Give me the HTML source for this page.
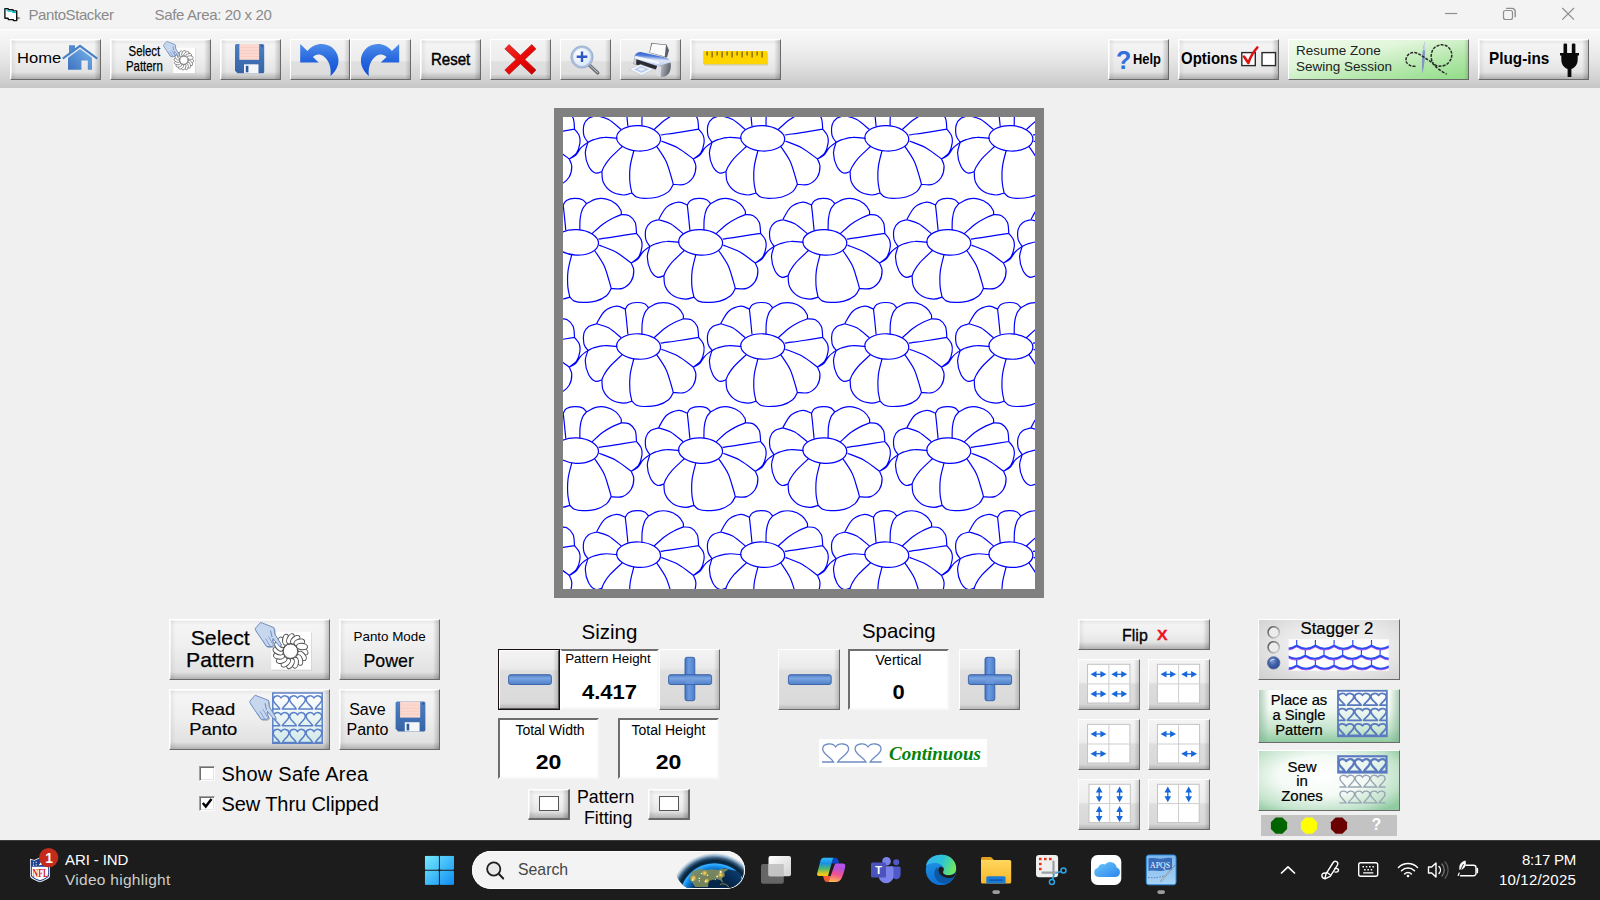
<!DOCTYPE html>
<html lang="en">
<head>
<meta charset="utf-8">
<title>PantoStacker</title>
<style>
html,body{margin:0;padding:0;}
body{width:1600px;height:900px;overflow:hidden;background:#f0f0f0;position:relative;font-family:"Liberation Sans",sans-serif;color:#000;}
.abs{position:absolute;}
svg{position:absolute;overflow:visible;}
/* title bar */
#title{left:0;top:0;width:1600px;height:29px;background:#f3f3f3;}
#title .t{position:absolute;top:6px;font-size:15px;color:#8a8a8a;white-space:nowrap;}
/* toolbar */
#toolbar{left:0;top:29px;width:1600px;height:59px;background:linear-gradient(#fdfdfd 0,#fdfdfd 1px,#f7f7f7 2px,#f3f3f3 20%,#e7e7e7 50%,#d2d2d2 85%,#c6c6c6 100%);}
.btn{position:absolute;box-sizing:border-box;border:1px solid;border-color:#fff #6a6a6a #6a6a6a #fff;background:linear-gradient(to right,rgba(0,0,0,0) calc(100% - 6px),rgba(0,0,0,0.2) 100%),linear-gradient(to bottom,rgba(0,0,0,0) calc(100% - 7px),rgba(0,0,0,0.2) 100%),linear-gradient(to right,rgba(255,255,255,0.9) 0,rgba(0,0,0,0.05) 1.5px,rgba(0,0,0,0) 6px),linear-gradient(to bottom,rgba(255,255,255,0.9) 0,rgba(0,0,0,0.05) 1.5px,rgba(0,0,0,0) 5px),linear-gradient(#f6f6f6,#efefef 45%,#dedede 100%);}
.btn .lab{position:absolute;white-space:nowrap;}
.tb{top:39px;height:41px;}
.glass{background:linear-gradient(to right,rgba(0,0,0,0) calc(100% - 5px),rgba(0,0,0,0.16) 100%),linear-gradient(to bottom,rgba(0,0,0,0) calc(100% - 5px),rgba(0,0,0,0.16) 100%),linear-gradient(#f3f3f3 0%,#ededed 52%,#e0e0e0 56%,#dbdbdb 100%);}
.glass2{background:linear-gradient(to right,rgba(0,0,0,0) calc(100% - 5px),rgba(0,0,0,0.16) 100%),linear-gradient(to bottom,rgba(0,0,0,0) calc(100% - 5px),rgba(0,0,0,0.16) 100%),linear-gradient(#f4f4f4 0%,#ebebeb 30%,#dfdfdf 36%,#d9d9d9 100%);}
.fb{width:62px;height:51px;background:linear-gradient(to right,rgba(0,0,0,0) calc(100% - 5px),rgba(0,0,0,0.16) 100%),linear-gradient(to bottom,rgba(0,0,0,0) calc(100% - 5px),rgba(0,0,0,0.18) 100%),linear-gradient(#f4f4f4 0%,#ededed 45%,#dddddd 50%,#d7d7d7 100%);}
.green{background:linear-gradient(to right,rgba(0,0,0,0) calc(100% - 4px),rgba(0,0,0,0.12) 100%),linear-gradient(168deg,#f0fbec 0%,#e2f6dc 35%,#b4e8ab 68%,#90dc88 100%);}
/* canvas */
#canvas{left:554px;top:108px;width:472px;height:472px;border:9px solid #808080;background:#fff;overflow:hidden;}
/* fields */
.field{position:absolute;box-sizing:border-box;background:#fff;border:2px solid;border-color:#6e6e6e #f8f8f8 #f8f8f8 #6e6e6e;}
.field .cap{position:absolute;left:0;right:0;text-align:center;font-size:14px;top:1px;white-space:nowrap;}
.field .val{position:absolute;left:0;right:0;text-align:center;font-weight:bold;font-size:21px;white-space:nowrap;}
.h{position:absolute;font-size:20px;white-space:nowrap;}
.chk{position:absolute;box-sizing:border-box;width:16px;height:15px;background:#fff;border:1px solid;border-color:#a0a0a0 #fdfdfd #fdfdfd #a0a0a0;box-shadow:inset 1px 1px 0 #6e6e6e,inset -1px -1px 0 #e3e3e3;}
/* taskbar */
#taskbar{left:0;top:840px;width:1600px;height:60px;background:#1c1c1c;}
</style>
</head>
<body>
<div id="title" class="abs">
<svg style="left:0;top:0" width="30" height="30" viewBox="0 0 30 30">
<path d="M17.200 16.500l3.500 1.600-3.500 2z" fill="#8a8a8a"/>
<path d="M4.900 8.600h3.300l.4 1.200h4.400l.4 1.100h3.300v9.700h-3.300v-1h-5l-.3-1.300h-3.200z" fill="#fff" stroke="#111" stroke-width="1.400" stroke-linejoin="round"/>
<path d="M5.600 9.300h2.200l.4 1.200h4.400l.4 1.100h3v1.300h-3.600l-.4-1.100h-4.400l-.4-1.200h-1.600z" fill="#00c4cc"/>
</svg>
<span class="t" id="t1" style="left:28.500px;letter-spacing:-0.42px">PantoStacker</span>
<span class="t" id="t2" style="left:154.500px;letter-spacing:-0.36px">Safe Area: 20 x 20</span>
<svg style="left:1430px;top:0" width="170" height="30" viewBox="1430 0 170 30" fill="none" stroke="#8e8e8e" stroke-width="1.200">
<path d="M1445 13.500h12.200"/>
<rect x="1503.500" y="10.500" width="9" height="9" rx="2"/>
<path d="M1506 8.400h6a3.200 3.200 0 0 1 3.200 3.200v5.600" stroke-width="1.400"/>
<path d="M1562.300 8l11.700 11.700M1574 8l-11.700 11.700"/>
</svg>

</div>
<div id="toolbar" class="abs"></div>
<div class="btn tb" style="left:10px;width:91px"><span class="lab" id="l_home" style="left:5.500px;top:10.500px;font-size:13.800px;transform-origin:0 50%;transform:scaleX(1.2)">Home</span></div>
<div class="btn tb" style="left:110px;width:101px"><span class="lab" id="l_sel" style="left:15px;top:3px;font-size:15px;line-height:15px;text-align:center;transform-origin:0 0;transform:scaleX(0.76);-webkit-text-stroke:0.25px #000">Select<br>Pattern</span></div>
<div class="btn tb" style="left:220px;width:61px"></div>
<div class="btn tb glass" style="left:290px;width:60px"></div>
<div class="btn tb glass" style="left:350px;width:61px"></div>
<div class="btn tb" style="left:420px;width:61px"><span class="lab" id="l_reset" style="left:10px;top:11px;font-size:16px;-webkit-text-stroke:0.45px #000;transform-origin:0 50%;transform:scaleX(0.94)">Reset</span></div>
<div class="btn tb glass" style="left:490px;width:61px"></div>
<div class="btn tb glass" style="left:560px;width:51px"></div>
<div class="btn tb glass" style="left:620px;width:61px"></div>
<div class="btn tb" style="left:690px;width:91px"></div>
<div class="btn tb" style="left:1108px;width:61px"><span class="lab" id="l_q" style="left:7px;top:6px;font-size:25px;font-weight:bold;color:#2f6fde">?</span><span class="lab" id="l_help" style="left:24px;top:10px;font-size:15px;font-weight:bold;transform-origin:0 50%;transform:scaleX(0.86)">Help</span></div>
<div class="btn tb" style="left:1178px;width:101px"><span class="lab" id="l_opt" style="left:2px;top:9px;font-size:17px;font-weight:bold;transform-origin:0 50%;transform:scaleX(0.88)">Options</span></div>
<div class="btn tb green" style="left:1288px;width:181px"><span class="lab" id="l_res" style="left:7px;top:3px;font-size:13.500px;line-height:16px;color:#222">Resume Zone<br>Sewing Session</span></div>
<div class="btn tb" style="left:1478px;width:111px"><span class="lab" id="l_plug" style="left:10px;top:9px;font-size:17px;font-weight:bold;transform-origin:0 50%;transform:scaleX(0.9)">Plug-ins</span></div>
<svg style="left:0;top:30px" width="1600" height="60" viewBox="0 30 1600 60">
<defs>
<linearGradient id="gHouse" x1="1" y1="0" x2="0" y2="1"><stop offset="0" stop-color="#74b4ee"/><stop offset="1" stop-color="#3f72bd"/></linearGradient>
<linearGradient id="gArrow" x1="0" y1="0" x2="0" y2="1"><stop offset="0" stop-color="#4d8cea"/><stop offset="0.5" stop-color="#2566de"/><stop offset="1" stop-color="#1450d2"/></linearGradient>
<linearGradient id="gRed" x1="0" y1="0" x2="1" y2="1"><stop offset="0" stop-color="#f03030"/><stop offset="0.5" stop-color="#e80808"/><stop offset="1" stop-color="#c80000"/></linearGradient>
<radialGradient id="gLens" cx="0.4" cy="0.35" r="0.7"><stop offset="0" stop-color="#ffffff"/><stop offset="1" stop-color="#d6e6f7"/></radialGradient>
<linearGradient id="gPrnTop" x1="0.6" y1="0" x2="0.4" y2="1"><stop offset="0" stop-color="#2f5cc4"/><stop offset="0.3" stop-color="#4f7cd8"/><stop offset="0.55" stop-color="#dfe8f8"/><stop offset="1" stop-color="#b4c9ee"/></linearGradient>
<linearGradient id="gPrnBody" x1="0" y1="0" x2="1" y2="0.2"><stop offset="0" stop-color="#dfe2e7"/><stop offset="0.35" stop-color="#b4b9c1"/><stop offset="1" stop-color="#5e636b"/></linearGradient>
<linearGradient id="gFloppy" x1="0" y1="0" x2="0" y2="1"><stop offset="0" stop-color="#4d7fc2"/><stop offset="1" stop-color="#3563a6"/></linearGradient>
</defs>
<!-- house -->
<g>
<path d="M69 45.300h6v5l-6 4.500z" fill="#4f8bd2"/>
<path d="M68 69.700v-13.500l12-9 12 9v13.500h-4.200v-9.300h-6.400v9.300z" fill="url(#gHouse)"/>
<path d="M62.800 58.600l17.200-12.700 17.200 12.700" fill="none" stroke="#4a7fc0" stroke-width="2.200" stroke-linejoin="round"/>
<path d="M65 59.300l15-11 15 11" fill="none" stroke="#e9eef5" stroke-width="1.100"/>
</g>
<!-- select pattern icon -->
<g>
<rect x="174" y="48.400" width="21.700" height="25.500" fill="#999" opacity="0.300"/>
<rect x="173.400" y="47.800" width="21.700" height="25.500" fill="#fff"/>
<g fill="#fff" stroke="#585858" stroke-width="0.6"><ellipse cx="190.8" cy="60.3" rx="3.1" ry="1.8" transform="rotate(28 190.8 60.3)"/><ellipse cx="190.2" cy="63.0" rx="3.1" ry="1.8" transform="rotate(50 190.2 63.0)"/><ellipse cx="188.7" cy="65.2" rx="3.1" ry="1.8" transform="rotate(73 188.7 65.2)"/><ellipse cx="186.5" cy="66.7" rx="3.1" ry="1.8" transform="rotate(96 186.5 66.7)"/><ellipse cx="183.8" cy="67.2" rx="3.1" ry="1.8" transform="rotate(118 183.8 67.2)"/><ellipse cx="181.1" cy="66.7" rx="3.1" ry="1.8" transform="rotate(140 181.1 66.7)"/><ellipse cx="178.9" cy="65.2" rx="3.1" ry="1.8" transform="rotate(163 178.9 65.2)"/><ellipse cx="177.4" cy="63.0" rx="3.1" ry="1.8" transform="rotate(186 177.4 63.0)"/><ellipse cx="176.9" cy="60.3" rx="3.1" ry="1.8" transform="rotate(208 176.9 60.3)"/><ellipse cx="177.4" cy="57.6" rx="3.1" ry="1.8" transform="rotate(230 177.4 57.6)"/><ellipse cx="178.9" cy="55.4" rx="3.1" ry="1.8" transform="rotate(253 178.9 55.4)"/><ellipse cx="181.1" cy="53.9" rx="3.1" ry="1.8" transform="rotate(276 181.1 53.9)"/><ellipse cx="183.8" cy="53.3" rx="3.1" ry="1.8" transform="rotate(298 183.8 53.3)"/><ellipse cx="186.5" cy="53.9" rx="3.1" ry="1.8" transform="rotate(320 186.5 53.9)"/><ellipse cx="188.7" cy="55.4" rx="3.1" ry="1.8" transform="rotate(343 188.7 55.4)"/><ellipse cx="190.2" cy="57.6" rx="3.1" ry="1.8" transform="rotate(366 190.2 57.6)"/><circle cx="183.8" cy="60.3" r="4.0"/></g>
<g transform="translate(163.5 41.4) scale(0.62) translate(-255.2 -622.4)"><path d="M255.2 628.500L260.600 622.400L274 627.600L274.800 634L281.500 645L279.500 646.500L273 638.500L272.500 641L274.500 644.500L272 646.500L266.500 646.500L256 631Z" fill="#5a6a80" opacity="0.450" transform="translate(1.200 1.400)"/><path d="M255.2 628.500L260.600 622.400L274 627.600L274.800 634L281.500 645L279.500 646.500L273 638.500L272.500 641L274.500 644.500L272 646.500L266.500 646.500L256 631Z" fill="#c7d7ee" stroke="#6f8fc2" stroke-width="1.27" stroke-linejoin="round"/><path d="M268.500 636.500l4.500 8M265.500 638.500l4.500 7.500M262.500 640l4 6" stroke="#7d9bc9" stroke-width="1.14" fill="none"/><path d="M270.500 630.500l1.500 6.500" stroke="#6583b5" stroke-width="1.14" fill="none"/></g>
</g>
<!-- floppy -->
<g>
<path d="M235 45.500a1.500 1.500 0 0 1 1.500-1.500h26.200a1.500 1.500 0 0 1 1.500 1.500v26.300a1.500 1.500 0 0 1-1.500 1.500h-25.200l-2.500-2.500z" fill="url(#gFloppy)"/>
<rect x="239.400" y="44" width="19.700" height="15.800" fill="#fbd9d0"/>
<path d="M239.400 47.500h19.700M239.400 50.500h19.700M239.400 53.500h19.700M239.400 56.500h19.700" stroke="#f8c4b8" stroke-width="0.600"/>
<rect x="244" y="64.300" width="14.500" height="9" fill="#f4f6fa"/>
<rect x="245.800" y="65.800" width="2.600" height="6.500" fill="#2f5a9c"/>
<rect x="261.300" y="45.300" width="1.700" height="1.700" fill="#2c558f"/>
</g>
<!-- undo / redo -->
<path id="undoArrow" d="M300.200 44.100v18.500h18.500l-5.800-5.700c2.500-2.800 7-3.500 11-.5 4.500 3.400 7.800 10.500 6.600 19.700 4.600-4 8-9.500 8-15.600 0-8-6.500-16.400-16.800-16.400-5.500 0-10.500 2.500-14.200 6.800z" fill="url(#gArrow)"/>
<path d="M399.200 44.100v18.500h-18.500l5.800-5.700c-2.500-2.800-7-3.500-11-.5-4.500 3.400-7.800 10.500-6.600 19.700-4.600-4-8-9.500-8-15.600 0-8 6.500-16.400 16.800-16.400 5.500 0 10.500 2.500 14.200 6.800z" fill="url(#gArrow)"/>
<!-- red X -->
<path d="M509 44.500l11.400 10.700 11.400-10.700 4.200 4.400-11.200 10.500 11.200 10.500-4.200 4.500-11.400-10.700-11.400 10.700-4.200-4.500 11.200-10.500-11.200-10.500z" fill="url(#gRed)" stroke="#b00000" stroke-width="0.500"/>
<!-- zoom -->
<g>
<path d="M589.500 65.200l8.300 7.700" stroke="#6a6f78" stroke-width="3.400" stroke-linecap="round"/>
<path d="M590 65.500l7.500 7" stroke="#c9ced6" stroke-width="1" stroke-linecap="round"/>
<circle cx="582" cy="57" r="10" fill="url(#gLens)" stroke="#a9c0de" stroke-width="2.200"/>
<circle cx="582" cy="57" r="11.200" fill="none" stroke="#8a9bb5" stroke-width="0.600"/>
<path d="M582 51.500v10.500M576.700 56.700h10.600" stroke="#2c58c8" stroke-width="2.400"/>
</g>
<!-- printer -->
<g>
<path d="M651.300 42.900l15.200 1.500 2.500 5.800-2 7.300-17.700-4.800z" fill="#5a5e66"/>
<path d="M652 43.700l14 1.400-1.200 11.300-15-3.800z" fill="#fbfbfb"/>
<path d="M633.800 58.500c.3-2.500 1.600-5 3.500-5.800 1.500-.7 3-.8 4.500-.5l23.700 5.400c2.500.7 4.500 2.500 5 4.800l-13.300 3.500-23.400-6.500z" fill="url(#gPrnTop)"/>
<path d="M636 57.200l22 5.600" stroke="#fff" stroke-width="2.600" opacity="0.750" stroke-linecap="round"/>
<path d="M634.200 58.500l23 7.400-1 3.600-22.600-5.500z" fill="#2a2c31"/>
<path d="M633.800 58.500c-.6 1.800-.6 4 .3 5.700l2 .6.300-5.500z" fill="#c9ccd2"/>
<path d="M657.200 65.900l13.300-3.500c.8 3.500.3 7.500-1.600 10.800-1.500 2.300-4 3.700-7.300 3.900l-5.400-1.900z" fill="url(#gPrnBody)"/>
<path d="M656.200 69.500l1-3.600 4 1.200-.5 10-4.500-1.900z" fill="#e2e5ea" opacity="0.800"/>
<path d="M640.500 64.400l13.200 4.900-12.200 5.900-12-5.900z" fill="#f6f8fc" stroke="#b4bac6" stroke-width="0.500"/>
<path d="M640.800 66l8.600 3.300-7.800 3.800-7.800-3.700z" fill="#b9cdee"/>
<path d="M641 67.500l4.500 1.800-3.800 1.800-4-1.800z" fill="#e8eef8"/>
</g>
<!-- ruler -->
<g>
<rect x="703.500" y="51.600" width="64" height="13" fill="#bfa000" opacity="0.350" transform="translate(0.600 0.900)"/>
<rect x="703.200" y="51" width="64" height="13" fill="#ffd500"/>
<path d="M707.100 51.600v3.800M717.100 51.600v3.800M727.100 51.600v3.800M737.100 51.600v3.800M747.100 51.600v3.800M757.100 51.600v3.800M712.100 51.600v6M722.100 51.600v6M732.100 51.600v6M742.100 51.600v6M752.100 51.600v6M762.100 51.600v6" stroke="#6b5600" stroke-width="1.200"/>
</g>
<!-- options checkboxes -->
<g>
<rect x="1241.800" y="52.600" width="13.500" height="13" fill="#fff" stroke="#2a2a2a" stroke-width="1.400"/>
<rect x="1262" y="52.600" width="13.500" height="13" fill="#fff" stroke="#2a2a2a" stroke-width="1.400"/>
<path d="M1244 56.500l4.300 6.500c2-6 5-11 9-15.500" fill="none" stroke="#e01010" stroke-width="2.600" stroke-linejoin="round" stroke-linecap="round"/>
</g>
<!-- needle & thread -->
<g fill="none">
<path d="M1424.800 41.500c.8 10 .2 22-2.300 32-1.200-10-.8-22 2.300-32z" fill="#8497c6"/><path d="M1424.800 41.500c.4 3 .4 6 .2 9l-2-.2c.4-3 1-6 1.800-8.800z" fill="#c9d3e8"/>
<path d="M1415.5 66.4C1414.8 66.3 1412.5 66.5 1411.0 65.9C1409.5 65.2 1407.5 63.9 1406.7 62.7C1405.9 61.4 1405.8 59.8 1406.2 58.4C1406.6 57.0 1407.6 55.1 1408.9 54.1C1410.1 53.2 1412.0 52.5 1413.7 52.5C1415.4 52.5 1417.1 53.2 1419.0 54.1C1420.9 55.0 1422.8 56.5 1424.9 57.9C1426.9 59.2 1429.5 60.7 1431.3 62.1C1433.0 63.6 1433.9 65.0 1435.5 66.4C1437.1 67.8 1439.0 69.4 1440.9 70.7C1442.7 72.0 1445.8 73.6 1446.7 74.1M1431.8 61.1C1431.7 60.0 1430.9 56.8 1431.3 54.7C1431.6 52.5 1432.3 49.9 1433.9 48.3C1435.5 46.6 1438.6 45.1 1440.9 44.8C1443.2 44.5 1446.0 45.4 1447.8 46.7C1449.6 48.0 1451.0 50.5 1451.5 52.5C1452.1 54.6 1451.8 57.0 1451.0 58.9C1450.2 60.9 1448.4 63.1 1446.7 64.3C1445.0 65.5 1442.7 66.0 1440.9 66.1C1439.0 66.3 1437.0 65.7 1435.5 65.1C1434.1 64.4 1432.9 62.6 1432.3 62.1" stroke="#2a2a2a" stroke-width="1.500" stroke-dasharray="3 1.200" fill="none"/>
</g>
<!-- plug -->
<g fill="#0a0a0a">
<rect x="1563.500" y="43.600" width="3.600" height="10" rx="1.200"/>
<rect x="1571.800" y="43.600" width="3.600" height="10" rx="1.200"/>
<path d="M1560 53h19v2.500h-1.300v4c0 5-3 8.500-6.300 9.500v8h-3.800v-8c-3.300-1-6.300-4.500-6.300-9.500v-4h-1.300z"/>
</g>

</svg>

<div id="canvas" class="abs">
<svg width="472" height="472" viewBox="0 0 472 472" style="left:0;top:0" fill="none" stroke="#0000ff" stroke-width="1.200">
<g transform="translate(-110.6 -82.8)"><ellipse rx="22" ry="12.7" transform="rotate(3)"/><path d="M-10.7 -12.0C-10.9 -14.2 -11.6 -21.1 -12.0 -25.3C-12.4 -29.6 -13.1 -35.3 -13.3 -37.3M3.3 -12.3C3.4 -14.1 3.2 -19.8 3.6 -23.3C4.0 -26.8 4.9 -30.8 6.0 -33.3C7.1 -35.9 9.3 -37.8 10.0 -38.7M15.3 -8.7C17.1 -10.2 22.7 -15.5 26.0 -18.0C29.3 -20.5 32.2 -22.1 35.3 -23.7C38.4 -25.4 43.1 -27.1 44.7 -27.7M22.0 -3.3C25.1 -3.8 34.3 -5.0 40.7 -6.0C47.0 -7.0 56.8 -8.6 60.0 -9.1M22.7 2.7C25.4 3.8 34.0 6.6 39.3 9.6C44.7 12.6 52.1 18.8 54.7 20.7M17.7 7.6C19.3 10.1 24.8 17.5 27.3 22.7C29.8 27.8 31.4 34.8 32.7 38.7C33.9 42.6 34.3 44.8 34.7 46.0M-4.7 12.0C-5.3 14.7 -7.7 22.7 -8.4 28.0C-9.1 33.3 -9.0 39.6 -8.7 44.0C-8.4 48.4 -7.0 52.9 -6.7 54.7M-16.1 7.9C-18.2 9.9 -25.6 16.6 -28.7 20.0C-31.7 23.4 -33.1 25.8 -34.4 28.0C-35.7 30.2 -36.3 32.4 -36.7 33.3M-21.3 0.0C-23.4 -0.2 -30.1 -1.2 -34.0 -0.9C-37.9 -0.7 -41.9 0.5 -44.7 1.3C-47.4 2.2 -49.7 3.6 -50.7 4.0M-42.0 -22.7C-40.0 -22.0 -34.1 -21.0 -30.0 -18.7C-25.9 -16.3 -19.4 -10.3 -17.3 -8.7M-13.3 -37.3C-14.8 -37.8 -18.6 -40.6 -22.0 -40.3C-25.4 -39.9 -30.7 -38.2 -34.0 -35.3C-37.3 -32.4 -40.7 -25.0 -42.0 -22.9M-13.3 -37.3C-12.8 -38.1 -11.9 -40.9 -10.0 -42.0C-8.1 -43.1 -4.7 -43.9 -2.0 -44.0C0.7 -44.1 4.0 -43.6 6.0 -42.7C8.0 -41.8 9.3 -39.3 10.0 -38.7M10.0 -38.7C11.6 -39.4 16.0 -42.6 19.3 -43.3C22.7 -44.1 26.7 -44.1 30.0 -43.3C33.3 -42.6 36.9 -40.6 39.3 -38.7C41.7 -36.8 43.5 -33.8 44.4 -32.0C45.3 -30.2 44.6 -28.4 44.7 -27.7M44.7 -27.7C46.0 -27.6 50.3 -28.0 52.7 -26.7C55.0 -25.4 57.4 -22.9 58.7 -20.0C59.9 -17.1 59.8 -10.9 60.0 -9.1M60.0 -9.1C60.8 -8.0 63.8 -5.1 64.7 -2.7C65.6 -0.3 65.8 2.4 65.3 5.3C64.9 8.2 63.8 12.1 62.0 14.7C60.2 17.2 55.9 19.7 54.7 20.7M54.7 20.7C55.1 21.9 57.3 25.0 57.3 28.0C57.3 31.0 56.6 35.7 54.7 38.7C52.8 41.7 49.3 44.8 46.0 46.0C42.7 47.2 36.6 46.0 34.7 46.0M34.7 46.0C33.9 47.2 32.6 51.2 30.0 53.3C27.4 55.4 23.3 57.6 19.3 58.7C15.3 59.8 9.6 60.0 6.0 60.0C2.4 60.0 0.1 59.6 -2.0 58.7C-4.1 57.8 -5.9 55.3 -6.7 54.7M-6.7 54.7C-8.1 55.0 -11.9 56.9 -15.3 56.7C-18.8 56.4 -24.0 55.4 -27.3 53.3C-30.7 51.2 -33.8 47.3 -35.3 44.0C-36.9 40.7 -36.4 35.1 -36.7 33.3M-36.7 33.3C-37.8 33.6 -41.1 35.6 -43.3 34.7C-45.6 33.8 -48.3 31.3 -50.0 28.0C-51.7 24.7 -53.2 18.7 -53.3 14.7C-53.4 10.7 -51.1 5.8 -50.7 4.0M-50.7 4.0C-51.3 2.9 -54.0 0.2 -54.7 -2.7C-55.3 -5.6 -55.4 -10.4 -54.7 -13.3C-53.9 -16.2 -52.1 -18.4 -50.0 -20.0C-47.9 -21.6 -43.3 -22.2 -42.0 -22.7M54.7 20.7C55.8 20.0 59.4 18.5 61.3 16.7C63.3 14.8 64.6 11.4 66.3 9.6C67.9 7.8 69.9 6.5 71.1 5.6C72.3 4.7 73.1 4.3 73.5 4.0"/></g>
<g transform="translate(13.5 -82.8)"><ellipse rx="22" ry="12.7" transform="rotate(3)"/><path d="M-10.7 -12.0C-10.9 -14.2 -11.6 -21.1 -12.0 -25.3C-12.4 -29.6 -13.1 -35.3 -13.3 -37.3M3.3 -12.3C3.4 -14.1 3.2 -19.8 3.6 -23.3C4.0 -26.8 4.9 -30.8 6.0 -33.3C7.1 -35.9 9.3 -37.8 10.0 -38.7M15.3 -8.7C17.1 -10.2 22.7 -15.5 26.0 -18.0C29.3 -20.5 32.2 -22.1 35.3 -23.7C38.4 -25.4 43.1 -27.1 44.7 -27.7M22.0 -3.3C25.1 -3.8 34.3 -5.0 40.7 -6.0C47.0 -7.0 56.8 -8.6 60.0 -9.1M22.7 2.7C25.4 3.8 34.0 6.6 39.3 9.6C44.7 12.6 52.1 18.8 54.7 20.7M17.7 7.6C19.3 10.1 24.8 17.5 27.3 22.7C29.8 27.8 31.4 34.8 32.7 38.7C33.9 42.6 34.3 44.8 34.7 46.0M-4.7 12.0C-5.3 14.7 -7.7 22.7 -8.4 28.0C-9.1 33.3 -9.0 39.6 -8.7 44.0C-8.4 48.4 -7.0 52.9 -6.7 54.7M-16.1 7.9C-18.2 9.9 -25.6 16.6 -28.7 20.0C-31.7 23.4 -33.1 25.8 -34.4 28.0C-35.7 30.2 -36.3 32.4 -36.7 33.3M-21.3 0.0C-23.4 -0.2 -30.1 -1.2 -34.0 -0.9C-37.9 -0.7 -41.9 0.5 -44.7 1.3C-47.4 2.2 -49.7 3.6 -50.7 4.0M-42.0 -22.7C-40.0 -22.0 -34.1 -21.0 -30.0 -18.7C-25.9 -16.3 -19.4 -10.3 -17.3 -8.7M-13.3 -37.3C-14.8 -37.8 -18.6 -40.6 -22.0 -40.3C-25.4 -39.9 -30.7 -38.2 -34.0 -35.3C-37.3 -32.4 -40.7 -25.0 -42.0 -22.9M-13.3 -37.3C-12.8 -38.1 -11.9 -40.9 -10.0 -42.0C-8.1 -43.1 -4.7 -43.9 -2.0 -44.0C0.7 -44.1 4.0 -43.6 6.0 -42.7C8.0 -41.8 9.3 -39.3 10.0 -38.7M10.0 -38.7C11.6 -39.4 16.0 -42.6 19.3 -43.3C22.7 -44.1 26.7 -44.1 30.0 -43.3C33.3 -42.6 36.9 -40.6 39.3 -38.7C41.7 -36.8 43.5 -33.8 44.4 -32.0C45.3 -30.2 44.6 -28.4 44.7 -27.7M44.7 -27.7C46.0 -27.6 50.3 -28.0 52.7 -26.7C55.0 -25.4 57.4 -22.9 58.7 -20.0C59.9 -17.1 59.8 -10.9 60.0 -9.1M60.0 -9.1C60.8 -8.0 63.8 -5.1 64.7 -2.7C65.6 -0.3 65.8 2.4 65.3 5.3C64.9 8.2 63.8 12.1 62.0 14.7C60.2 17.2 55.9 19.7 54.7 20.7M54.7 20.7C55.1 21.9 57.3 25.0 57.3 28.0C57.3 31.0 56.6 35.7 54.7 38.7C52.8 41.7 49.3 44.8 46.0 46.0C42.7 47.2 36.6 46.0 34.7 46.0M34.7 46.0C33.9 47.2 32.6 51.2 30.0 53.3C27.4 55.4 23.3 57.6 19.3 58.7C15.3 59.8 9.6 60.0 6.0 60.0C2.4 60.0 0.1 59.6 -2.0 58.7C-4.1 57.8 -5.9 55.3 -6.7 54.7M-6.7 54.7C-8.1 55.0 -11.9 56.9 -15.3 56.7C-18.8 56.4 -24.0 55.4 -27.3 53.3C-30.7 51.2 -33.8 47.3 -35.3 44.0C-36.9 40.7 -36.4 35.1 -36.7 33.3M-36.7 33.3C-37.8 33.6 -41.1 35.6 -43.3 34.7C-45.6 33.8 -48.3 31.3 -50.0 28.0C-51.7 24.7 -53.2 18.7 -53.3 14.7C-53.4 10.7 -51.1 5.8 -50.7 4.0M-50.7 4.0C-51.3 2.9 -54.0 0.2 -54.7 -2.7C-55.3 -5.6 -55.4 -10.4 -54.7 -13.3C-53.9 -16.2 -52.1 -18.4 -50.0 -20.0C-47.9 -21.6 -43.3 -22.2 -42.0 -22.7M54.7 20.7C55.8 20.0 59.4 18.5 61.3 16.7C63.3 14.8 64.6 11.4 66.3 9.6C67.9 7.8 69.9 6.5 71.1 5.6C72.3 4.7 73.1 4.3 73.5 4.0"/></g>
<g transform="translate(137.6 -82.8)"><ellipse rx="22" ry="12.7" transform="rotate(3)"/><path d="M-10.7 -12.0C-10.9 -14.2 -11.6 -21.1 -12.0 -25.3C-12.4 -29.6 -13.1 -35.3 -13.3 -37.3M3.3 -12.3C3.4 -14.1 3.2 -19.8 3.6 -23.3C4.0 -26.8 4.9 -30.8 6.0 -33.3C7.1 -35.9 9.3 -37.8 10.0 -38.7M15.3 -8.7C17.1 -10.2 22.7 -15.5 26.0 -18.0C29.3 -20.5 32.2 -22.1 35.3 -23.7C38.4 -25.4 43.1 -27.1 44.7 -27.7M22.0 -3.3C25.1 -3.8 34.3 -5.0 40.7 -6.0C47.0 -7.0 56.8 -8.6 60.0 -9.1M22.7 2.7C25.4 3.8 34.0 6.6 39.3 9.6C44.7 12.6 52.1 18.8 54.7 20.7M17.7 7.6C19.3 10.1 24.8 17.5 27.3 22.7C29.8 27.8 31.4 34.8 32.7 38.7C33.9 42.6 34.3 44.8 34.7 46.0M-4.7 12.0C-5.3 14.7 -7.7 22.7 -8.4 28.0C-9.1 33.3 -9.0 39.6 -8.7 44.0C-8.4 48.4 -7.0 52.9 -6.7 54.7M-16.1 7.9C-18.2 9.9 -25.6 16.6 -28.7 20.0C-31.7 23.4 -33.1 25.8 -34.4 28.0C-35.7 30.2 -36.3 32.4 -36.7 33.3M-21.3 0.0C-23.4 -0.2 -30.1 -1.2 -34.0 -0.9C-37.9 -0.7 -41.9 0.5 -44.7 1.3C-47.4 2.2 -49.7 3.6 -50.7 4.0M-42.0 -22.7C-40.0 -22.0 -34.1 -21.0 -30.0 -18.7C-25.9 -16.3 -19.4 -10.3 -17.3 -8.7M-13.3 -37.3C-14.8 -37.8 -18.6 -40.6 -22.0 -40.3C-25.4 -39.9 -30.7 -38.2 -34.0 -35.3C-37.3 -32.4 -40.7 -25.0 -42.0 -22.9M-13.3 -37.3C-12.8 -38.1 -11.9 -40.9 -10.0 -42.0C-8.1 -43.1 -4.7 -43.9 -2.0 -44.0C0.7 -44.1 4.0 -43.6 6.0 -42.7C8.0 -41.8 9.3 -39.3 10.0 -38.7M10.0 -38.7C11.6 -39.4 16.0 -42.6 19.3 -43.3C22.7 -44.1 26.7 -44.1 30.0 -43.3C33.3 -42.6 36.9 -40.6 39.3 -38.7C41.7 -36.8 43.5 -33.8 44.4 -32.0C45.3 -30.2 44.6 -28.4 44.7 -27.7M44.7 -27.7C46.0 -27.6 50.3 -28.0 52.7 -26.7C55.0 -25.4 57.4 -22.9 58.7 -20.0C59.9 -17.1 59.8 -10.9 60.0 -9.1M60.0 -9.1C60.8 -8.0 63.8 -5.1 64.7 -2.7C65.6 -0.3 65.8 2.4 65.3 5.3C64.9 8.2 63.8 12.1 62.0 14.7C60.2 17.2 55.9 19.7 54.7 20.7M54.7 20.7C55.1 21.9 57.3 25.0 57.3 28.0C57.3 31.0 56.6 35.7 54.7 38.7C52.8 41.7 49.3 44.8 46.0 46.0C42.7 47.2 36.6 46.0 34.7 46.0M34.7 46.0C33.9 47.2 32.6 51.2 30.0 53.3C27.4 55.4 23.3 57.6 19.3 58.7C15.3 59.8 9.6 60.0 6.0 60.0C2.4 60.0 0.1 59.6 -2.0 58.7C-4.1 57.8 -5.9 55.3 -6.7 54.7M-6.7 54.7C-8.1 55.0 -11.9 56.9 -15.3 56.7C-18.8 56.4 -24.0 55.4 -27.3 53.3C-30.7 51.2 -33.8 47.3 -35.3 44.0C-36.9 40.7 -36.4 35.1 -36.7 33.3M-36.7 33.3C-37.8 33.6 -41.1 35.6 -43.3 34.7C-45.6 33.8 -48.3 31.3 -50.0 28.0C-51.7 24.7 -53.2 18.7 -53.3 14.7C-53.4 10.7 -51.1 5.8 -50.7 4.0M-50.7 4.0C-51.3 2.9 -54.0 0.2 -54.7 -2.7C-55.3 -5.6 -55.4 -10.4 -54.7 -13.3C-53.9 -16.2 -52.1 -18.4 -50.0 -20.0C-47.9 -21.6 -43.3 -22.2 -42.0 -22.7M54.7 20.7C55.8 20.0 59.4 18.5 61.3 16.7C63.3 14.8 64.6 11.4 66.3 9.6C67.9 7.8 69.9 6.5 71.1 5.6C72.3 4.7 73.1 4.3 73.5 4.0"/></g>
<g transform="translate(261.8 -82.8)"><ellipse rx="22" ry="12.7" transform="rotate(3)"/><path d="M-10.7 -12.0C-10.9 -14.2 -11.6 -21.1 -12.0 -25.3C-12.4 -29.6 -13.1 -35.3 -13.3 -37.3M3.3 -12.3C3.4 -14.1 3.2 -19.8 3.6 -23.3C4.0 -26.8 4.9 -30.8 6.0 -33.3C7.1 -35.9 9.3 -37.8 10.0 -38.7M15.3 -8.7C17.1 -10.2 22.7 -15.5 26.0 -18.0C29.3 -20.5 32.2 -22.1 35.3 -23.7C38.4 -25.4 43.1 -27.1 44.7 -27.7M22.0 -3.3C25.1 -3.8 34.3 -5.0 40.7 -6.0C47.0 -7.0 56.8 -8.6 60.0 -9.1M22.7 2.7C25.4 3.8 34.0 6.6 39.3 9.6C44.7 12.6 52.1 18.8 54.7 20.7M17.7 7.6C19.3 10.1 24.8 17.5 27.3 22.7C29.8 27.8 31.4 34.8 32.7 38.7C33.9 42.6 34.3 44.8 34.7 46.0M-4.7 12.0C-5.3 14.7 -7.7 22.7 -8.4 28.0C-9.1 33.3 -9.0 39.6 -8.7 44.0C-8.4 48.4 -7.0 52.9 -6.7 54.7M-16.1 7.9C-18.2 9.9 -25.6 16.6 -28.7 20.0C-31.7 23.4 -33.1 25.8 -34.4 28.0C-35.7 30.2 -36.3 32.4 -36.7 33.3M-21.3 0.0C-23.4 -0.2 -30.1 -1.2 -34.0 -0.9C-37.9 -0.7 -41.9 0.5 -44.7 1.3C-47.4 2.2 -49.7 3.6 -50.7 4.0M-42.0 -22.7C-40.0 -22.0 -34.1 -21.0 -30.0 -18.7C-25.9 -16.3 -19.4 -10.3 -17.3 -8.7M-13.3 -37.3C-14.8 -37.8 -18.6 -40.6 -22.0 -40.3C-25.4 -39.9 -30.7 -38.2 -34.0 -35.3C-37.3 -32.4 -40.7 -25.0 -42.0 -22.9M-13.3 -37.3C-12.8 -38.1 -11.9 -40.9 -10.0 -42.0C-8.1 -43.1 -4.7 -43.9 -2.0 -44.0C0.7 -44.1 4.0 -43.6 6.0 -42.7C8.0 -41.8 9.3 -39.3 10.0 -38.7M10.0 -38.7C11.6 -39.4 16.0 -42.6 19.3 -43.3C22.7 -44.1 26.7 -44.1 30.0 -43.3C33.3 -42.6 36.9 -40.6 39.3 -38.7C41.7 -36.8 43.5 -33.8 44.4 -32.0C45.3 -30.2 44.6 -28.4 44.7 -27.7M44.7 -27.7C46.0 -27.6 50.3 -28.0 52.7 -26.7C55.0 -25.4 57.4 -22.9 58.7 -20.0C59.9 -17.1 59.8 -10.9 60.0 -9.1M60.0 -9.1C60.8 -8.0 63.8 -5.1 64.7 -2.7C65.6 -0.3 65.8 2.4 65.3 5.3C64.9 8.2 63.8 12.1 62.0 14.7C60.2 17.2 55.9 19.7 54.7 20.7M54.7 20.7C55.1 21.9 57.3 25.0 57.3 28.0C57.3 31.0 56.6 35.7 54.7 38.7C52.8 41.7 49.3 44.8 46.0 46.0C42.7 47.2 36.6 46.0 34.7 46.0M34.7 46.0C33.9 47.2 32.6 51.2 30.0 53.3C27.4 55.4 23.3 57.6 19.3 58.7C15.3 59.8 9.6 60.0 6.0 60.0C2.4 60.0 0.1 59.6 -2.0 58.7C-4.1 57.8 -5.9 55.3 -6.7 54.7M-6.7 54.7C-8.1 55.0 -11.9 56.9 -15.3 56.7C-18.8 56.4 -24.0 55.4 -27.3 53.3C-30.7 51.2 -33.8 47.3 -35.3 44.0C-36.9 40.7 -36.4 35.1 -36.7 33.3M-36.7 33.3C-37.8 33.6 -41.1 35.6 -43.3 34.7C-45.6 33.8 -48.3 31.3 -50.0 28.0C-51.7 24.7 -53.2 18.7 -53.3 14.7C-53.4 10.7 -51.1 5.8 -50.7 4.0M-50.7 4.0C-51.3 2.9 -54.0 0.2 -54.7 -2.7C-55.3 -5.6 -55.4 -10.4 -54.7 -13.3C-53.9 -16.2 -52.1 -18.4 -50.0 -20.0C-47.9 -21.6 -43.3 -22.2 -42.0 -22.7M54.7 20.7C55.8 20.0 59.4 18.5 61.3 16.7C63.3 14.8 64.6 11.4 66.3 9.6C67.9 7.8 69.9 6.5 71.1 5.6C72.3 4.7 73.1 4.3 73.5 4.0"/></g>
<g transform="translate(385.8 -82.8)"><ellipse rx="22" ry="12.7" transform="rotate(3)"/><path d="M-10.7 -12.0C-10.9 -14.2 -11.6 -21.1 -12.0 -25.3C-12.4 -29.6 -13.1 -35.3 -13.3 -37.3M3.3 -12.3C3.4 -14.1 3.2 -19.8 3.6 -23.3C4.0 -26.8 4.9 -30.8 6.0 -33.3C7.1 -35.9 9.3 -37.8 10.0 -38.7M15.3 -8.7C17.1 -10.2 22.7 -15.5 26.0 -18.0C29.3 -20.5 32.2 -22.1 35.3 -23.7C38.4 -25.4 43.1 -27.1 44.7 -27.7M22.0 -3.3C25.1 -3.8 34.3 -5.0 40.7 -6.0C47.0 -7.0 56.8 -8.6 60.0 -9.1M22.7 2.7C25.4 3.8 34.0 6.6 39.3 9.6C44.7 12.6 52.1 18.8 54.7 20.7M17.7 7.6C19.3 10.1 24.8 17.5 27.3 22.7C29.8 27.8 31.4 34.8 32.7 38.7C33.9 42.6 34.3 44.8 34.7 46.0M-4.7 12.0C-5.3 14.7 -7.7 22.7 -8.4 28.0C-9.1 33.3 -9.0 39.6 -8.7 44.0C-8.4 48.4 -7.0 52.9 -6.7 54.7M-16.1 7.9C-18.2 9.9 -25.6 16.6 -28.7 20.0C-31.7 23.4 -33.1 25.8 -34.4 28.0C-35.7 30.2 -36.3 32.4 -36.7 33.3M-21.3 0.0C-23.4 -0.2 -30.1 -1.2 -34.0 -0.9C-37.9 -0.7 -41.9 0.5 -44.7 1.3C-47.4 2.2 -49.7 3.6 -50.7 4.0M-42.0 -22.7C-40.0 -22.0 -34.1 -21.0 -30.0 -18.7C-25.9 -16.3 -19.4 -10.3 -17.3 -8.7M-13.3 -37.3C-14.8 -37.8 -18.6 -40.6 -22.0 -40.3C-25.4 -39.9 -30.7 -38.2 -34.0 -35.3C-37.3 -32.4 -40.7 -25.0 -42.0 -22.9M-13.3 -37.3C-12.8 -38.1 -11.9 -40.9 -10.0 -42.0C-8.1 -43.1 -4.7 -43.9 -2.0 -44.0C0.7 -44.1 4.0 -43.6 6.0 -42.7C8.0 -41.8 9.3 -39.3 10.0 -38.7M10.0 -38.7C11.6 -39.4 16.0 -42.6 19.3 -43.3C22.7 -44.1 26.7 -44.1 30.0 -43.3C33.3 -42.6 36.9 -40.6 39.3 -38.7C41.7 -36.8 43.5 -33.8 44.4 -32.0C45.3 -30.2 44.6 -28.4 44.7 -27.7M44.7 -27.7C46.0 -27.6 50.3 -28.0 52.7 -26.7C55.0 -25.4 57.4 -22.9 58.7 -20.0C59.9 -17.1 59.8 -10.9 60.0 -9.1M60.0 -9.1C60.8 -8.0 63.8 -5.1 64.7 -2.7C65.6 -0.3 65.8 2.4 65.3 5.3C64.9 8.2 63.8 12.1 62.0 14.7C60.2 17.2 55.9 19.7 54.7 20.7M54.7 20.7C55.1 21.9 57.3 25.0 57.3 28.0C57.3 31.0 56.6 35.7 54.7 38.7C52.8 41.7 49.3 44.8 46.0 46.0C42.7 47.2 36.6 46.0 34.7 46.0M34.7 46.0C33.9 47.2 32.6 51.2 30.0 53.3C27.4 55.4 23.3 57.6 19.3 58.7C15.3 59.8 9.6 60.0 6.0 60.0C2.4 60.0 0.1 59.6 -2.0 58.7C-4.1 57.8 -5.9 55.3 -6.7 54.7M-6.7 54.7C-8.1 55.0 -11.9 56.9 -15.3 56.7C-18.8 56.4 -24.0 55.4 -27.3 53.3C-30.7 51.2 -33.8 47.3 -35.3 44.0C-36.9 40.7 -36.4 35.1 -36.7 33.3M-36.7 33.3C-37.8 33.6 -41.1 35.6 -43.3 34.7C-45.6 33.8 -48.3 31.3 -50.0 28.0C-51.7 24.7 -53.2 18.7 -53.3 14.7C-53.4 10.7 -51.1 5.8 -50.7 4.0M-50.7 4.0C-51.3 2.9 -54.0 0.2 -54.7 -2.7C-55.3 -5.6 -55.4 -10.4 -54.7 -13.3C-53.9 -16.2 -52.1 -18.4 -50.0 -20.0C-47.9 -21.6 -43.3 -22.2 -42.0 -22.7M54.7 20.7C55.8 20.0 59.4 18.5 61.3 16.7C63.3 14.8 64.6 11.4 66.3 9.6C67.9 7.8 69.9 6.5 71.1 5.6C72.3 4.7 73.1 4.3 73.5 4.0"/></g>
<g transform="translate(509.9 -82.8)"><ellipse rx="22" ry="12.7" transform="rotate(3)"/><path d="M-10.7 -12.0C-10.9 -14.2 -11.6 -21.1 -12.0 -25.3C-12.4 -29.6 -13.1 -35.3 -13.3 -37.3M3.3 -12.3C3.4 -14.1 3.2 -19.8 3.6 -23.3C4.0 -26.8 4.9 -30.8 6.0 -33.3C7.1 -35.9 9.3 -37.8 10.0 -38.7M15.3 -8.7C17.1 -10.2 22.7 -15.5 26.0 -18.0C29.3 -20.5 32.2 -22.1 35.3 -23.7C38.4 -25.4 43.1 -27.1 44.7 -27.7M22.0 -3.3C25.1 -3.8 34.3 -5.0 40.7 -6.0C47.0 -7.0 56.8 -8.6 60.0 -9.1M22.7 2.7C25.4 3.8 34.0 6.6 39.3 9.6C44.7 12.6 52.1 18.8 54.7 20.7M17.7 7.6C19.3 10.1 24.8 17.5 27.3 22.7C29.8 27.8 31.4 34.8 32.7 38.7C33.9 42.6 34.3 44.8 34.7 46.0M-4.7 12.0C-5.3 14.7 -7.7 22.7 -8.4 28.0C-9.1 33.3 -9.0 39.6 -8.7 44.0C-8.4 48.4 -7.0 52.9 -6.7 54.7M-16.1 7.9C-18.2 9.9 -25.6 16.6 -28.7 20.0C-31.7 23.4 -33.1 25.8 -34.4 28.0C-35.7 30.2 -36.3 32.4 -36.7 33.3M-21.3 0.0C-23.4 -0.2 -30.1 -1.2 -34.0 -0.9C-37.9 -0.7 -41.9 0.5 -44.7 1.3C-47.4 2.2 -49.7 3.6 -50.7 4.0M-42.0 -22.7C-40.0 -22.0 -34.1 -21.0 -30.0 -18.7C-25.9 -16.3 -19.4 -10.3 -17.3 -8.7M-13.3 -37.3C-14.8 -37.8 -18.6 -40.6 -22.0 -40.3C-25.4 -39.9 -30.7 -38.2 -34.0 -35.3C-37.3 -32.4 -40.7 -25.0 -42.0 -22.9M-13.3 -37.3C-12.8 -38.1 -11.9 -40.9 -10.0 -42.0C-8.1 -43.1 -4.7 -43.9 -2.0 -44.0C0.7 -44.1 4.0 -43.6 6.0 -42.7C8.0 -41.8 9.3 -39.3 10.0 -38.7M10.0 -38.7C11.6 -39.4 16.0 -42.6 19.3 -43.3C22.7 -44.1 26.7 -44.1 30.0 -43.3C33.3 -42.6 36.9 -40.6 39.3 -38.7C41.7 -36.8 43.5 -33.8 44.4 -32.0C45.3 -30.2 44.6 -28.4 44.7 -27.7M44.7 -27.7C46.0 -27.6 50.3 -28.0 52.7 -26.7C55.0 -25.4 57.4 -22.9 58.7 -20.0C59.9 -17.1 59.8 -10.9 60.0 -9.1M60.0 -9.1C60.8 -8.0 63.8 -5.1 64.7 -2.7C65.6 -0.3 65.8 2.4 65.3 5.3C64.9 8.2 63.8 12.1 62.0 14.7C60.2 17.2 55.9 19.7 54.7 20.7M54.7 20.7C55.1 21.9 57.3 25.0 57.3 28.0C57.3 31.0 56.6 35.7 54.7 38.7C52.8 41.7 49.3 44.8 46.0 46.0C42.7 47.2 36.6 46.0 34.7 46.0M34.7 46.0C33.9 47.2 32.6 51.2 30.0 53.3C27.4 55.4 23.3 57.6 19.3 58.7C15.3 59.8 9.6 60.0 6.0 60.0C2.4 60.0 0.1 59.6 -2.0 58.7C-4.1 57.8 -5.9 55.3 -6.7 54.7M-6.7 54.7C-8.1 55.0 -11.9 56.9 -15.3 56.7C-18.8 56.4 -24.0 55.4 -27.3 53.3C-30.7 51.2 -33.8 47.3 -35.3 44.0C-36.9 40.7 -36.4 35.1 -36.7 33.3M-36.7 33.3C-37.8 33.6 -41.1 35.6 -43.3 34.7C-45.6 33.8 -48.3 31.3 -50.0 28.0C-51.7 24.7 -53.2 18.7 -53.3 14.7C-53.4 10.7 -51.1 5.8 -50.7 4.0M-50.7 4.0C-51.3 2.9 -54.0 0.2 -54.7 -2.7C-55.3 -5.6 -55.4 -10.4 -54.7 -13.3C-53.9 -16.2 -52.1 -18.4 -50.0 -20.0C-47.9 -21.6 -43.3 -22.2 -42.0 -22.7M54.7 20.7C55.8 20.0 59.4 18.5 61.3 16.7C63.3 14.8 64.6 11.4 66.3 9.6C67.9 7.8 69.9 6.5 71.1 5.6C72.3 4.7 73.1 4.3 73.5 4.0"/></g>
<g transform="translate(-48.5 21.3)"><ellipse rx="22" ry="12.7" transform="rotate(3)"/><path d="M-10.7 -12.0C-10.9 -14.2 -11.6 -21.1 -12.0 -25.3C-12.4 -29.6 -13.1 -35.3 -13.3 -37.3M3.3 -12.3C3.4 -14.1 3.2 -19.8 3.6 -23.3C4.0 -26.8 4.9 -30.8 6.0 -33.3C7.1 -35.9 9.3 -37.8 10.0 -38.7M15.3 -8.7C17.1 -10.2 22.7 -15.5 26.0 -18.0C29.3 -20.5 32.2 -22.1 35.3 -23.7C38.4 -25.4 43.1 -27.1 44.7 -27.7M22.0 -3.3C25.1 -3.8 34.3 -5.0 40.7 -6.0C47.0 -7.0 56.8 -8.6 60.0 -9.1M22.7 2.7C25.4 3.8 34.0 6.6 39.3 9.6C44.7 12.6 52.1 18.8 54.7 20.7M17.7 7.6C19.3 10.1 24.8 17.5 27.3 22.7C29.8 27.8 31.4 34.8 32.7 38.7C33.9 42.6 34.3 44.8 34.7 46.0M-4.7 12.0C-5.3 14.7 -7.7 22.7 -8.4 28.0C-9.1 33.3 -9.0 39.6 -8.7 44.0C-8.4 48.4 -7.0 52.9 -6.7 54.7M-16.1 7.9C-18.2 9.9 -25.6 16.6 -28.7 20.0C-31.7 23.4 -33.1 25.8 -34.4 28.0C-35.7 30.2 -36.3 32.4 -36.7 33.3M-21.3 0.0C-23.4 -0.2 -30.1 -1.2 -34.0 -0.9C-37.9 -0.7 -41.9 0.5 -44.7 1.3C-47.4 2.2 -49.7 3.6 -50.7 4.0M-42.0 -22.7C-40.0 -22.0 -34.1 -21.0 -30.0 -18.7C-25.9 -16.3 -19.4 -10.3 -17.3 -8.7M-13.3 -37.3C-14.8 -37.8 -18.6 -40.6 -22.0 -40.3C-25.4 -39.9 -30.7 -38.2 -34.0 -35.3C-37.3 -32.4 -40.7 -25.0 -42.0 -22.9M-13.3 -37.3C-12.8 -38.1 -11.9 -40.9 -10.0 -42.0C-8.1 -43.1 -4.7 -43.9 -2.0 -44.0C0.7 -44.1 4.0 -43.6 6.0 -42.7C8.0 -41.8 9.3 -39.3 10.0 -38.7M10.0 -38.7C11.6 -39.4 16.0 -42.6 19.3 -43.3C22.7 -44.1 26.7 -44.1 30.0 -43.3C33.3 -42.6 36.9 -40.6 39.3 -38.7C41.7 -36.8 43.5 -33.8 44.4 -32.0C45.3 -30.2 44.6 -28.4 44.7 -27.7M44.7 -27.7C46.0 -27.6 50.3 -28.0 52.7 -26.7C55.0 -25.4 57.4 -22.9 58.7 -20.0C59.9 -17.1 59.8 -10.9 60.0 -9.1M60.0 -9.1C60.8 -8.0 63.8 -5.1 64.7 -2.7C65.6 -0.3 65.8 2.4 65.3 5.3C64.9 8.2 63.8 12.1 62.0 14.7C60.2 17.2 55.9 19.7 54.7 20.7M54.7 20.7C55.1 21.9 57.3 25.0 57.3 28.0C57.3 31.0 56.6 35.7 54.7 38.7C52.8 41.7 49.3 44.8 46.0 46.0C42.7 47.2 36.6 46.0 34.7 46.0M34.7 46.0C33.9 47.2 32.6 51.2 30.0 53.3C27.4 55.4 23.3 57.6 19.3 58.7C15.3 59.8 9.6 60.0 6.0 60.0C2.4 60.0 0.1 59.6 -2.0 58.7C-4.1 57.8 -5.9 55.3 -6.7 54.7M-6.7 54.7C-8.1 55.0 -11.9 56.9 -15.3 56.7C-18.8 56.4 -24.0 55.4 -27.3 53.3C-30.7 51.2 -33.8 47.3 -35.3 44.0C-36.9 40.7 -36.4 35.1 -36.7 33.3M-36.7 33.3C-37.8 33.6 -41.1 35.6 -43.3 34.7C-45.6 33.8 -48.3 31.3 -50.0 28.0C-51.7 24.7 -53.2 18.7 -53.3 14.7C-53.4 10.7 -51.1 5.8 -50.7 4.0M-50.7 4.0C-51.3 2.9 -54.0 0.2 -54.7 -2.7C-55.3 -5.6 -55.4 -10.4 -54.7 -13.3C-53.9 -16.2 -52.1 -18.4 -50.0 -20.0C-47.9 -21.6 -43.3 -22.2 -42.0 -22.7M54.7 20.7C55.8 20.0 59.4 18.5 61.3 16.7C63.3 14.8 64.6 11.4 66.3 9.6C67.9 7.8 69.9 6.5 71.1 5.6C72.3 4.7 73.1 4.3 73.5 4.0"/></g>
<g transform="translate(75.6 21.3)"><ellipse rx="22" ry="12.7" transform="rotate(3)"/><path d="M-10.7 -12.0C-10.9 -14.2 -11.6 -21.1 -12.0 -25.3C-12.4 -29.6 -13.1 -35.3 -13.3 -37.3M3.3 -12.3C3.4 -14.1 3.2 -19.8 3.6 -23.3C4.0 -26.8 4.9 -30.8 6.0 -33.3C7.1 -35.9 9.3 -37.8 10.0 -38.7M15.3 -8.7C17.1 -10.2 22.7 -15.5 26.0 -18.0C29.3 -20.5 32.2 -22.1 35.3 -23.7C38.4 -25.4 43.1 -27.1 44.7 -27.7M22.0 -3.3C25.1 -3.8 34.3 -5.0 40.7 -6.0C47.0 -7.0 56.8 -8.6 60.0 -9.1M22.7 2.7C25.4 3.8 34.0 6.6 39.3 9.6C44.7 12.6 52.1 18.8 54.7 20.7M17.7 7.6C19.3 10.1 24.8 17.5 27.3 22.7C29.8 27.8 31.4 34.8 32.7 38.7C33.9 42.6 34.3 44.8 34.7 46.0M-4.7 12.0C-5.3 14.7 -7.7 22.7 -8.4 28.0C-9.1 33.3 -9.0 39.6 -8.7 44.0C-8.4 48.4 -7.0 52.9 -6.7 54.7M-16.1 7.9C-18.2 9.9 -25.6 16.6 -28.7 20.0C-31.7 23.4 -33.1 25.8 -34.4 28.0C-35.7 30.2 -36.3 32.4 -36.7 33.3M-21.3 0.0C-23.4 -0.2 -30.1 -1.2 -34.0 -0.9C-37.9 -0.7 -41.9 0.5 -44.7 1.3C-47.4 2.2 -49.7 3.6 -50.7 4.0M-42.0 -22.7C-40.0 -22.0 -34.1 -21.0 -30.0 -18.7C-25.9 -16.3 -19.4 -10.3 -17.3 -8.7M-13.3 -37.3C-14.8 -37.8 -18.6 -40.6 -22.0 -40.3C-25.4 -39.9 -30.7 -38.2 -34.0 -35.3C-37.3 -32.4 -40.7 -25.0 -42.0 -22.9M-13.3 -37.3C-12.8 -38.1 -11.9 -40.9 -10.0 -42.0C-8.1 -43.1 -4.7 -43.9 -2.0 -44.0C0.7 -44.1 4.0 -43.6 6.0 -42.7C8.0 -41.8 9.3 -39.3 10.0 -38.7M10.0 -38.7C11.6 -39.4 16.0 -42.6 19.3 -43.3C22.7 -44.1 26.7 -44.1 30.0 -43.3C33.3 -42.6 36.9 -40.6 39.3 -38.7C41.7 -36.8 43.5 -33.8 44.4 -32.0C45.3 -30.2 44.6 -28.4 44.7 -27.7M44.7 -27.7C46.0 -27.6 50.3 -28.0 52.7 -26.7C55.0 -25.4 57.4 -22.9 58.7 -20.0C59.9 -17.1 59.8 -10.9 60.0 -9.1M60.0 -9.1C60.8 -8.0 63.8 -5.1 64.7 -2.7C65.6 -0.3 65.8 2.4 65.3 5.3C64.9 8.2 63.8 12.1 62.0 14.7C60.2 17.2 55.9 19.7 54.7 20.7M54.7 20.7C55.1 21.9 57.3 25.0 57.3 28.0C57.3 31.0 56.6 35.7 54.7 38.7C52.8 41.7 49.3 44.8 46.0 46.0C42.7 47.2 36.6 46.0 34.7 46.0M34.7 46.0C33.9 47.2 32.6 51.2 30.0 53.3C27.4 55.4 23.3 57.6 19.3 58.7C15.3 59.8 9.6 60.0 6.0 60.0C2.4 60.0 0.1 59.6 -2.0 58.7C-4.1 57.8 -5.9 55.3 -6.7 54.7M-6.7 54.7C-8.1 55.0 -11.9 56.9 -15.3 56.7C-18.8 56.4 -24.0 55.4 -27.3 53.3C-30.7 51.2 -33.8 47.3 -35.3 44.0C-36.9 40.7 -36.4 35.1 -36.7 33.3M-36.7 33.3C-37.8 33.6 -41.1 35.6 -43.3 34.7C-45.6 33.8 -48.3 31.3 -50.0 28.0C-51.7 24.7 -53.2 18.7 -53.3 14.7C-53.4 10.7 -51.1 5.8 -50.7 4.0M-50.7 4.0C-51.3 2.9 -54.0 0.2 -54.7 -2.7C-55.3 -5.6 -55.4 -10.4 -54.7 -13.3C-53.9 -16.2 -52.1 -18.4 -50.0 -20.0C-47.9 -21.6 -43.3 -22.2 -42.0 -22.7M54.7 20.7C55.8 20.0 59.4 18.5 61.3 16.7C63.3 14.8 64.6 11.4 66.3 9.6C67.9 7.8 69.9 6.5 71.1 5.6C72.3 4.7 73.1 4.3 73.5 4.0"/></g>
<g transform="translate(199.7 21.3)"><ellipse rx="22" ry="12.7" transform="rotate(3)"/><path d="M-10.7 -12.0C-10.9 -14.2 -11.6 -21.1 -12.0 -25.3C-12.4 -29.6 -13.1 -35.3 -13.3 -37.3M3.3 -12.3C3.4 -14.1 3.2 -19.8 3.6 -23.3C4.0 -26.8 4.9 -30.8 6.0 -33.3C7.1 -35.9 9.3 -37.8 10.0 -38.7M15.3 -8.7C17.1 -10.2 22.7 -15.5 26.0 -18.0C29.3 -20.5 32.2 -22.1 35.3 -23.7C38.4 -25.4 43.1 -27.1 44.7 -27.7M22.0 -3.3C25.1 -3.8 34.3 -5.0 40.7 -6.0C47.0 -7.0 56.8 -8.6 60.0 -9.1M22.7 2.7C25.4 3.8 34.0 6.6 39.3 9.6C44.7 12.6 52.1 18.8 54.7 20.7M17.7 7.6C19.3 10.1 24.8 17.5 27.3 22.7C29.8 27.8 31.4 34.8 32.7 38.7C33.9 42.6 34.3 44.8 34.7 46.0M-4.7 12.0C-5.3 14.7 -7.7 22.7 -8.4 28.0C-9.1 33.3 -9.0 39.6 -8.7 44.0C-8.4 48.4 -7.0 52.9 -6.7 54.7M-16.1 7.9C-18.2 9.9 -25.6 16.6 -28.7 20.0C-31.7 23.4 -33.1 25.8 -34.4 28.0C-35.7 30.2 -36.3 32.4 -36.7 33.3M-21.3 0.0C-23.4 -0.2 -30.1 -1.2 -34.0 -0.9C-37.9 -0.7 -41.9 0.5 -44.7 1.3C-47.4 2.2 -49.7 3.6 -50.7 4.0M-42.0 -22.7C-40.0 -22.0 -34.1 -21.0 -30.0 -18.7C-25.9 -16.3 -19.4 -10.3 -17.3 -8.7M-13.3 -37.3C-14.8 -37.8 -18.6 -40.6 -22.0 -40.3C-25.4 -39.9 -30.7 -38.2 -34.0 -35.3C-37.3 -32.4 -40.7 -25.0 -42.0 -22.9M-13.3 -37.3C-12.8 -38.1 -11.9 -40.9 -10.0 -42.0C-8.1 -43.1 -4.7 -43.9 -2.0 -44.0C0.7 -44.1 4.0 -43.6 6.0 -42.7C8.0 -41.8 9.3 -39.3 10.0 -38.7M10.0 -38.7C11.6 -39.4 16.0 -42.6 19.3 -43.3C22.7 -44.1 26.7 -44.1 30.0 -43.3C33.3 -42.6 36.9 -40.6 39.3 -38.7C41.7 -36.8 43.5 -33.8 44.4 -32.0C45.3 -30.2 44.6 -28.4 44.7 -27.7M44.7 -27.7C46.0 -27.6 50.3 -28.0 52.7 -26.7C55.0 -25.4 57.4 -22.9 58.7 -20.0C59.9 -17.1 59.8 -10.9 60.0 -9.1M60.0 -9.1C60.8 -8.0 63.8 -5.1 64.7 -2.7C65.6 -0.3 65.8 2.4 65.3 5.3C64.9 8.2 63.8 12.1 62.0 14.7C60.2 17.2 55.9 19.7 54.7 20.7M54.7 20.7C55.1 21.9 57.3 25.0 57.3 28.0C57.3 31.0 56.6 35.7 54.7 38.7C52.8 41.7 49.3 44.8 46.0 46.0C42.7 47.2 36.6 46.0 34.7 46.0M34.7 46.0C33.9 47.2 32.6 51.2 30.0 53.3C27.4 55.4 23.3 57.6 19.3 58.7C15.3 59.8 9.6 60.0 6.0 60.0C2.4 60.0 0.1 59.6 -2.0 58.7C-4.1 57.8 -5.9 55.3 -6.7 54.7M-6.7 54.7C-8.1 55.0 -11.9 56.9 -15.3 56.7C-18.8 56.4 -24.0 55.4 -27.3 53.3C-30.7 51.2 -33.8 47.3 -35.3 44.0C-36.9 40.7 -36.4 35.1 -36.7 33.3M-36.7 33.3C-37.8 33.6 -41.1 35.6 -43.3 34.7C-45.6 33.8 -48.3 31.3 -50.0 28.0C-51.7 24.7 -53.2 18.7 -53.3 14.7C-53.4 10.7 -51.1 5.8 -50.7 4.0M-50.7 4.0C-51.3 2.9 -54.0 0.2 -54.7 -2.7C-55.3 -5.6 -55.4 -10.4 -54.7 -13.3C-53.9 -16.2 -52.1 -18.4 -50.0 -20.0C-47.9 -21.6 -43.3 -22.2 -42.0 -22.7M54.7 20.7C55.8 20.0 59.4 18.5 61.3 16.7C63.3 14.8 64.6 11.4 66.3 9.6C67.9 7.8 69.9 6.5 71.1 5.6C72.3 4.7 73.1 4.3 73.5 4.0"/></g>
<g transform="translate(323.8 21.3)"><ellipse rx="22" ry="12.7" transform="rotate(3)"/><path d="M-10.7 -12.0C-10.9 -14.2 -11.6 -21.1 -12.0 -25.3C-12.4 -29.6 -13.1 -35.3 -13.3 -37.3M3.3 -12.3C3.4 -14.1 3.2 -19.8 3.6 -23.3C4.0 -26.8 4.9 -30.8 6.0 -33.3C7.1 -35.9 9.3 -37.8 10.0 -38.7M15.3 -8.7C17.1 -10.2 22.7 -15.5 26.0 -18.0C29.3 -20.5 32.2 -22.1 35.3 -23.7C38.4 -25.4 43.1 -27.1 44.7 -27.7M22.0 -3.3C25.1 -3.8 34.3 -5.0 40.7 -6.0C47.0 -7.0 56.8 -8.6 60.0 -9.1M22.7 2.7C25.4 3.8 34.0 6.6 39.3 9.6C44.7 12.6 52.1 18.8 54.7 20.7M17.7 7.6C19.3 10.1 24.8 17.5 27.3 22.7C29.8 27.8 31.4 34.8 32.7 38.7C33.9 42.6 34.3 44.8 34.7 46.0M-4.7 12.0C-5.3 14.7 -7.7 22.7 -8.4 28.0C-9.1 33.3 -9.0 39.6 -8.7 44.0C-8.4 48.4 -7.0 52.9 -6.7 54.7M-16.1 7.9C-18.2 9.9 -25.6 16.6 -28.7 20.0C-31.7 23.4 -33.1 25.8 -34.4 28.0C-35.7 30.2 -36.3 32.4 -36.7 33.3M-21.3 0.0C-23.4 -0.2 -30.1 -1.2 -34.0 -0.9C-37.9 -0.7 -41.9 0.5 -44.7 1.3C-47.4 2.2 -49.7 3.6 -50.7 4.0M-42.0 -22.7C-40.0 -22.0 -34.1 -21.0 -30.0 -18.7C-25.9 -16.3 -19.4 -10.3 -17.3 -8.7M-13.3 -37.3C-14.8 -37.8 -18.6 -40.6 -22.0 -40.3C-25.4 -39.9 -30.7 -38.2 -34.0 -35.3C-37.3 -32.4 -40.7 -25.0 -42.0 -22.9M-13.3 -37.3C-12.8 -38.1 -11.9 -40.9 -10.0 -42.0C-8.1 -43.1 -4.7 -43.9 -2.0 -44.0C0.7 -44.1 4.0 -43.6 6.0 -42.7C8.0 -41.8 9.3 -39.3 10.0 -38.7M10.0 -38.7C11.6 -39.4 16.0 -42.6 19.3 -43.3C22.7 -44.1 26.7 -44.1 30.0 -43.3C33.3 -42.6 36.9 -40.6 39.3 -38.7C41.7 -36.8 43.5 -33.8 44.4 -32.0C45.3 -30.2 44.6 -28.4 44.7 -27.7M44.7 -27.7C46.0 -27.6 50.3 -28.0 52.7 -26.7C55.0 -25.4 57.4 -22.9 58.7 -20.0C59.9 -17.1 59.8 -10.9 60.0 -9.1M60.0 -9.1C60.8 -8.0 63.8 -5.1 64.7 -2.7C65.6 -0.3 65.8 2.4 65.3 5.3C64.9 8.2 63.8 12.1 62.0 14.7C60.2 17.2 55.9 19.7 54.7 20.7M54.7 20.7C55.1 21.9 57.3 25.0 57.3 28.0C57.3 31.0 56.6 35.7 54.7 38.7C52.8 41.7 49.3 44.8 46.0 46.0C42.7 47.2 36.6 46.0 34.7 46.0M34.7 46.0C33.9 47.2 32.6 51.2 30.0 53.3C27.4 55.4 23.3 57.6 19.3 58.7C15.3 59.8 9.6 60.0 6.0 60.0C2.4 60.0 0.1 59.6 -2.0 58.7C-4.1 57.8 -5.9 55.3 -6.7 54.7M-6.7 54.7C-8.1 55.0 -11.9 56.9 -15.3 56.7C-18.8 56.4 -24.0 55.4 -27.3 53.3C-30.7 51.2 -33.8 47.3 -35.3 44.0C-36.9 40.7 -36.4 35.1 -36.7 33.3M-36.7 33.3C-37.8 33.6 -41.1 35.6 -43.3 34.7C-45.6 33.8 -48.3 31.3 -50.0 28.0C-51.7 24.7 -53.2 18.7 -53.3 14.7C-53.4 10.7 -51.1 5.8 -50.7 4.0M-50.7 4.0C-51.3 2.9 -54.0 0.2 -54.7 -2.7C-55.3 -5.6 -55.4 -10.4 -54.7 -13.3C-53.9 -16.2 -52.1 -18.4 -50.0 -20.0C-47.9 -21.6 -43.3 -22.2 -42.0 -22.7M54.7 20.7C55.8 20.0 59.4 18.5 61.3 16.7C63.3 14.8 64.6 11.4 66.3 9.6C67.9 7.8 69.9 6.5 71.1 5.6C72.3 4.7 73.1 4.3 73.5 4.0"/></g>
<g transform="translate(447.9 21.3)"><ellipse rx="22" ry="12.7" transform="rotate(3)"/><path d="M-10.7 -12.0C-10.9 -14.2 -11.6 -21.1 -12.0 -25.3C-12.4 -29.6 -13.1 -35.3 -13.3 -37.3M3.3 -12.3C3.4 -14.1 3.2 -19.8 3.6 -23.3C4.0 -26.8 4.9 -30.8 6.0 -33.3C7.1 -35.9 9.3 -37.8 10.0 -38.7M15.3 -8.7C17.1 -10.2 22.7 -15.5 26.0 -18.0C29.3 -20.5 32.2 -22.1 35.3 -23.7C38.4 -25.4 43.1 -27.1 44.7 -27.7M22.0 -3.3C25.1 -3.8 34.3 -5.0 40.7 -6.0C47.0 -7.0 56.8 -8.6 60.0 -9.1M22.7 2.7C25.4 3.8 34.0 6.6 39.3 9.6C44.7 12.6 52.1 18.8 54.7 20.7M17.7 7.6C19.3 10.1 24.8 17.5 27.3 22.7C29.8 27.8 31.4 34.8 32.7 38.7C33.9 42.6 34.3 44.8 34.7 46.0M-4.7 12.0C-5.3 14.7 -7.7 22.7 -8.4 28.0C-9.1 33.3 -9.0 39.6 -8.7 44.0C-8.4 48.4 -7.0 52.9 -6.7 54.7M-16.1 7.9C-18.2 9.9 -25.6 16.6 -28.7 20.0C-31.7 23.4 -33.1 25.8 -34.4 28.0C-35.7 30.2 -36.3 32.4 -36.7 33.3M-21.3 0.0C-23.4 -0.2 -30.1 -1.2 -34.0 -0.9C-37.9 -0.7 -41.9 0.5 -44.7 1.3C-47.4 2.2 -49.7 3.6 -50.7 4.0M-42.0 -22.7C-40.0 -22.0 -34.1 -21.0 -30.0 -18.7C-25.9 -16.3 -19.4 -10.3 -17.3 -8.7M-13.3 -37.3C-14.8 -37.8 -18.6 -40.6 -22.0 -40.3C-25.4 -39.9 -30.7 -38.2 -34.0 -35.3C-37.3 -32.4 -40.7 -25.0 -42.0 -22.9M-13.3 -37.3C-12.8 -38.1 -11.9 -40.9 -10.0 -42.0C-8.1 -43.1 -4.7 -43.9 -2.0 -44.0C0.7 -44.1 4.0 -43.6 6.0 -42.7C8.0 -41.8 9.3 -39.3 10.0 -38.7M10.0 -38.7C11.6 -39.4 16.0 -42.6 19.3 -43.3C22.7 -44.1 26.7 -44.1 30.0 -43.3C33.3 -42.6 36.9 -40.6 39.3 -38.7C41.7 -36.8 43.5 -33.8 44.4 -32.0C45.3 -30.2 44.6 -28.4 44.7 -27.7M44.7 -27.7C46.0 -27.6 50.3 -28.0 52.7 -26.7C55.0 -25.4 57.4 -22.9 58.7 -20.0C59.9 -17.1 59.8 -10.9 60.0 -9.1M60.0 -9.1C60.8 -8.0 63.8 -5.1 64.7 -2.7C65.6 -0.3 65.8 2.4 65.3 5.3C64.9 8.2 63.8 12.1 62.0 14.7C60.2 17.2 55.9 19.7 54.7 20.7M54.7 20.7C55.1 21.9 57.3 25.0 57.3 28.0C57.3 31.0 56.6 35.7 54.7 38.7C52.8 41.7 49.3 44.8 46.0 46.0C42.7 47.2 36.6 46.0 34.7 46.0M34.7 46.0C33.9 47.2 32.6 51.2 30.0 53.3C27.4 55.4 23.3 57.6 19.3 58.7C15.3 59.8 9.6 60.0 6.0 60.0C2.4 60.0 0.1 59.6 -2.0 58.7C-4.1 57.8 -5.9 55.3 -6.7 54.7M-6.7 54.7C-8.1 55.0 -11.9 56.9 -15.3 56.7C-18.8 56.4 -24.0 55.4 -27.3 53.3C-30.7 51.2 -33.8 47.3 -35.3 44.0C-36.9 40.7 -36.4 35.1 -36.7 33.3M-36.7 33.3C-37.8 33.6 -41.1 35.6 -43.3 34.7C-45.6 33.8 -48.3 31.3 -50.0 28.0C-51.7 24.7 -53.2 18.7 -53.3 14.7C-53.4 10.7 -51.1 5.8 -50.7 4.0M-50.7 4.0C-51.3 2.9 -54.0 0.2 -54.7 -2.7C-55.3 -5.6 -55.4 -10.4 -54.7 -13.3C-53.9 -16.2 -52.1 -18.4 -50.0 -20.0C-47.9 -21.6 -43.3 -22.2 -42.0 -22.7M54.7 20.7C55.8 20.0 59.4 18.5 61.3 16.7C63.3 14.8 64.6 11.4 66.3 9.6C67.9 7.8 69.9 6.5 71.1 5.6C72.3 4.7 73.1 4.3 73.5 4.0"/></g>
<g transform="translate(-110.6 125.4)"><ellipse rx="22" ry="12.7" transform="rotate(3)"/><path d="M-10.7 -12.0C-10.9 -14.2 -11.6 -21.1 -12.0 -25.3C-12.4 -29.6 -13.1 -35.3 -13.3 -37.3M3.3 -12.3C3.4 -14.1 3.2 -19.8 3.6 -23.3C4.0 -26.8 4.9 -30.8 6.0 -33.3C7.1 -35.9 9.3 -37.8 10.0 -38.7M15.3 -8.7C17.1 -10.2 22.7 -15.5 26.0 -18.0C29.3 -20.5 32.2 -22.1 35.3 -23.7C38.4 -25.4 43.1 -27.1 44.7 -27.7M22.0 -3.3C25.1 -3.8 34.3 -5.0 40.7 -6.0C47.0 -7.0 56.8 -8.6 60.0 -9.1M22.7 2.7C25.4 3.8 34.0 6.6 39.3 9.6C44.7 12.6 52.1 18.8 54.7 20.7M17.7 7.6C19.3 10.1 24.8 17.5 27.3 22.7C29.8 27.8 31.4 34.8 32.7 38.7C33.9 42.6 34.3 44.8 34.7 46.0M-4.7 12.0C-5.3 14.7 -7.7 22.7 -8.4 28.0C-9.1 33.3 -9.0 39.6 -8.7 44.0C-8.4 48.4 -7.0 52.9 -6.7 54.7M-16.1 7.9C-18.2 9.9 -25.6 16.6 -28.7 20.0C-31.7 23.4 -33.1 25.8 -34.4 28.0C-35.7 30.2 -36.3 32.4 -36.7 33.3M-21.3 0.0C-23.4 -0.2 -30.1 -1.2 -34.0 -0.9C-37.9 -0.7 -41.9 0.5 -44.7 1.3C-47.4 2.2 -49.7 3.6 -50.7 4.0M-42.0 -22.7C-40.0 -22.0 -34.1 -21.0 -30.0 -18.7C-25.9 -16.3 -19.4 -10.3 -17.3 -8.7M-13.3 -37.3C-14.8 -37.8 -18.6 -40.6 -22.0 -40.3C-25.4 -39.9 -30.7 -38.2 -34.0 -35.3C-37.3 -32.4 -40.7 -25.0 -42.0 -22.9M-13.3 -37.3C-12.8 -38.1 -11.9 -40.9 -10.0 -42.0C-8.1 -43.1 -4.7 -43.9 -2.0 -44.0C0.7 -44.1 4.0 -43.6 6.0 -42.7C8.0 -41.8 9.3 -39.3 10.0 -38.7M10.0 -38.7C11.6 -39.4 16.0 -42.6 19.3 -43.3C22.7 -44.1 26.7 -44.1 30.0 -43.3C33.3 -42.6 36.9 -40.6 39.3 -38.7C41.7 -36.8 43.5 -33.8 44.4 -32.0C45.3 -30.2 44.6 -28.4 44.7 -27.7M44.7 -27.7C46.0 -27.6 50.3 -28.0 52.7 -26.7C55.0 -25.4 57.4 -22.9 58.7 -20.0C59.9 -17.1 59.8 -10.9 60.0 -9.1M60.0 -9.1C60.8 -8.0 63.8 -5.1 64.7 -2.7C65.6 -0.3 65.8 2.4 65.3 5.3C64.9 8.2 63.8 12.1 62.0 14.7C60.2 17.2 55.9 19.7 54.7 20.7M54.7 20.7C55.1 21.9 57.3 25.0 57.3 28.0C57.3 31.0 56.6 35.7 54.7 38.7C52.8 41.7 49.3 44.8 46.0 46.0C42.7 47.2 36.6 46.0 34.7 46.0M34.7 46.0C33.9 47.2 32.6 51.2 30.0 53.3C27.4 55.4 23.3 57.6 19.3 58.7C15.3 59.8 9.6 60.0 6.0 60.0C2.4 60.0 0.1 59.6 -2.0 58.7C-4.1 57.8 -5.9 55.3 -6.7 54.7M-6.7 54.7C-8.1 55.0 -11.9 56.9 -15.3 56.7C-18.8 56.4 -24.0 55.4 -27.3 53.3C-30.7 51.2 -33.8 47.3 -35.3 44.0C-36.9 40.7 -36.4 35.1 -36.7 33.3M-36.7 33.3C-37.8 33.6 -41.1 35.6 -43.3 34.7C-45.6 33.8 -48.3 31.3 -50.0 28.0C-51.7 24.7 -53.2 18.7 -53.3 14.7C-53.4 10.7 -51.1 5.8 -50.7 4.0M-50.7 4.0C-51.3 2.9 -54.0 0.2 -54.7 -2.7C-55.3 -5.6 -55.4 -10.4 -54.7 -13.3C-53.9 -16.2 -52.1 -18.4 -50.0 -20.0C-47.9 -21.6 -43.3 -22.2 -42.0 -22.7M54.7 20.7C55.8 20.0 59.4 18.5 61.3 16.7C63.3 14.8 64.6 11.4 66.3 9.6C67.9 7.8 69.9 6.5 71.1 5.6C72.3 4.7 73.1 4.3 73.5 4.0"/></g>
<g transform="translate(13.5 125.4)"><ellipse rx="22" ry="12.7" transform="rotate(3)"/><path d="M-10.7 -12.0C-10.9 -14.2 -11.6 -21.1 -12.0 -25.3C-12.4 -29.6 -13.1 -35.3 -13.3 -37.3M3.3 -12.3C3.4 -14.1 3.2 -19.8 3.6 -23.3C4.0 -26.8 4.9 -30.8 6.0 -33.3C7.1 -35.9 9.3 -37.8 10.0 -38.7M15.3 -8.7C17.1 -10.2 22.7 -15.5 26.0 -18.0C29.3 -20.5 32.2 -22.1 35.3 -23.7C38.4 -25.4 43.1 -27.1 44.7 -27.7M22.0 -3.3C25.1 -3.8 34.3 -5.0 40.7 -6.0C47.0 -7.0 56.8 -8.6 60.0 -9.1M22.7 2.7C25.4 3.8 34.0 6.6 39.3 9.6C44.7 12.6 52.1 18.8 54.7 20.7M17.7 7.6C19.3 10.1 24.8 17.5 27.3 22.7C29.8 27.8 31.4 34.8 32.7 38.7C33.9 42.6 34.3 44.8 34.7 46.0M-4.7 12.0C-5.3 14.7 -7.7 22.7 -8.4 28.0C-9.1 33.3 -9.0 39.6 -8.7 44.0C-8.4 48.4 -7.0 52.9 -6.7 54.7M-16.1 7.9C-18.2 9.9 -25.6 16.6 -28.7 20.0C-31.7 23.4 -33.1 25.8 -34.4 28.0C-35.7 30.2 -36.3 32.4 -36.7 33.3M-21.3 0.0C-23.4 -0.2 -30.1 -1.2 -34.0 -0.9C-37.9 -0.7 -41.9 0.5 -44.7 1.3C-47.4 2.2 -49.7 3.6 -50.7 4.0M-42.0 -22.7C-40.0 -22.0 -34.1 -21.0 -30.0 -18.7C-25.9 -16.3 -19.4 -10.3 -17.3 -8.7M-13.3 -37.3C-14.8 -37.8 -18.6 -40.6 -22.0 -40.3C-25.4 -39.9 -30.7 -38.2 -34.0 -35.3C-37.3 -32.4 -40.7 -25.0 -42.0 -22.9M-13.3 -37.3C-12.8 -38.1 -11.9 -40.9 -10.0 -42.0C-8.1 -43.1 -4.7 -43.9 -2.0 -44.0C0.7 -44.1 4.0 -43.6 6.0 -42.7C8.0 -41.8 9.3 -39.3 10.0 -38.7M10.0 -38.7C11.6 -39.4 16.0 -42.6 19.3 -43.3C22.7 -44.1 26.7 -44.1 30.0 -43.3C33.3 -42.6 36.9 -40.6 39.3 -38.7C41.7 -36.8 43.5 -33.8 44.4 -32.0C45.3 -30.2 44.6 -28.4 44.7 -27.7M44.7 -27.7C46.0 -27.6 50.3 -28.0 52.7 -26.7C55.0 -25.4 57.4 -22.9 58.7 -20.0C59.9 -17.1 59.8 -10.9 60.0 -9.1M60.0 -9.1C60.8 -8.0 63.8 -5.1 64.7 -2.7C65.6 -0.3 65.8 2.4 65.3 5.3C64.9 8.2 63.8 12.1 62.0 14.7C60.2 17.2 55.9 19.7 54.7 20.7M54.7 20.7C55.1 21.9 57.3 25.0 57.3 28.0C57.3 31.0 56.6 35.7 54.7 38.7C52.8 41.7 49.3 44.8 46.0 46.0C42.7 47.2 36.6 46.0 34.7 46.0M34.7 46.0C33.9 47.2 32.6 51.2 30.0 53.3C27.4 55.4 23.3 57.6 19.3 58.7C15.3 59.8 9.6 60.0 6.0 60.0C2.4 60.0 0.1 59.6 -2.0 58.7C-4.1 57.8 -5.9 55.3 -6.7 54.7M-6.7 54.7C-8.1 55.0 -11.9 56.9 -15.3 56.7C-18.8 56.4 -24.0 55.4 -27.3 53.3C-30.7 51.2 -33.8 47.3 -35.3 44.0C-36.9 40.7 -36.4 35.1 -36.7 33.3M-36.7 33.3C-37.8 33.6 -41.1 35.6 -43.3 34.7C-45.6 33.8 -48.3 31.3 -50.0 28.0C-51.7 24.7 -53.2 18.7 -53.3 14.7C-53.4 10.7 -51.1 5.8 -50.7 4.0M-50.7 4.0C-51.3 2.9 -54.0 0.2 -54.7 -2.7C-55.3 -5.6 -55.4 -10.4 -54.7 -13.3C-53.9 -16.2 -52.1 -18.4 -50.0 -20.0C-47.9 -21.6 -43.3 -22.2 -42.0 -22.7M54.7 20.7C55.8 20.0 59.4 18.5 61.3 16.7C63.3 14.8 64.6 11.4 66.3 9.6C67.9 7.8 69.9 6.5 71.1 5.6C72.3 4.7 73.1 4.3 73.5 4.0"/></g>
<g transform="translate(137.6 125.4)"><ellipse rx="22" ry="12.7" transform="rotate(3)"/><path d="M-10.7 -12.0C-10.9 -14.2 -11.6 -21.1 -12.0 -25.3C-12.4 -29.6 -13.1 -35.3 -13.3 -37.3M3.3 -12.3C3.4 -14.1 3.2 -19.8 3.6 -23.3C4.0 -26.8 4.9 -30.8 6.0 -33.3C7.1 -35.9 9.3 -37.8 10.0 -38.7M15.3 -8.7C17.1 -10.2 22.7 -15.5 26.0 -18.0C29.3 -20.5 32.2 -22.1 35.3 -23.7C38.4 -25.4 43.1 -27.1 44.7 -27.7M22.0 -3.3C25.1 -3.8 34.3 -5.0 40.7 -6.0C47.0 -7.0 56.8 -8.6 60.0 -9.1M22.7 2.7C25.4 3.8 34.0 6.6 39.3 9.6C44.7 12.6 52.1 18.8 54.7 20.7M17.7 7.6C19.3 10.1 24.8 17.5 27.3 22.7C29.8 27.8 31.4 34.8 32.7 38.7C33.9 42.6 34.3 44.8 34.7 46.0M-4.7 12.0C-5.3 14.7 -7.7 22.7 -8.4 28.0C-9.1 33.3 -9.0 39.6 -8.7 44.0C-8.4 48.4 -7.0 52.9 -6.7 54.7M-16.1 7.9C-18.2 9.9 -25.6 16.6 -28.7 20.0C-31.7 23.4 -33.1 25.8 -34.4 28.0C-35.7 30.2 -36.3 32.4 -36.7 33.3M-21.3 0.0C-23.4 -0.2 -30.1 -1.2 -34.0 -0.9C-37.9 -0.7 -41.9 0.5 -44.7 1.3C-47.4 2.2 -49.7 3.6 -50.7 4.0M-42.0 -22.7C-40.0 -22.0 -34.1 -21.0 -30.0 -18.7C-25.9 -16.3 -19.4 -10.3 -17.3 -8.7M-13.3 -37.3C-14.8 -37.8 -18.6 -40.6 -22.0 -40.3C-25.4 -39.9 -30.7 -38.2 -34.0 -35.3C-37.3 -32.4 -40.7 -25.0 -42.0 -22.9M-13.3 -37.3C-12.8 -38.1 -11.9 -40.9 -10.0 -42.0C-8.1 -43.1 -4.7 -43.9 -2.0 -44.0C0.7 -44.1 4.0 -43.6 6.0 -42.7C8.0 -41.8 9.3 -39.3 10.0 -38.7M10.0 -38.7C11.6 -39.4 16.0 -42.6 19.3 -43.3C22.7 -44.1 26.7 -44.1 30.0 -43.3C33.3 -42.6 36.9 -40.6 39.3 -38.7C41.7 -36.8 43.5 -33.8 44.4 -32.0C45.3 -30.2 44.6 -28.4 44.7 -27.7M44.7 -27.7C46.0 -27.6 50.3 -28.0 52.7 -26.7C55.0 -25.4 57.4 -22.9 58.7 -20.0C59.9 -17.1 59.8 -10.9 60.0 -9.1M60.0 -9.1C60.8 -8.0 63.8 -5.1 64.7 -2.7C65.6 -0.3 65.8 2.4 65.3 5.3C64.9 8.2 63.8 12.1 62.0 14.7C60.2 17.2 55.9 19.7 54.7 20.7M54.7 20.7C55.1 21.9 57.3 25.0 57.3 28.0C57.3 31.0 56.6 35.7 54.7 38.7C52.8 41.7 49.3 44.8 46.0 46.0C42.7 47.2 36.6 46.0 34.7 46.0M34.7 46.0C33.9 47.2 32.6 51.2 30.0 53.3C27.4 55.4 23.3 57.6 19.3 58.7C15.3 59.8 9.6 60.0 6.0 60.0C2.4 60.0 0.1 59.6 -2.0 58.7C-4.1 57.8 -5.9 55.3 -6.7 54.7M-6.7 54.7C-8.1 55.0 -11.9 56.9 -15.3 56.7C-18.8 56.4 -24.0 55.4 -27.3 53.3C-30.7 51.2 -33.8 47.3 -35.3 44.0C-36.9 40.7 -36.4 35.1 -36.7 33.3M-36.7 33.3C-37.8 33.6 -41.1 35.6 -43.3 34.7C-45.6 33.8 -48.3 31.3 -50.0 28.0C-51.7 24.7 -53.2 18.7 -53.3 14.7C-53.4 10.7 -51.1 5.8 -50.7 4.0M-50.7 4.0C-51.3 2.9 -54.0 0.2 -54.7 -2.7C-55.3 -5.6 -55.4 -10.4 -54.7 -13.3C-53.9 -16.2 -52.1 -18.4 -50.0 -20.0C-47.9 -21.6 -43.3 -22.2 -42.0 -22.7M54.7 20.7C55.8 20.0 59.4 18.5 61.3 16.7C63.3 14.8 64.6 11.4 66.3 9.6C67.9 7.8 69.9 6.5 71.1 5.6C72.3 4.7 73.1 4.3 73.5 4.0"/></g>
<g transform="translate(261.8 125.4)"><ellipse rx="22" ry="12.7" transform="rotate(3)"/><path d="M-10.7 -12.0C-10.9 -14.2 -11.6 -21.1 -12.0 -25.3C-12.4 -29.6 -13.1 -35.3 -13.3 -37.3M3.3 -12.3C3.4 -14.1 3.2 -19.8 3.6 -23.3C4.0 -26.8 4.9 -30.8 6.0 -33.3C7.1 -35.9 9.3 -37.8 10.0 -38.7M15.3 -8.7C17.1 -10.2 22.7 -15.5 26.0 -18.0C29.3 -20.5 32.2 -22.1 35.3 -23.7C38.4 -25.4 43.1 -27.1 44.7 -27.7M22.0 -3.3C25.1 -3.8 34.3 -5.0 40.7 -6.0C47.0 -7.0 56.8 -8.6 60.0 -9.1M22.7 2.7C25.4 3.8 34.0 6.6 39.3 9.6C44.7 12.6 52.1 18.8 54.7 20.7M17.7 7.6C19.3 10.1 24.8 17.5 27.3 22.7C29.8 27.8 31.4 34.8 32.7 38.7C33.9 42.6 34.3 44.8 34.7 46.0M-4.7 12.0C-5.3 14.7 -7.7 22.7 -8.4 28.0C-9.1 33.3 -9.0 39.6 -8.7 44.0C-8.4 48.4 -7.0 52.9 -6.7 54.7M-16.1 7.9C-18.2 9.9 -25.6 16.6 -28.7 20.0C-31.7 23.4 -33.1 25.8 -34.4 28.0C-35.7 30.2 -36.3 32.4 -36.7 33.3M-21.3 0.0C-23.4 -0.2 -30.1 -1.2 -34.0 -0.9C-37.9 -0.7 -41.9 0.5 -44.7 1.3C-47.4 2.2 -49.7 3.6 -50.7 4.0M-42.0 -22.7C-40.0 -22.0 -34.1 -21.0 -30.0 -18.7C-25.9 -16.3 -19.4 -10.3 -17.3 -8.7M-13.3 -37.3C-14.8 -37.8 -18.6 -40.6 -22.0 -40.3C-25.4 -39.9 -30.7 -38.2 -34.0 -35.3C-37.3 -32.4 -40.7 -25.0 -42.0 -22.9M-13.3 -37.3C-12.8 -38.1 -11.9 -40.9 -10.0 -42.0C-8.1 -43.1 -4.7 -43.9 -2.0 -44.0C0.7 -44.1 4.0 -43.6 6.0 -42.7C8.0 -41.8 9.3 -39.3 10.0 -38.7M10.0 -38.7C11.6 -39.4 16.0 -42.6 19.3 -43.3C22.7 -44.1 26.7 -44.1 30.0 -43.3C33.3 -42.6 36.9 -40.6 39.3 -38.7C41.7 -36.8 43.5 -33.8 44.4 -32.0C45.3 -30.2 44.6 -28.4 44.7 -27.7M44.7 -27.7C46.0 -27.6 50.3 -28.0 52.7 -26.7C55.0 -25.4 57.4 -22.9 58.7 -20.0C59.9 -17.1 59.8 -10.9 60.0 -9.1M60.0 -9.1C60.8 -8.0 63.8 -5.1 64.7 -2.7C65.6 -0.3 65.8 2.4 65.3 5.3C64.9 8.2 63.8 12.1 62.0 14.7C60.2 17.2 55.9 19.7 54.7 20.7M54.7 20.7C55.1 21.9 57.3 25.0 57.3 28.0C57.3 31.0 56.6 35.7 54.7 38.7C52.8 41.7 49.3 44.8 46.0 46.0C42.7 47.2 36.6 46.0 34.7 46.0M34.7 46.0C33.9 47.2 32.6 51.2 30.0 53.3C27.4 55.4 23.3 57.6 19.3 58.7C15.3 59.8 9.6 60.0 6.0 60.0C2.4 60.0 0.1 59.6 -2.0 58.7C-4.1 57.8 -5.9 55.3 -6.7 54.7M-6.7 54.7C-8.1 55.0 -11.9 56.9 -15.3 56.7C-18.8 56.4 -24.0 55.4 -27.3 53.3C-30.7 51.2 -33.8 47.3 -35.3 44.0C-36.9 40.7 -36.4 35.1 -36.7 33.3M-36.7 33.3C-37.8 33.6 -41.1 35.6 -43.3 34.7C-45.6 33.8 -48.3 31.3 -50.0 28.0C-51.7 24.7 -53.2 18.7 -53.3 14.7C-53.4 10.7 -51.1 5.8 -50.7 4.0M-50.7 4.0C-51.3 2.9 -54.0 0.2 -54.7 -2.7C-55.3 -5.6 -55.4 -10.4 -54.7 -13.3C-53.9 -16.2 -52.1 -18.4 -50.0 -20.0C-47.9 -21.6 -43.3 -22.2 -42.0 -22.7M54.7 20.7C55.8 20.0 59.4 18.5 61.3 16.7C63.3 14.8 64.6 11.4 66.3 9.6C67.9 7.8 69.9 6.5 71.1 5.6C72.3 4.7 73.1 4.3 73.5 4.0"/></g>
<g transform="translate(385.8 125.4)"><ellipse rx="22" ry="12.7" transform="rotate(3)"/><path d="M-10.7 -12.0C-10.9 -14.2 -11.6 -21.1 -12.0 -25.3C-12.4 -29.6 -13.1 -35.3 -13.3 -37.3M3.3 -12.3C3.4 -14.1 3.2 -19.8 3.6 -23.3C4.0 -26.8 4.9 -30.8 6.0 -33.3C7.1 -35.9 9.3 -37.8 10.0 -38.7M15.3 -8.7C17.1 -10.2 22.7 -15.5 26.0 -18.0C29.3 -20.5 32.2 -22.1 35.3 -23.7C38.4 -25.4 43.1 -27.1 44.7 -27.7M22.0 -3.3C25.1 -3.8 34.3 -5.0 40.7 -6.0C47.0 -7.0 56.8 -8.6 60.0 -9.1M22.7 2.7C25.4 3.8 34.0 6.6 39.3 9.6C44.7 12.6 52.1 18.8 54.7 20.7M17.7 7.6C19.3 10.1 24.8 17.5 27.3 22.7C29.8 27.8 31.4 34.8 32.7 38.7C33.9 42.6 34.3 44.8 34.7 46.0M-4.7 12.0C-5.3 14.7 -7.7 22.7 -8.4 28.0C-9.1 33.3 -9.0 39.6 -8.7 44.0C-8.4 48.4 -7.0 52.9 -6.7 54.7M-16.1 7.9C-18.2 9.9 -25.6 16.6 -28.7 20.0C-31.7 23.4 -33.1 25.8 -34.4 28.0C-35.7 30.2 -36.3 32.4 -36.7 33.3M-21.3 0.0C-23.4 -0.2 -30.1 -1.2 -34.0 -0.9C-37.9 -0.7 -41.9 0.5 -44.7 1.3C-47.4 2.2 -49.7 3.6 -50.7 4.0M-42.0 -22.7C-40.0 -22.0 -34.1 -21.0 -30.0 -18.7C-25.9 -16.3 -19.4 -10.3 -17.3 -8.7M-13.3 -37.3C-14.8 -37.8 -18.6 -40.6 -22.0 -40.3C-25.4 -39.9 -30.7 -38.2 -34.0 -35.3C-37.3 -32.4 -40.7 -25.0 -42.0 -22.9M-13.3 -37.3C-12.8 -38.1 -11.9 -40.9 -10.0 -42.0C-8.1 -43.1 -4.7 -43.9 -2.0 -44.0C0.7 -44.1 4.0 -43.6 6.0 -42.7C8.0 -41.8 9.3 -39.3 10.0 -38.7M10.0 -38.7C11.6 -39.4 16.0 -42.6 19.3 -43.3C22.7 -44.1 26.7 -44.1 30.0 -43.3C33.3 -42.6 36.9 -40.6 39.3 -38.7C41.7 -36.8 43.5 -33.8 44.4 -32.0C45.3 -30.2 44.6 -28.4 44.7 -27.7M44.7 -27.7C46.0 -27.6 50.3 -28.0 52.7 -26.7C55.0 -25.4 57.4 -22.9 58.7 -20.0C59.9 -17.1 59.8 -10.9 60.0 -9.1M60.0 -9.1C60.8 -8.0 63.8 -5.1 64.7 -2.7C65.6 -0.3 65.8 2.4 65.3 5.3C64.9 8.2 63.8 12.1 62.0 14.7C60.2 17.2 55.9 19.7 54.7 20.7M54.7 20.7C55.1 21.9 57.3 25.0 57.3 28.0C57.3 31.0 56.6 35.7 54.7 38.7C52.8 41.7 49.3 44.8 46.0 46.0C42.7 47.2 36.6 46.0 34.7 46.0M34.7 46.0C33.9 47.2 32.6 51.2 30.0 53.3C27.4 55.4 23.3 57.6 19.3 58.7C15.3 59.8 9.6 60.0 6.0 60.0C2.4 60.0 0.1 59.6 -2.0 58.7C-4.1 57.8 -5.9 55.3 -6.7 54.7M-6.7 54.7C-8.1 55.0 -11.9 56.9 -15.3 56.7C-18.8 56.4 -24.0 55.4 -27.3 53.3C-30.7 51.2 -33.8 47.3 -35.3 44.0C-36.9 40.7 -36.4 35.1 -36.7 33.3M-36.7 33.3C-37.8 33.6 -41.1 35.6 -43.3 34.7C-45.6 33.8 -48.3 31.3 -50.0 28.0C-51.7 24.7 -53.2 18.7 -53.3 14.7C-53.4 10.7 -51.1 5.8 -50.7 4.0M-50.7 4.0C-51.3 2.9 -54.0 0.2 -54.7 -2.7C-55.3 -5.6 -55.4 -10.4 -54.7 -13.3C-53.9 -16.2 -52.1 -18.4 -50.0 -20.0C-47.9 -21.6 -43.3 -22.2 -42.0 -22.7M54.7 20.7C55.8 20.0 59.4 18.5 61.3 16.7C63.3 14.8 64.6 11.4 66.3 9.6C67.9 7.8 69.9 6.5 71.1 5.6C72.3 4.7 73.1 4.3 73.5 4.0"/></g>
<g transform="translate(509.9 125.4)"><ellipse rx="22" ry="12.7" transform="rotate(3)"/><path d="M-10.7 -12.0C-10.9 -14.2 -11.6 -21.1 -12.0 -25.3C-12.4 -29.6 -13.1 -35.3 -13.3 -37.3M3.3 -12.3C3.4 -14.1 3.2 -19.8 3.6 -23.3C4.0 -26.8 4.9 -30.8 6.0 -33.3C7.1 -35.9 9.3 -37.8 10.0 -38.7M15.3 -8.7C17.1 -10.2 22.7 -15.5 26.0 -18.0C29.3 -20.5 32.2 -22.1 35.3 -23.7C38.4 -25.4 43.1 -27.1 44.7 -27.7M22.0 -3.3C25.1 -3.8 34.3 -5.0 40.7 -6.0C47.0 -7.0 56.8 -8.6 60.0 -9.1M22.7 2.7C25.4 3.8 34.0 6.6 39.3 9.6C44.7 12.6 52.1 18.8 54.7 20.7M17.7 7.6C19.3 10.1 24.8 17.5 27.3 22.7C29.8 27.8 31.4 34.8 32.7 38.7C33.9 42.6 34.3 44.8 34.7 46.0M-4.7 12.0C-5.3 14.7 -7.7 22.7 -8.4 28.0C-9.1 33.3 -9.0 39.6 -8.7 44.0C-8.4 48.4 -7.0 52.9 -6.7 54.7M-16.1 7.9C-18.2 9.9 -25.6 16.6 -28.7 20.0C-31.7 23.4 -33.1 25.8 -34.4 28.0C-35.7 30.2 -36.3 32.4 -36.7 33.3M-21.3 0.0C-23.4 -0.2 -30.1 -1.2 -34.0 -0.9C-37.9 -0.7 -41.9 0.5 -44.7 1.3C-47.4 2.2 -49.7 3.6 -50.7 4.0M-42.0 -22.7C-40.0 -22.0 -34.1 -21.0 -30.0 -18.7C-25.9 -16.3 -19.4 -10.3 -17.3 -8.7M-13.3 -37.3C-14.8 -37.8 -18.6 -40.6 -22.0 -40.3C-25.4 -39.9 -30.7 -38.2 -34.0 -35.3C-37.3 -32.4 -40.7 -25.0 -42.0 -22.9M-13.3 -37.3C-12.8 -38.1 -11.9 -40.9 -10.0 -42.0C-8.1 -43.1 -4.7 -43.9 -2.0 -44.0C0.7 -44.1 4.0 -43.6 6.0 -42.7C8.0 -41.8 9.3 -39.3 10.0 -38.7M10.0 -38.7C11.6 -39.4 16.0 -42.6 19.3 -43.3C22.7 -44.1 26.7 -44.1 30.0 -43.3C33.3 -42.6 36.9 -40.6 39.3 -38.7C41.7 -36.8 43.5 -33.8 44.4 -32.0C45.3 -30.2 44.6 -28.4 44.7 -27.7M44.7 -27.7C46.0 -27.6 50.3 -28.0 52.7 -26.7C55.0 -25.4 57.4 -22.9 58.7 -20.0C59.9 -17.1 59.8 -10.9 60.0 -9.1M60.0 -9.1C60.8 -8.0 63.8 -5.1 64.7 -2.7C65.6 -0.3 65.8 2.4 65.3 5.3C64.9 8.2 63.8 12.1 62.0 14.7C60.2 17.2 55.9 19.7 54.7 20.7M54.7 20.7C55.1 21.9 57.3 25.0 57.3 28.0C57.3 31.0 56.6 35.7 54.7 38.7C52.8 41.7 49.3 44.8 46.0 46.0C42.7 47.2 36.6 46.0 34.7 46.0M34.7 46.0C33.9 47.2 32.6 51.2 30.0 53.3C27.4 55.4 23.3 57.6 19.3 58.7C15.3 59.8 9.6 60.0 6.0 60.0C2.4 60.0 0.1 59.6 -2.0 58.7C-4.1 57.8 -5.9 55.3 -6.7 54.7M-6.7 54.7C-8.1 55.0 -11.9 56.9 -15.3 56.7C-18.8 56.4 -24.0 55.4 -27.3 53.3C-30.7 51.2 -33.8 47.3 -35.3 44.0C-36.9 40.7 -36.4 35.1 -36.7 33.3M-36.7 33.3C-37.8 33.6 -41.1 35.6 -43.3 34.7C-45.6 33.8 -48.3 31.3 -50.0 28.0C-51.7 24.7 -53.2 18.7 -53.3 14.7C-53.4 10.7 -51.1 5.8 -50.7 4.0M-50.7 4.0C-51.3 2.9 -54.0 0.2 -54.7 -2.7C-55.3 -5.6 -55.4 -10.4 -54.7 -13.3C-53.9 -16.2 -52.1 -18.4 -50.0 -20.0C-47.9 -21.6 -43.3 -22.2 -42.0 -22.7M54.7 20.7C55.8 20.0 59.4 18.5 61.3 16.7C63.3 14.8 64.6 11.4 66.3 9.6C67.9 7.8 69.9 6.5 71.1 5.6C72.3 4.7 73.1 4.3 73.5 4.0"/></g>
<g transform="translate(-48.5 229.5)"><ellipse rx="22" ry="12.7" transform="rotate(3)"/><path d="M-10.7 -12.0C-10.9 -14.2 -11.6 -21.1 -12.0 -25.3C-12.4 -29.6 -13.1 -35.3 -13.3 -37.3M3.3 -12.3C3.4 -14.1 3.2 -19.8 3.6 -23.3C4.0 -26.8 4.9 -30.8 6.0 -33.3C7.1 -35.9 9.3 -37.8 10.0 -38.7M15.3 -8.7C17.1 -10.2 22.7 -15.5 26.0 -18.0C29.3 -20.5 32.2 -22.1 35.3 -23.7C38.4 -25.4 43.1 -27.1 44.7 -27.7M22.0 -3.3C25.1 -3.8 34.3 -5.0 40.7 -6.0C47.0 -7.0 56.8 -8.6 60.0 -9.1M22.7 2.7C25.4 3.8 34.0 6.6 39.3 9.6C44.7 12.6 52.1 18.8 54.7 20.7M17.7 7.6C19.3 10.1 24.8 17.5 27.3 22.7C29.8 27.8 31.4 34.8 32.7 38.7C33.9 42.6 34.3 44.8 34.7 46.0M-4.7 12.0C-5.3 14.7 -7.7 22.7 -8.4 28.0C-9.1 33.3 -9.0 39.6 -8.7 44.0C-8.4 48.4 -7.0 52.9 -6.7 54.7M-16.1 7.9C-18.2 9.9 -25.6 16.6 -28.7 20.0C-31.7 23.4 -33.1 25.8 -34.4 28.0C-35.7 30.2 -36.3 32.4 -36.7 33.3M-21.3 0.0C-23.4 -0.2 -30.1 -1.2 -34.0 -0.9C-37.9 -0.7 -41.9 0.5 -44.7 1.3C-47.4 2.2 -49.7 3.6 -50.7 4.0M-42.0 -22.7C-40.0 -22.0 -34.1 -21.0 -30.0 -18.7C-25.9 -16.3 -19.4 -10.3 -17.3 -8.7M-13.3 -37.3C-14.8 -37.8 -18.6 -40.6 -22.0 -40.3C-25.4 -39.9 -30.7 -38.2 -34.0 -35.3C-37.3 -32.4 -40.7 -25.0 -42.0 -22.9M-13.3 -37.3C-12.8 -38.1 -11.9 -40.9 -10.0 -42.0C-8.1 -43.1 -4.7 -43.9 -2.0 -44.0C0.7 -44.1 4.0 -43.6 6.0 -42.7C8.0 -41.8 9.3 -39.3 10.0 -38.7M10.0 -38.7C11.6 -39.4 16.0 -42.6 19.3 -43.3C22.7 -44.1 26.7 -44.1 30.0 -43.3C33.3 -42.6 36.9 -40.6 39.3 -38.7C41.7 -36.8 43.5 -33.8 44.4 -32.0C45.3 -30.2 44.6 -28.4 44.7 -27.7M44.7 -27.7C46.0 -27.6 50.3 -28.0 52.7 -26.7C55.0 -25.4 57.4 -22.9 58.7 -20.0C59.9 -17.1 59.8 -10.9 60.0 -9.1M60.0 -9.1C60.8 -8.0 63.8 -5.1 64.7 -2.7C65.6 -0.3 65.8 2.4 65.3 5.3C64.9 8.2 63.8 12.1 62.0 14.7C60.2 17.2 55.9 19.7 54.7 20.7M54.7 20.7C55.1 21.9 57.3 25.0 57.3 28.0C57.3 31.0 56.6 35.7 54.7 38.7C52.8 41.7 49.3 44.8 46.0 46.0C42.7 47.2 36.6 46.0 34.7 46.0M34.7 46.0C33.9 47.2 32.6 51.2 30.0 53.3C27.4 55.4 23.3 57.6 19.3 58.7C15.3 59.8 9.6 60.0 6.0 60.0C2.4 60.0 0.1 59.6 -2.0 58.7C-4.1 57.8 -5.9 55.3 -6.7 54.7M-6.7 54.7C-8.1 55.0 -11.9 56.9 -15.3 56.7C-18.8 56.4 -24.0 55.4 -27.3 53.3C-30.7 51.2 -33.8 47.3 -35.3 44.0C-36.9 40.7 -36.4 35.1 -36.7 33.3M-36.7 33.3C-37.8 33.6 -41.1 35.6 -43.3 34.7C-45.6 33.8 -48.3 31.3 -50.0 28.0C-51.7 24.7 -53.2 18.7 -53.3 14.7C-53.4 10.7 -51.1 5.8 -50.7 4.0M-50.7 4.0C-51.3 2.9 -54.0 0.2 -54.7 -2.7C-55.3 -5.6 -55.4 -10.4 -54.7 -13.3C-53.9 -16.2 -52.1 -18.4 -50.0 -20.0C-47.9 -21.6 -43.3 -22.2 -42.0 -22.7M54.7 20.7C55.8 20.0 59.4 18.5 61.3 16.7C63.3 14.8 64.6 11.4 66.3 9.6C67.9 7.8 69.9 6.5 71.1 5.6C72.3 4.7 73.1 4.3 73.5 4.0"/></g>
<g transform="translate(75.6 229.5)"><ellipse rx="22" ry="12.7" transform="rotate(3)"/><path d="M-10.7 -12.0C-10.9 -14.2 -11.6 -21.1 -12.0 -25.3C-12.4 -29.6 -13.1 -35.3 -13.3 -37.3M3.3 -12.3C3.4 -14.1 3.2 -19.8 3.6 -23.3C4.0 -26.8 4.9 -30.8 6.0 -33.3C7.1 -35.9 9.3 -37.8 10.0 -38.7M15.3 -8.7C17.1 -10.2 22.7 -15.5 26.0 -18.0C29.3 -20.5 32.2 -22.1 35.3 -23.7C38.4 -25.4 43.1 -27.1 44.7 -27.7M22.0 -3.3C25.1 -3.8 34.3 -5.0 40.7 -6.0C47.0 -7.0 56.8 -8.6 60.0 -9.1M22.7 2.7C25.4 3.8 34.0 6.6 39.3 9.6C44.7 12.6 52.1 18.8 54.7 20.7M17.7 7.6C19.3 10.1 24.8 17.5 27.3 22.7C29.8 27.8 31.4 34.8 32.7 38.7C33.9 42.6 34.3 44.8 34.7 46.0M-4.7 12.0C-5.3 14.7 -7.7 22.7 -8.4 28.0C-9.1 33.3 -9.0 39.6 -8.7 44.0C-8.4 48.4 -7.0 52.9 -6.7 54.7M-16.1 7.9C-18.2 9.9 -25.6 16.6 -28.7 20.0C-31.7 23.4 -33.1 25.8 -34.4 28.0C-35.7 30.2 -36.3 32.4 -36.7 33.3M-21.3 0.0C-23.4 -0.2 -30.1 -1.2 -34.0 -0.9C-37.9 -0.7 -41.9 0.5 -44.7 1.3C-47.4 2.2 -49.7 3.6 -50.7 4.0M-42.0 -22.7C-40.0 -22.0 -34.1 -21.0 -30.0 -18.7C-25.9 -16.3 -19.4 -10.3 -17.3 -8.7M-13.3 -37.3C-14.8 -37.8 -18.6 -40.6 -22.0 -40.3C-25.4 -39.9 -30.7 -38.2 -34.0 -35.3C-37.3 -32.4 -40.7 -25.0 -42.0 -22.9M-13.3 -37.3C-12.8 -38.1 -11.9 -40.9 -10.0 -42.0C-8.1 -43.1 -4.7 -43.9 -2.0 -44.0C0.7 -44.1 4.0 -43.6 6.0 -42.7C8.0 -41.8 9.3 -39.3 10.0 -38.7M10.0 -38.7C11.6 -39.4 16.0 -42.6 19.3 -43.3C22.7 -44.1 26.7 -44.1 30.0 -43.3C33.3 -42.6 36.9 -40.6 39.3 -38.7C41.7 -36.8 43.5 -33.8 44.4 -32.0C45.3 -30.2 44.6 -28.4 44.7 -27.7M44.7 -27.7C46.0 -27.6 50.3 -28.0 52.7 -26.7C55.0 -25.4 57.4 -22.9 58.7 -20.0C59.9 -17.1 59.8 -10.9 60.0 -9.1M60.0 -9.1C60.8 -8.0 63.8 -5.1 64.7 -2.7C65.6 -0.3 65.8 2.4 65.3 5.3C64.9 8.2 63.8 12.1 62.0 14.7C60.2 17.2 55.9 19.7 54.7 20.7M54.7 20.7C55.1 21.9 57.3 25.0 57.3 28.0C57.3 31.0 56.6 35.7 54.7 38.7C52.8 41.7 49.3 44.8 46.0 46.0C42.7 47.2 36.6 46.0 34.7 46.0M34.7 46.0C33.9 47.2 32.6 51.2 30.0 53.3C27.4 55.4 23.3 57.6 19.3 58.7C15.3 59.8 9.6 60.0 6.0 60.0C2.4 60.0 0.1 59.6 -2.0 58.7C-4.1 57.8 -5.9 55.3 -6.7 54.7M-6.7 54.7C-8.1 55.0 -11.9 56.9 -15.3 56.7C-18.8 56.4 -24.0 55.4 -27.3 53.3C-30.7 51.2 -33.8 47.3 -35.3 44.0C-36.9 40.7 -36.4 35.1 -36.7 33.3M-36.7 33.3C-37.8 33.6 -41.1 35.6 -43.3 34.7C-45.6 33.8 -48.3 31.3 -50.0 28.0C-51.7 24.7 -53.2 18.7 -53.3 14.7C-53.4 10.7 -51.1 5.8 -50.7 4.0M-50.7 4.0C-51.3 2.9 -54.0 0.2 -54.7 -2.7C-55.3 -5.6 -55.4 -10.4 -54.7 -13.3C-53.9 -16.2 -52.1 -18.4 -50.0 -20.0C-47.9 -21.6 -43.3 -22.2 -42.0 -22.7M54.7 20.7C55.8 20.0 59.4 18.5 61.3 16.7C63.3 14.8 64.6 11.4 66.3 9.6C67.9 7.8 69.9 6.5 71.1 5.6C72.3 4.7 73.1 4.3 73.5 4.0"/></g>
<g transform="translate(199.7 229.5)"><ellipse rx="22" ry="12.7" transform="rotate(3)"/><path d="M-10.7 -12.0C-10.9 -14.2 -11.6 -21.1 -12.0 -25.3C-12.4 -29.6 -13.1 -35.3 -13.3 -37.3M3.3 -12.3C3.4 -14.1 3.2 -19.8 3.6 -23.3C4.0 -26.8 4.9 -30.8 6.0 -33.3C7.1 -35.9 9.3 -37.8 10.0 -38.7M15.3 -8.7C17.1 -10.2 22.7 -15.5 26.0 -18.0C29.3 -20.5 32.2 -22.1 35.3 -23.7C38.4 -25.4 43.1 -27.1 44.7 -27.7M22.0 -3.3C25.1 -3.8 34.3 -5.0 40.7 -6.0C47.0 -7.0 56.8 -8.6 60.0 -9.1M22.7 2.7C25.4 3.8 34.0 6.6 39.3 9.6C44.7 12.6 52.1 18.8 54.7 20.7M17.7 7.6C19.3 10.1 24.8 17.5 27.3 22.7C29.8 27.8 31.4 34.8 32.7 38.7C33.9 42.6 34.3 44.8 34.7 46.0M-4.7 12.0C-5.3 14.7 -7.7 22.7 -8.4 28.0C-9.1 33.3 -9.0 39.6 -8.7 44.0C-8.4 48.4 -7.0 52.9 -6.7 54.7M-16.1 7.9C-18.2 9.9 -25.6 16.6 -28.7 20.0C-31.7 23.4 -33.1 25.8 -34.4 28.0C-35.7 30.2 -36.3 32.4 -36.7 33.3M-21.3 0.0C-23.4 -0.2 -30.1 -1.2 -34.0 -0.9C-37.9 -0.7 -41.9 0.5 -44.7 1.3C-47.4 2.2 -49.7 3.6 -50.7 4.0M-42.0 -22.7C-40.0 -22.0 -34.1 -21.0 -30.0 -18.7C-25.9 -16.3 -19.4 -10.3 -17.3 -8.7M-13.3 -37.3C-14.8 -37.8 -18.6 -40.6 -22.0 -40.3C-25.4 -39.9 -30.7 -38.2 -34.0 -35.3C-37.3 -32.4 -40.7 -25.0 -42.0 -22.9M-13.3 -37.3C-12.8 -38.1 -11.9 -40.9 -10.0 -42.0C-8.1 -43.1 -4.7 -43.9 -2.0 -44.0C0.7 -44.1 4.0 -43.6 6.0 -42.7C8.0 -41.8 9.3 -39.3 10.0 -38.7M10.0 -38.7C11.6 -39.4 16.0 -42.6 19.3 -43.3C22.7 -44.1 26.7 -44.1 30.0 -43.3C33.3 -42.6 36.9 -40.6 39.3 -38.7C41.7 -36.8 43.5 -33.8 44.4 -32.0C45.3 -30.2 44.6 -28.4 44.7 -27.7M44.7 -27.7C46.0 -27.6 50.3 -28.0 52.7 -26.7C55.0 -25.4 57.4 -22.9 58.7 -20.0C59.9 -17.1 59.8 -10.9 60.0 -9.1M60.0 -9.1C60.8 -8.0 63.8 -5.1 64.7 -2.7C65.6 -0.3 65.8 2.4 65.3 5.3C64.9 8.2 63.8 12.1 62.0 14.7C60.2 17.2 55.9 19.7 54.7 20.7M54.7 20.7C55.1 21.9 57.3 25.0 57.3 28.0C57.3 31.0 56.6 35.7 54.7 38.7C52.8 41.7 49.3 44.8 46.0 46.0C42.7 47.2 36.6 46.0 34.7 46.0M34.7 46.0C33.9 47.2 32.6 51.2 30.0 53.3C27.4 55.4 23.3 57.6 19.3 58.7C15.3 59.8 9.6 60.0 6.0 60.0C2.4 60.0 0.1 59.6 -2.0 58.7C-4.1 57.8 -5.9 55.3 -6.7 54.7M-6.7 54.7C-8.1 55.0 -11.9 56.9 -15.3 56.7C-18.8 56.4 -24.0 55.4 -27.3 53.3C-30.7 51.2 -33.8 47.3 -35.3 44.0C-36.9 40.7 -36.4 35.1 -36.7 33.3M-36.7 33.3C-37.8 33.6 -41.1 35.6 -43.3 34.7C-45.6 33.8 -48.3 31.3 -50.0 28.0C-51.7 24.7 -53.2 18.7 -53.3 14.7C-53.4 10.7 -51.1 5.8 -50.7 4.0M-50.7 4.0C-51.3 2.9 -54.0 0.2 -54.7 -2.7C-55.3 -5.6 -55.4 -10.4 -54.7 -13.3C-53.9 -16.2 -52.1 -18.4 -50.0 -20.0C-47.9 -21.6 -43.3 -22.2 -42.0 -22.7M54.7 20.7C55.8 20.0 59.4 18.5 61.3 16.7C63.3 14.8 64.6 11.4 66.3 9.6C67.9 7.8 69.9 6.5 71.1 5.6C72.3 4.7 73.1 4.3 73.5 4.0"/></g>
<g transform="translate(323.8 229.5)"><ellipse rx="22" ry="12.7" transform="rotate(3)"/><path d="M-10.7 -12.0C-10.9 -14.2 -11.6 -21.1 -12.0 -25.3C-12.4 -29.6 -13.1 -35.3 -13.3 -37.3M3.3 -12.3C3.4 -14.1 3.2 -19.8 3.6 -23.3C4.0 -26.8 4.9 -30.8 6.0 -33.3C7.1 -35.9 9.3 -37.8 10.0 -38.7M15.3 -8.7C17.1 -10.2 22.7 -15.5 26.0 -18.0C29.3 -20.5 32.2 -22.1 35.3 -23.7C38.4 -25.4 43.1 -27.1 44.7 -27.7M22.0 -3.3C25.1 -3.8 34.3 -5.0 40.7 -6.0C47.0 -7.0 56.8 -8.6 60.0 -9.1M22.7 2.7C25.4 3.8 34.0 6.6 39.3 9.6C44.7 12.6 52.1 18.8 54.7 20.7M17.7 7.6C19.3 10.1 24.8 17.5 27.3 22.7C29.8 27.8 31.4 34.8 32.7 38.7C33.9 42.6 34.3 44.8 34.7 46.0M-4.7 12.0C-5.3 14.7 -7.7 22.7 -8.4 28.0C-9.1 33.3 -9.0 39.6 -8.7 44.0C-8.4 48.4 -7.0 52.9 -6.7 54.7M-16.1 7.9C-18.2 9.9 -25.6 16.6 -28.7 20.0C-31.7 23.4 -33.1 25.8 -34.4 28.0C-35.7 30.2 -36.3 32.4 -36.7 33.3M-21.3 0.0C-23.4 -0.2 -30.1 -1.2 -34.0 -0.9C-37.9 -0.7 -41.9 0.5 -44.7 1.3C-47.4 2.2 -49.7 3.6 -50.7 4.0M-42.0 -22.7C-40.0 -22.0 -34.1 -21.0 -30.0 -18.7C-25.9 -16.3 -19.4 -10.3 -17.3 -8.7M-13.3 -37.3C-14.8 -37.8 -18.6 -40.6 -22.0 -40.3C-25.4 -39.9 -30.7 -38.2 -34.0 -35.3C-37.3 -32.4 -40.7 -25.0 -42.0 -22.9M-13.3 -37.3C-12.8 -38.1 -11.9 -40.9 -10.0 -42.0C-8.1 -43.1 -4.7 -43.9 -2.0 -44.0C0.7 -44.1 4.0 -43.6 6.0 -42.7C8.0 -41.8 9.3 -39.3 10.0 -38.7M10.0 -38.7C11.6 -39.4 16.0 -42.6 19.3 -43.3C22.7 -44.1 26.7 -44.1 30.0 -43.3C33.3 -42.6 36.9 -40.6 39.3 -38.7C41.7 -36.8 43.5 -33.8 44.4 -32.0C45.3 -30.2 44.6 -28.4 44.7 -27.7M44.7 -27.7C46.0 -27.6 50.3 -28.0 52.7 -26.7C55.0 -25.4 57.4 -22.9 58.7 -20.0C59.9 -17.1 59.8 -10.9 60.0 -9.1M60.0 -9.1C60.8 -8.0 63.8 -5.1 64.7 -2.7C65.6 -0.3 65.8 2.4 65.3 5.3C64.9 8.2 63.8 12.1 62.0 14.7C60.2 17.2 55.9 19.7 54.7 20.7M54.7 20.7C55.1 21.9 57.3 25.0 57.3 28.0C57.3 31.0 56.6 35.7 54.7 38.7C52.8 41.7 49.3 44.8 46.0 46.0C42.7 47.2 36.6 46.0 34.7 46.0M34.7 46.0C33.9 47.2 32.6 51.2 30.0 53.3C27.4 55.4 23.3 57.6 19.3 58.7C15.3 59.8 9.6 60.0 6.0 60.0C2.4 60.0 0.1 59.6 -2.0 58.7C-4.1 57.8 -5.9 55.3 -6.7 54.7M-6.7 54.7C-8.1 55.0 -11.9 56.9 -15.3 56.7C-18.8 56.4 -24.0 55.4 -27.3 53.3C-30.7 51.2 -33.8 47.3 -35.3 44.0C-36.9 40.7 -36.4 35.1 -36.7 33.3M-36.7 33.3C-37.8 33.6 -41.1 35.6 -43.3 34.7C-45.6 33.8 -48.3 31.3 -50.0 28.0C-51.7 24.7 -53.2 18.7 -53.3 14.7C-53.4 10.7 -51.1 5.8 -50.7 4.0M-50.7 4.0C-51.3 2.9 -54.0 0.2 -54.7 -2.7C-55.3 -5.6 -55.4 -10.4 -54.7 -13.3C-53.9 -16.2 -52.1 -18.4 -50.0 -20.0C-47.9 -21.6 -43.3 -22.2 -42.0 -22.7M54.7 20.7C55.8 20.0 59.4 18.5 61.3 16.7C63.3 14.8 64.6 11.4 66.3 9.6C67.9 7.8 69.9 6.5 71.1 5.6C72.3 4.7 73.1 4.3 73.5 4.0"/></g>
<g transform="translate(447.9 229.5)"><ellipse rx="22" ry="12.7" transform="rotate(3)"/><path d="M-10.7 -12.0C-10.9 -14.2 -11.6 -21.1 -12.0 -25.3C-12.4 -29.6 -13.1 -35.3 -13.3 -37.3M3.3 -12.3C3.4 -14.1 3.2 -19.8 3.6 -23.3C4.0 -26.8 4.9 -30.8 6.0 -33.3C7.1 -35.9 9.3 -37.8 10.0 -38.7M15.3 -8.7C17.1 -10.2 22.7 -15.5 26.0 -18.0C29.3 -20.5 32.2 -22.1 35.3 -23.7C38.4 -25.4 43.1 -27.1 44.7 -27.7M22.0 -3.3C25.1 -3.8 34.3 -5.0 40.7 -6.0C47.0 -7.0 56.8 -8.6 60.0 -9.1M22.7 2.7C25.4 3.8 34.0 6.6 39.3 9.6C44.7 12.6 52.1 18.8 54.7 20.7M17.7 7.6C19.3 10.1 24.8 17.5 27.3 22.7C29.8 27.8 31.4 34.8 32.7 38.7C33.9 42.6 34.3 44.8 34.7 46.0M-4.7 12.0C-5.3 14.7 -7.7 22.7 -8.4 28.0C-9.1 33.3 -9.0 39.6 -8.7 44.0C-8.4 48.4 -7.0 52.9 -6.7 54.7M-16.1 7.9C-18.2 9.9 -25.6 16.6 -28.7 20.0C-31.7 23.4 -33.1 25.8 -34.4 28.0C-35.7 30.2 -36.3 32.4 -36.7 33.3M-21.3 0.0C-23.4 -0.2 -30.1 -1.2 -34.0 -0.9C-37.9 -0.7 -41.9 0.5 -44.7 1.3C-47.4 2.2 -49.7 3.6 -50.7 4.0M-42.0 -22.7C-40.0 -22.0 -34.1 -21.0 -30.0 -18.7C-25.9 -16.3 -19.4 -10.3 -17.3 -8.7M-13.3 -37.3C-14.8 -37.8 -18.6 -40.6 -22.0 -40.3C-25.4 -39.9 -30.7 -38.2 -34.0 -35.3C-37.3 -32.4 -40.7 -25.0 -42.0 -22.9M-13.3 -37.3C-12.8 -38.1 -11.9 -40.9 -10.0 -42.0C-8.1 -43.1 -4.7 -43.9 -2.0 -44.0C0.7 -44.1 4.0 -43.6 6.0 -42.7C8.0 -41.8 9.3 -39.3 10.0 -38.7M10.0 -38.7C11.6 -39.4 16.0 -42.6 19.3 -43.3C22.7 -44.1 26.7 -44.1 30.0 -43.3C33.3 -42.6 36.9 -40.6 39.3 -38.7C41.7 -36.8 43.5 -33.8 44.4 -32.0C45.3 -30.2 44.6 -28.4 44.7 -27.7M44.7 -27.7C46.0 -27.6 50.3 -28.0 52.7 -26.7C55.0 -25.4 57.4 -22.9 58.7 -20.0C59.9 -17.1 59.8 -10.9 60.0 -9.1M60.0 -9.1C60.8 -8.0 63.8 -5.1 64.7 -2.7C65.6 -0.3 65.8 2.4 65.3 5.3C64.9 8.2 63.8 12.1 62.0 14.7C60.2 17.2 55.9 19.7 54.7 20.7M54.7 20.7C55.1 21.9 57.3 25.0 57.3 28.0C57.3 31.0 56.6 35.7 54.7 38.7C52.8 41.7 49.3 44.8 46.0 46.0C42.7 47.2 36.6 46.0 34.7 46.0M34.7 46.0C33.9 47.2 32.6 51.2 30.0 53.3C27.4 55.4 23.3 57.6 19.3 58.7C15.3 59.8 9.6 60.0 6.0 60.0C2.4 60.0 0.1 59.6 -2.0 58.7C-4.1 57.8 -5.9 55.3 -6.7 54.7M-6.7 54.7C-8.1 55.0 -11.9 56.9 -15.3 56.7C-18.8 56.4 -24.0 55.4 -27.3 53.3C-30.7 51.2 -33.8 47.3 -35.3 44.0C-36.9 40.7 -36.4 35.1 -36.7 33.3M-36.7 33.3C-37.8 33.6 -41.1 35.6 -43.3 34.7C-45.6 33.8 -48.3 31.3 -50.0 28.0C-51.7 24.7 -53.2 18.7 -53.3 14.7C-53.4 10.7 -51.1 5.8 -50.7 4.0M-50.7 4.0C-51.3 2.9 -54.0 0.2 -54.7 -2.7C-55.3 -5.6 -55.4 -10.4 -54.7 -13.3C-53.9 -16.2 -52.1 -18.4 -50.0 -20.0C-47.9 -21.6 -43.3 -22.2 -42.0 -22.7M54.7 20.7C55.8 20.0 59.4 18.5 61.3 16.7C63.3 14.8 64.6 11.4 66.3 9.6C67.9 7.8 69.9 6.5 71.1 5.6C72.3 4.7 73.1 4.3 73.5 4.0"/></g>
<g transform="translate(-110.6 333.6)"><ellipse rx="22" ry="12.7" transform="rotate(3)"/><path d="M-10.7 -12.0C-10.9 -14.2 -11.6 -21.1 -12.0 -25.3C-12.4 -29.6 -13.1 -35.3 -13.3 -37.3M3.3 -12.3C3.4 -14.1 3.2 -19.8 3.6 -23.3C4.0 -26.8 4.9 -30.8 6.0 -33.3C7.1 -35.9 9.3 -37.8 10.0 -38.7M15.3 -8.7C17.1 -10.2 22.7 -15.5 26.0 -18.0C29.3 -20.5 32.2 -22.1 35.3 -23.7C38.4 -25.4 43.1 -27.1 44.7 -27.7M22.0 -3.3C25.1 -3.8 34.3 -5.0 40.7 -6.0C47.0 -7.0 56.8 -8.6 60.0 -9.1M22.7 2.7C25.4 3.8 34.0 6.6 39.3 9.6C44.7 12.6 52.1 18.8 54.7 20.7M17.7 7.6C19.3 10.1 24.8 17.5 27.3 22.7C29.8 27.8 31.4 34.8 32.7 38.7C33.9 42.6 34.3 44.8 34.7 46.0M-4.7 12.0C-5.3 14.7 -7.7 22.7 -8.4 28.0C-9.1 33.3 -9.0 39.6 -8.7 44.0C-8.4 48.4 -7.0 52.9 -6.7 54.7M-16.1 7.9C-18.2 9.9 -25.6 16.6 -28.7 20.0C-31.7 23.4 -33.1 25.8 -34.4 28.0C-35.7 30.2 -36.3 32.4 -36.7 33.3M-21.3 0.0C-23.4 -0.2 -30.1 -1.2 -34.0 -0.9C-37.9 -0.7 -41.9 0.5 -44.7 1.3C-47.4 2.2 -49.7 3.6 -50.7 4.0M-42.0 -22.7C-40.0 -22.0 -34.1 -21.0 -30.0 -18.7C-25.9 -16.3 -19.4 -10.3 -17.3 -8.7M-13.3 -37.3C-14.8 -37.8 -18.6 -40.6 -22.0 -40.3C-25.4 -39.9 -30.7 -38.2 -34.0 -35.3C-37.3 -32.4 -40.7 -25.0 -42.0 -22.9M-13.3 -37.3C-12.8 -38.1 -11.9 -40.9 -10.0 -42.0C-8.1 -43.1 -4.7 -43.9 -2.0 -44.0C0.7 -44.1 4.0 -43.6 6.0 -42.7C8.0 -41.8 9.3 -39.3 10.0 -38.7M10.0 -38.7C11.6 -39.4 16.0 -42.6 19.3 -43.3C22.7 -44.1 26.7 -44.1 30.0 -43.3C33.3 -42.6 36.9 -40.6 39.3 -38.7C41.7 -36.8 43.5 -33.8 44.4 -32.0C45.3 -30.2 44.6 -28.4 44.7 -27.7M44.7 -27.7C46.0 -27.6 50.3 -28.0 52.7 -26.7C55.0 -25.4 57.4 -22.9 58.7 -20.0C59.9 -17.1 59.8 -10.9 60.0 -9.1M60.0 -9.1C60.8 -8.0 63.8 -5.1 64.7 -2.7C65.6 -0.3 65.8 2.4 65.3 5.3C64.9 8.2 63.8 12.1 62.0 14.7C60.2 17.2 55.9 19.7 54.7 20.7M54.7 20.7C55.1 21.9 57.3 25.0 57.3 28.0C57.3 31.0 56.6 35.7 54.7 38.7C52.8 41.7 49.3 44.8 46.0 46.0C42.7 47.2 36.6 46.0 34.7 46.0M34.7 46.0C33.9 47.2 32.6 51.2 30.0 53.3C27.4 55.4 23.3 57.6 19.3 58.7C15.3 59.8 9.6 60.0 6.0 60.0C2.4 60.0 0.1 59.6 -2.0 58.7C-4.1 57.8 -5.9 55.3 -6.7 54.7M-6.7 54.7C-8.1 55.0 -11.9 56.9 -15.3 56.7C-18.8 56.4 -24.0 55.4 -27.3 53.3C-30.7 51.2 -33.8 47.3 -35.3 44.0C-36.9 40.7 -36.4 35.1 -36.7 33.3M-36.7 33.3C-37.8 33.6 -41.1 35.6 -43.3 34.7C-45.6 33.8 -48.3 31.3 -50.0 28.0C-51.7 24.7 -53.2 18.7 -53.3 14.7C-53.4 10.7 -51.1 5.8 -50.7 4.0M-50.7 4.0C-51.3 2.9 -54.0 0.2 -54.7 -2.7C-55.3 -5.6 -55.4 -10.4 -54.7 -13.3C-53.9 -16.2 -52.1 -18.4 -50.0 -20.0C-47.9 -21.6 -43.3 -22.2 -42.0 -22.7M54.7 20.7C55.8 20.0 59.4 18.5 61.3 16.7C63.3 14.8 64.6 11.4 66.3 9.6C67.9 7.8 69.9 6.5 71.1 5.6C72.3 4.7 73.1 4.3 73.5 4.0"/></g>
<g transform="translate(13.5 333.6)"><ellipse rx="22" ry="12.7" transform="rotate(3)"/><path d="M-10.7 -12.0C-10.9 -14.2 -11.6 -21.1 -12.0 -25.3C-12.4 -29.6 -13.1 -35.3 -13.3 -37.3M3.3 -12.3C3.4 -14.1 3.2 -19.8 3.6 -23.3C4.0 -26.8 4.9 -30.8 6.0 -33.3C7.1 -35.9 9.3 -37.8 10.0 -38.7M15.3 -8.7C17.1 -10.2 22.7 -15.5 26.0 -18.0C29.3 -20.5 32.2 -22.1 35.3 -23.7C38.4 -25.4 43.1 -27.1 44.7 -27.7M22.0 -3.3C25.1 -3.8 34.3 -5.0 40.7 -6.0C47.0 -7.0 56.8 -8.6 60.0 -9.1M22.7 2.7C25.4 3.8 34.0 6.6 39.3 9.6C44.7 12.6 52.1 18.8 54.7 20.7M17.7 7.6C19.3 10.1 24.8 17.5 27.3 22.7C29.8 27.8 31.4 34.8 32.7 38.7C33.9 42.6 34.3 44.8 34.7 46.0M-4.7 12.0C-5.3 14.7 -7.7 22.7 -8.4 28.0C-9.1 33.3 -9.0 39.6 -8.7 44.0C-8.4 48.4 -7.0 52.9 -6.7 54.7M-16.1 7.9C-18.2 9.9 -25.6 16.6 -28.7 20.0C-31.7 23.4 -33.1 25.8 -34.4 28.0C-35.7 30.2 -36.3 32.4 -36.7 33.3M-21.3 0.0C-23.4 -0.2 -30.1 -1.2 -34.0 -0.9C-37.9 -0.7 -41.9 0.5 -44.7 1.3C-47.4 2.2 -49.7 3.6 -50.7 4.0M-42.0 -22.7C-40.0 -22.0 -34.1 -21.0 -30.0 -18.7C-25.9 -16.3 -19.4 -10.3 -17.3 -8.7M-13.3 -37.3C-14.8 -37.8 -18.6 -40.6 -22.0 -40.3C-25.4 -39.9 -30.7 -38.2 -34.0 -35.3C-37.3 -32.4 -40.7 -25.0 -42.0 -22.9M-13.3 -37.3C-12.8 -38.1 -11.9 -40.9 -10.0 -42.0C-8.1 -43.1 -4.7 -43.9 -2.0 -44.0C0.7 -44.1 4.0 -43.6 6.0 -42.7C8.0 -41.8 9.3 -39.3 10.0 -38.7M10.0 -38.7C11.6 -39.4 16.0 -42.6 19.3 -43.3C22.7 -44.1 26.7 -44.1 30.0 -43.3C33.3 -42.6 36.9 -40.6 39.3 -38.7C41.7 -36.8 43.5 -33.8 44.4 -32.0C45.3 -30.2 44.6 -28.4 44.7 -27.7M44.7 -27.7C46.0 -27.6 50.3 -28.0 52.7 -26.7C55.0 -25.4 57.4 -22.9 58.7 -20.0C59.9 -17.1 59.8 -10.9 60.0 -9.1M60.0 -9.1C60.8 -8.0 63.8 -5.1 64.7 -2.7C65.6 -0.3 65.8 2.4 65.3 5.3C64.9 8.2 63.8 12.1 62.0 14.7C60.2 17.2 55.9 19.7 54.7 20.7M54.7 20.7C55.1 21.9 57.3 25.0 57.3 28.0C57.3 31.0 56.6 35.7 54.7 38.7C52.8 41.7 49.3 44.8 46.0 46.0C42.7 47.2 36.6 46.0 34.7 46.0M34.7 46.0C33.9 47.2 32.6 51.2 30.0 53.3C27.4 55.4 23.3 57.6 19.3 58.7C15.3 59.8 9.6 60.0 6.0 60.0C2.4 60.0 0.1 59.6 -2.0 58.7C-4.1 57.8 -5.9 55.3 -6.7 54.7M-6.7 54.7C-8.1 55.0 -11.9 56.9 -15.3 56.7C-18.8 56.4 -24.0 55.4 -27.3 53.3C-30.7 51.2 -33.8 47.3 -35.3 44.0C-36.9 40.7 -36.4 35.1 -36.7 33.3M-36.7 33.3C-37.8 33.6 -41.1 35.6 -43.3 34.7C-45.6 33.8 -48.3 31.3 -50.0 28.0C-51.7 24.7 -53.2 18.7 -53.3 14.7C-53.4 10.7 -51.1 5.8 -50.7 4.0M-50.7 4.0C-51.3 2.9 -54.0 0.2 -54.7 -2.7C-55.3 -5.6 -55.4 -10.4 -54.7 -13.3C-53.9 -16.2 -52.1 -18.4 -50.0 -20.0C-47.9 -21.6 -43.3 -22.2 -42.0 -22.7M54.7 20.7C55.8 20.0 59.4 18.5 61.3 16.7C63.3 14.8 64.6 11.4 66.3 9.6C67.9 7.8 69.9 6.5 71.1 5.6C72.3 4.7 73.1 4.3 73.5 4.0"/></g>
<g transform="translate(137.6 333.6)"><ellipse rx="22" ry="12.7" transform="rotate(3)"/><path d="M-10.7 -12.0C-10.9 -14.2 -11.6 -21.1 -12.0 -25.3C-12.4 -29.6 -13.1 -35.3 -13.3 -37.3M3.3 -12.3C3.4 -14.1 3.2 -19.8 3.6 -23.3C4.0 -26.8 4.9 -30.8 6.0 -33.3C7.1 -35.9 9.3 -37.8 10.0 -38.7M15.3 -8.7C17.1 -10.2 22.7 -15.5 26.0 -18.0C29.3 -20.5 32.2 -22.1 35.3 -23.7C38.4 -25.4 43.1 -27.1 44.7 -27.7M22.0 -3.3C25.1 -3.8 34.3 -5.0 40.7 -6.0C47.0 -7.0 56.8 -8.6 60.0 -9.1M22.7 2.7C25.4 3.8 34.0 6.6 39.3 9.6C44.7 12.6 52.1 18.8 54.7 20.7M17.7 7.6C19.3 10.1 24.8 17.5 27.3 22.7C29.8 27.8 31.4 34.8 32.7 38.7C33.9 42.6 34.3 44.8 34.7 46.0M-4.7 12.0C-5.3 14.7 -7.7 22.7 -8.4 28.0C-9.1 33.3 -9.0 39.6 -8.7 44.0C-8.4 48.4 -7.0 52.9 -6.7 54.7M-16.1 7.9C-18.2 9.9 -25.6 16.6 -28.7 20.0C-31.7 23.4 -33.1 25.8 -34.4 28.0C-35.7 30.2 -36.3 32.4 -36.7 33.3M-21.3 0.0C-23.4 -0.2 -30.1 -1.2 -34.0 -0.9C-37.9 -0.7 -41.9 0.5 -44.7 1.3C-47.4 2.2 -49.7 3.6 -50.7 4.0M-42.0 -22.7C-40.0 -22.0 -34.1 -21.0 -30.0 -18.7C-25.9 -16.3 -19.4 -10.3 -17.3 -8.7M-13.3 -37.3C-14.8 -37.8 -18.6 -40.6 -22.0 -40.3C-25.4 -39.9 -30.7 -38.2 -34.0 -35.3C-37.3 -32.4 -40.7 -25.0 -42.0 -22.9M-13.3 -37.3C-12.8 -38.1 -11.9 -40.9 -10.0 -42.0C-8.1 -43.1 -4.7 -43.9 -2.0 -44.0C0.7 -44.1 4.0 -43.6 6.0 -42.7C8.0 -41.8 9.3 -39.3 10.0 -38.7M10.0 -38.7C11.6 -39.4 16.0 -42.6 19.3 -43.3C22.7 -44.1 26.7 -44.1 30.0 -43.3C33.3 -42.6 36.9 -40.6 39.3 -38.7C41.7 -36.8 43.5 -33.8 44.4 -32.0C45.3 -30.2 44.6 -28.4 44.7 -27.7M44.7 -27.7C46.0 -27.6 50.3 -28.0 52.7 -26.7C55.0 -25.4 57.4 -22.9 58.7 -20.0C59.9 -17.1 59.8 -10.9 60.0 -9.1M60.0 -9.1C60.8 -8.0 63.8 -5.1 64.7 -2.7C65.6 -0.3 65.8 2.4 65.3 5.3C64.9 8.2 63.8 12.1 62.0 14.7C60.2 17.2 55.9 19.7 54.7 20.7M54.7 20.7C55.1 21.9 57.3 25.0 57.3 28.0C57.3 31.0 56.6 35.7 54.7 38.7C52.8 41.7 49.3 44.8 46.0 46.0C42.7 47.2 36.6 46.0 34.7 46.0M34.7 46.0C33.9 47.2 32.6 51.2 30.0 53.3C27.4 55.4 23.3 57.6 19.3 58.7C15.3 59.8 9.6 60.0 6.0 60.0C2.4 60.0 0.1 59.6 -2.0 58.7C-4.1 57.8 -5.9 55.3 -6.7 54.7M-6.7 54.7C-8.1 55.0 -11.9 56.9 -15.3 56.7C-18.8 56.4 -24.0 55.4 -27.3 53.3C-30.7 51.2 -33.8 47.3 -35.3 44.0C-36.9 40.7 -36.4 35.1 -36.7 33.3M-36.7 33.3C-37.8 33.6 -41.1 35.6 -43.3 34.7C-45.6 33.8 -48.3 31.3 -50.0 28.0C-51.7 24.7 -53.2 18.7 -53.3 14.7C-53.4 10.7 -51.1 5.8 -50.7 4.0M-50.7 4.0C-51.3 2.9 -54.0 0.2 -54.7 -2.7C-55.3 -5.6 -55.4 -10.4 -54.7 -13.3C-53.9 -16.2 -52.1 -18.4 -50.0 -20.0C-47.9 -21.6 -43.3 -22.2 -42.0 -22.7M54.7 20.7C55.8 20.0 59.4 18.5 61.3 16.7C63.3 14.8 64.6 11.4 66.3 9.6C67.9 7.8 69.9 6.5 71.1 5.6C72.3 4.7 73.1 4.3 73.5 4.0"/></g>
<g transform="translate(261.8 333.6)"><ellipse rx="22" ry="12.7" transform="rotate(3)"/><path d="M-10.7 -12.0C-10.9 -14.2 -11.6 -21.1 -12.0 -25.3C-12.4 -29.6 -13.1 -35.3 -13.3 -37.3M3.3 -12.3C3.4 -14.1 3.2 -19.8 3.6 -23.3C4.0 -26.8 4.9 -30.8 6.0 -33.3C7.1 -35.9 9.3 -37.8 10.0 -38.7M15.3 -8.7C17.1 -10.2 22.7 -15.5 26.0 -18.0C29.3 -20.5 32.2 -22.1 35.3 -23.7C38.4 -25.4 43.1 -27.1 44.7 -27.7M22.0 -3.3C25.1 -3.8 34.3 -5.0 40.7 -6.0C47.0 -7.0 56.8 -8.6 60.0 -9.1M22.7 2.7C25.4 3.8 34.0 6.6 39.3 9.6C44.7 12.6 52.1 18.8 54.7 20.7M17.7 7.6C19.3 10.1 24.8 17.5 27.3 22.7C29.8 27.8 31.4 34.8 32.7 38.7C33.9 42.6 34.3 44.8 34.7 46.0M-4.7 12.0C-5.3 14.7 -7.7 22.7 -8.4 28.0C-9.1 33.3 -9.0 39.6 -8.7 44.0C-8.4 48.4 -7.0 52.9 -6.7 54.7M-16.1 7.9C-18.2 9.9 -25.6 16.6 -28.7 20.0C-31.7 23.4 -33.1 25.8 -34.4 28.0C-35.7 30.2 -36.3 32.4 -36.7 33.3M-21.3 0.0C-23.4 -0.2 -30.1 -1.2 -34.0 -0.9C-37.9 -0.7 -41.9 0.5 -44.7 1.3C-47.4 2.2 -49.7 3.6 -50.7 4.0M-42.0 -22.7C-40.0 -22.0 -34.1 -21.0 -30.0 -18.7C-25.9 -16.3 -19.4 -10.3 -17.3 -8.7M-13.3 -37.3C-14.8 -37.8 -18.6 -40.6 -22.0 -40.3C-25.4 -39.9 -30.7 -38.2 -34.0 -35.3C-37.3 -32.4 -40.7 -25.0 -42.0 -22.9M-13.3 -37.3C-12.8 -38.1 -11.9 -40.9 -10.0 -42.0C-8.1 -43.1 -4.7 -43.9 -2.0 -44.0C0.7 -44.1 4.0 -43.6 6.0 -42.7C8.0 -41.8 9.3 -39.3 10.0 -38.7M10.0 -38.7C11.6 -39.4 16.0 -42.6 19.3 -43.3C22.7 -44.1 26.7 -44.1 30.0 -43.3C33.3 -42.6 36.9 -40.6 39.3 -38.7C41.7 -36.8 43.5 -33.8 44.4 -32.0C45.3 -30.2 44.6 -28.4 44.7 -27.7M44.7 -27.7C46.0 -27.6 50.3 -28.0 52.7 -26.7C55.0 -25.4 57.4 -22.9 58.7 -20.0C59.9 -17.1 59.8 -10.9 60.0 -9.1M60.0 -9.1C60.8 -8.0 63.8 -5.1 64.7 -2.7C65.6 -0.3 65.8 2.4 65.3 5.3C64.9 8.2 63.8 12.1 62.0 14.7C60.2 17.2 55.9 19.7 54.7 20.7M54.7 20.7C55.1 21.9 57.3 25.0 57.3 28.0C57.3 31.0 56.6 35.7 54.7 38.7C52.8 41.7 49.3 44.8 46.0 46.0C42.7 47.2 36.6 46.0 34.7 46.0M34.7 46.0C33.9 47.2 32.6 51.2 30.0 53.3C27.4 55.4 23.3 57.6 19.3 58.7C15.3 59.8 9.6 60.0 6.0 60.0C2.4 60.0 0.1 59.6 -2.0 58.7C-4.1 57.8 -5.9 55.3 -6.7 54.7M-6.7 54.7C-8.1 55.0 -11.9 56.9 -15.3 56.7C-18.8 56.4 -24.0 55.4 -27.3 53.3C-30.7 51.2 -33.8 47.3 -35.3 44.0C-36.9 40.7 -36.4 35.1 -36.7 33.3M-36.7 33.3C-37.8 33.6 -41.1 35.6 -43.3 34.7C-45.6 33.8 -48.3 31.3 -50.0 28.0C-51.7 24.7 -53.2 18.7 -53.3 14.7C-53.4 10.7 -51.1 5.8 -50.7 4.0M-50.7 4.0C-51.3 2.9 -54.0 0.2 -54.7 -2.7C-55.3 -5.6 -55.4 -10.4 -54.7 -13.3C-53.9 -16.2 -52.1 -18.4 -50.0 -20.0C-47.9 -21.6 -43.3 -22.2 -42.0 -22.7M54.7 20.7C55.8 20.0 59.4 18.5 61.3 16.7C63.3 14.8 64.6 11.4 66.3 9.6C67.9 7.8 69.9 6.5 71.1 5.6C72.3 4.7 73.1 4.3 73.5 4.0"/></g>
<g transform="translate(385.8 333.6)"><ellipse rx="22" ry="12.7" transform="rotate(3)"/><path d="M-10.7 -12.0C-10.9 -14.2 -11.6 -21.1 -12.0 -25.3C-12.4 -29.6 -13.1 -35.3 -13.3 -37.3M3.3 -12.3C3.4 -14.1 3.2 -19.8 3.6 -23.3C4.0 -26.8 4.9 -30.8 6.0 -33.3C7.1 -35.9 9.3 -37.8 10.0 -38.7M15.3 -8.7C17.1 -10.2 22.7 -15.5 26.0 -18.0C29.3 -20.5 32.2 -22.1 35.3 -23.7C38.4 -25.4 43.1 -27.1 44.7 -27.7M22.0 -3.3C25.1 -3.8 34.3 -5.0 40.7 -6.0C47.0 -7.0 56.8 -8.6 60.0 -9.1M22.7 2.7C25.4 3.8 34.0 6.6 39.3 9.6C44.7 12.6 52.1 18.8 54.7 20.7M17.7 7.6C19.3 10.1 24.8 17.5 27.3 22.7C29.8 27.8 31.4 34.8 32.7 38.7C33.9 42.6 34.3 44.8 34.7 46.0M-4.7 12.0C-5.3 14.7 -7.7 22.7 -8.4 28.0C-9.1 33.3 -9.0 39.6 -8.7 44.0C-8.4 48.4 -7.0 52.9 -6.7 54.7M-16.1 7.9C-18.2 9.9 -25.6 16.6 -28.7 20.0C-31.7 23.4 -33.1 25.8 -34.4 28.0C-35.7 30.2 -36.3 32.4 -36.7 33.3M-21.3 0.0C-23.4 -0.2 -30.1 -1.2 -34.0 -0.9C-37.9 -0.7 -41.9 0.5 -44.7 1.3C-47.4 2.2 -49.7 3.6 -50.7 4.0M-42.0 -22.7C-40.0 -22.0 -34.1 -21.0 -30.0 -18.7C-25.9 -16.3 -19.4 -10.3 -17.3 -8.7M-13.3 -37.3C-14.8 -37.8 -18.6 -40.6 -22.0 -40.3C-25.4 -39.9 -30.7 -38.2 -34.0 -35.3C-37.3 -32.4 -40.7 -25.0 -42.0 -22.9M-13.3 -37.3C-12.8 -38.1 -11.9 -40.9 -10.0 -42.0C-8.1 -43.1 -4.7 -43.9 -2.0 -44.0C0.7 -44.1 4.0 -43.6 6.0 -42.7C8.0 -41.8 9.3 -39.3 10.0 -38.7M10.0 -38.7C11.6 -39.4 16.0 -42.6 19.3 -43.3C22.7 -44.1 26.7 -44.1 30.0 -43.3C33.3 -42.6 36.9 -40.6 39.3 -38.7C41.7 -36.8 43.5 -33.8 44.4 -32.0C45.3 -30.2 44.6 -28.4 44.7 -27.7M44.7 -27.7C46.0 -27.6 50.3 -28.0 52.7 -26.7C55.0 -25.4 57.4 -22.9 58.7 -20.0C59.9 -17.1 59.8 -10.9 60.0 -9.1M60.0 -9.1C60.8 -8.0 63.8 -5.1 64.7 -2.7C65.6 -0.3 65.8 2.4 65.3 5.3C64.9 8.2 63.8 12.1 62.0 14.7C60.2 17.2 55.9 19.7 54.7 20.7M54.7 20.7C55.1 21.9 57.3 25.0 57.3 28.0C57.3 31.0 56.6 35.7 54.7 38.7C52.8 41.7 49.3 44.8 46.0 46.0C42.7 47.2 36.6 46.0 34.7 46.0M34.7 46.0C33.9 47.2 32.6 51.2 30.0 53.3C27.4 55.4 23.3 57.6 19.3 58.7C15.3 59.8 9.6 60.0 6.0 60.0C2.4 60.0 0.1 59.6 -2.0 58.7C-4.1 57.8 -5.9 55.3 -6.7 54.7M-6.7 54.7C-8.1 55.0 -11.9 56.9 -15.3 56.7C-18.8 56.4 -24.0 55.4 -27.3 53.3C-30.7 51.2 -33.8 47.3 -35.3 44.0C-36.9 40.7 -36.4 35.1 -36.7 33.3M-36.7 33.3C-37.8 33.6 -41.1 35.6 -43.3 34.7C-45.6 33.8 -48.3 31.3 -50.0 28.0C-51.7 24.7 -53.2 18.7 -53.3 14.7C-53.4 10.7 -51.1 5.8 -50.7 4.0M-50.7 4.0C-51.3 2.9 -54.0 0.2 -54.7 -2.7C-55.3 -5.6 -55.4 -10.4 -54.7 -13.3C-53.9 -16.2 -52.1 -18.4 -50.0 -20.0C-47.9 -21.6 -43.3 -22.2 -42.0 -22.7M54.7 20.7C55.8 20.0 59.4 18.5 61.3 16.7C63.3 14.8 64.6 11.4 66.3 9.6C67.9 7.8 69.9 6.5 71.1 5.6C72.3 4.7 73.1 4.3 73.5 4.0"/></g>
<g transform="translate(509.9 333.6)"><ellipse rx="22" ry="12.7" transform="rotate(3)"/><path d="M-10.7 -12.0C-10.9 -14.2 -11.6 -21.1 -12.0 -25.3C-12.4 -29.6 -13.1 -35.3 -13.3 -37.3M3.3 -12.3C3.4 -14.1 3.2 -19.8 3.6 -23.3C4.0 -26.8 4.9 -30.8 6.0 -33.3C7.1 -35.9 9.3 -37.8 10.0 -38.7M15.3 -8.7C17.1 -10.2 22.7 -15.5 26.0 -18.0C29.3 -20.5 32.2 -22.1 35.3 -23.7C38.4 -25.4 43.1 -27.1 44.7 -27.7M22.0 -3.3C25.1 -3.8 34.3 -5.0 40.7 -6.0C47.0 -7.0 56.8 -8.6 60.0 -9.1M22.7 2.7C25.4 3.8 34.0 6.6 39.3 9.6C44.7 12.6 52.1 18.8 54.7 20.7M17.7 7.6C19.3 10.1 24.8 17.5 27.3 22.7C29.8 27.8 31.4 34.8 32.7 38.7C33.9 42.6 34.3 44.8 34.7 46.0M-4.7 12.0C-5.3 14.7 -7.7 22.7 -8.4 28.0C-9.1 33.3 -9.0 39.6 -8.7 44.0C-8.4 48.4 -7.0 52.9 -6.7 54.7M-16.1 7.9C-18.2 9.9 -25.6 16.6 -28.7 20.0C-31.7 23.4 -33.1 25.8 -34.4 28.0C-35.7 30.2 -36.3 32.4 -36.7 33.3M-21.3 0.0C-23.4 -0.2 -30.1 -1.2 -34.0 -0.9C-37.9 -0.7 -41.9 0.5 -44.7 1.3C-47.4 2.2 -49.7 3.6 -50.7 4.0M-42.0 -22.7C-40.0 -22.0 -34.1 -21.0 -30.0 -18.7C-25.9 -16.3 -19.4 -10.3 -17.3 -8.7M-13.3 -37.3C-14.8 -37.8 -18.6 -40.6 -22.0 -40.3C-25.4 -39.9 -30.7 -38.2 -34.0 -35.3C-37.3 -32.4 -40.7 -25.0 -42.0 -22.9M-13.3 -37.3C-12.8 -38.1 -11.9 -40.9 -10.0 -42.0C-8.1 -43.1 -4.7 -43.9 -2.0 -44.0C0.7 -44.1 4.0 -43.6 6.0 -42.7C8.0 -41.8 9.3 -39.3 10.0 -38.7M10.0 -38.7C11.6 -39.4 16.0 -42.6 19.3 -43.3C22.7 -44.1 26.7 -44.1 30.0 -43.3C33.3 -42.6 36.9 -40.6 39.3 -38.7C41.7 -36.8 43.5 -33.8 44.4 -32.0C45.3 -30.2 44.6 -28.4 44.7 -27.7M44.7 -27.7C46.0 -27.6 50.3 -28.0 52.7 -26.7C55.0 -25.4 57.4 -22.9 58.7 -20.0C59.9 -17.1 59.8 -10.9 60.0 -9.1M60.0 -9.1C60.8 -8.0 63.8 -5.1 64.7 -2.7C65.6 -0.3 65.8 2.4 65.3 5.3C64.9 8.2 63.8 12.1 62.0 14.7C60.2 17.2 55.9 19.7 54.7 20.7M54.7 20.7C55.1 21.9 57.3 25.0 57.3 28.0C57.3 31.0 56.6 35.7 54.7 38.7C52.8 41.7 49.3 44.8 46.0 46.0C42.7 47.2 36.6 46.0 34.7 46.0M34.7 46.0C33.9 47.2 32.6 51.2 30.0 53.3C27.4 55.4 23.3 57.6 19.3 58.7C15.3 59.8 9.6 60.0 6.0 60.0C2.4 60.0 0.1 59.6 -2.0 58.7C-4.1 57.8 -5.9 55.3 -6.7 54.7M-6.7 54.7C-8.1 55.0 -11.9 56.9 -15.3 56.7C-18.8 56.4 -24.0 55.4 -27.3 53.3C-30.7 51.2 -33.8 47.3 -35.3 44.0C-36.9 40.7 -36.4 35.1 -36.7 33.3M-36.7 33.3C-37.8 33.6 -41.1 35.6 -43.3 34.7C-45.6 33.8 -48.3 31.3 -50.0 28.0C-51.7 24.7 -53.2 18.7 -53.3 14.7C-53.4 10.7 -51.1 5.8 -50.7 4.0M-50.7 4.0C-51.3 2.9 -54.0 0.2 -54.7 -2.7C-55.3 -5.6 -55.4 -10.4 -54.7 -13.3C-53.9 -16.2 -52.1 -18.4 -50.0 -20.0C-47.9 -21.6 -43.3 -22.2 -42.0 -22.7M54.7 20.7C55.8 20.0 59.4 18.5 61.3 16.7C63.3 14.8 64.6 11.4 66.3 9.6C67.9 7.8 69.9 6.5 71.1 5.6C72.3 4.7 73.1 4.3 73.5 4.0"/></g>
<g transform="translate(-48.5 437.7)"><ellipse rx="22" ry="12.7" transform="rotate(3)"/><path d="M-10.7 -12.0C-10.9 -14.2 -11.6 -21.1 -12.0 -25.3C-12.4 -29.6 -13.1 -35.3 -13.3 -37.3M3.3 -12.3C3.4 -14.1 3.2 -19.8 3.6 -23.3C4.0 -26.8 4.9 -30.8 6.0 -33.3C7.1 -35.9 9.3 -37.8 10.0 -38.7M15.3 -8.7C17.1 -10.2 22.7 -15.5 26.0 -18.0C29.3 -20.5 32.2 -22.1 35.3 -23.7C38.4 -25.4 43.1 -27.1 44.7 -27.7M22.0 -3.3C25.1 -3.8 34.3 -5.0 40.7 -6.0C47.0 -7.0 56.8 -8.6 60.0 -9.1M22.7 2.7C25.4 3.8 34.0 6.6 39.3 9.6C44.7 12.6 52.1 18.8 54.7 20.7M17.7 7.6C19.3 10.1 24.8 17.5 27.3 22.7C29.8 27.8 31.4 34.8 32.7 38.7C33.9 42.6 34.3 44.8 34.7 46.0M-4.7 12.0C-5.3 14.7 -7.7 22.7 -8.4 28.0C-9.1 33.3 -9.0 39.6 -8.7 44.0C-8.4 48.4 -7.0 52.9 -6.7 54.7M-16.1 7.9C-18.2 9.9 -25.6 16.6 -28.7 20.0C-31.7 23.4 -33.1 25.8 -34.4 28.0C-35.7 30.2 -36.3 32.4 -36.7 33.3M-21.3 0.0C-23.4 -0.2 -30.1 -1.2 -34.0 -0.9C-37.9 -0.7 -41.9 0.5 -44.7 1.3C-47.4 2.2 -49.7 3.6 -50.7 4.0M-42.0 -22.7C-40.0 -22.0 -34.1 -21.0 -30.0 -18.7C-25.9 -16.3 -19.4 -10.3 -17.3 -8.7M-13.3 -37.3C-14.8 -37.8 -18.6 -40.6 -22.0 -40.3C-25.4 -39.9 -30.7 -38.2 -34.0 -35.3C-37.3 -32.4 -40.7 -25.0 -42.0 -22.9M-13.3 -37.3C-12.8 -38.1 -11.9 -40.9 -10.0 -42.0C-8.1 -43.1 -4.7 -43.9 -2.0 -44.0C0.7 -44.1 4.0 -43.6 6.0 -42.7C8.0 -41.8 9.3 -39.3 10.0 -38.7M10.0 -38.7C11.6 -39.4 16.0 -42.6 19.3 -43.3C22.7 -44.1 26.7 -44.1 30.0 -43.3C33.3 -42.6 36.9 -40.6 39.3 -38.7C41.7 -36.8 43.5 -33.8 44.4 -32.0C45.3 -30.2 44.6 -28.4 44.7 -27.7M44.7 -27.7C46.0 -27.6 50.3 -28.0 52.7 -26.7C55.0 -25.4 57.4 -22.9 58.7 -20.0C59.9 -17.1 59.8 -10.9 60.0 -9.1M60.0 -9.1C60.8 -8.0 63.8 -5.1 64.7 -2.7C65.6 -0.3 65.8 2.4 65.3 5.3C64.9 8.2 63.8 12.1 62.0 14.7C60.2 17.2 55.9 19.7 54.7 20.7M54.7 20.7C55.1 21.9 57.3 25.0 57.3 28.0C57.3 31.0 56.6 35.7 54.7 38.7C52.8 41.7 49.3 44.8 46.0 46.0C42.7 47.2 36.6 46.0 34.7 46.0M34.7 46.0C33.9 47.2 32.6 51.2 30.0 53.3C27.4 55.4 23.3 57.6 19.3 58.7C15.3 59.8 9.6 60.0 6.0 60.0C2.4 60.0 0.1 59.6 -2.0 58.7C-4.1 57.8 -5.9 55.3 -6.7 54.7M-6.7 54.7C-8.1 55.0 -11.9 56.9 -15.3 56.7C-18.8 56.4 -24.0 55.4 -27.3 53.3C-30.7 51.2 -33.8 47.3 -35.3 44.0C-36.9 40.7 -36.4 35.1 -36.7 33.3M-36.7 33.3C-37.8 33.6 -41.1 35.6 -43.3 34.7C-45.6 33.8 -48.3 31.3 -50.0 28.0C-51.7 24.7 -53.2 18.7 -53.3 14.7C-53.4 10.7 -51.1 5.8 -50.7 4.0M-50.7 4.0C-51.3 2.9 -54.0 0.2 -54.7 -2.7C-55.3 -5.6 -55.4 -10.4 -54.7 -13.3C-53.9 -16.2 -52.1 -18.4 -50.0 -20.0C-47.9 -21.6 -43.3 -22.2 -42.0 -22.7M54.7 20.7C55.8 20.0 59.4 18.5 61.3 16.7C63.3 14.8 64.6 11.4 66.3 9.6C67.9 7.8 69.9 6.5 71.1 5.6C72.3 4.7 73.1 4.3 73.5 4.0"/></g>
<g transform="translate(75.6 437.7)"><ellipse rx="22" ry="12.7" transform="rotate(3)"/><path d="M-10.7 -12.0C-10.9 -14.2 -11.6 -21.1 -12.0 -25.3C-12.4 -29.6 -13.1 -35.3 -13.3 -37.3M3.3 -12.3C3.4 -14.1 3.2 -19.8 3.6 -23.3C4.0 -26.8 4.9 -30.8 6.0 -33.3C7.1 -35.9 9.3 -37.8 10.0 -38.7M15.3 -8.7C17.1 -10.2 22.7 -15.5 26.0 -18.0C29.3 -20.5 32.2 -22.1 35.3 -23.7C38.4 -25.4 43.1 -27.1 44.7 -27.7M22.0 -3.3C25.1 -3.8 34.3 -5.0 40.7 -6.0C47.0 -7.0 56.8 -8.6 60.0 -9.1M22.7 2.7C25.4 3.8 34.0 6.6 39.3 9.6C44.7 12.6 52.1 18.8 54.7 20.7M17.7 7.6C19.3 10.1 24.8 17.5 27.3 22.7C29.8 27.8 31.4 34.8 32.7 38.7C33.9 42.6 34.3 44.8 34.7 46.0M-4.7 12.0C-5.3 14.7 -7.7 22.7 -8.4 28.0C-9.1 33.3 -9.0 39.6 -8.7 44.0C-8.4 48.4 -7.0 52.9 -6.7 54.7M-16.1 7.9C-18.2 9.9 -25.6 16.6 -28.7 20.0C-31.7 23.4 -33.1 25.8 -34.4 28.0C-35.7 30.2 -36.3 32.4 -36.7 33.3M-21.3 0.0C-23.4 -0.2 -30.1 -1.2 -34.0 -0.9C-37.9 -0.7 -41.9 0.5 -44.7 1.3C-47.4 2.2 -49.7 3.6 -50.7 4.0M-42.0 -22.7C-40.0 -22.0 -34.1 -21.0 -30.0 -18.7C-25.9 -16.3 -19.4 -10.3 -17.3 -8.7M-13.3 -37.3C-14.8 -37.8 -18.6 -40.6 -22.0 -40.3C-25.4 -39.9 -30.7 -38.2 -34.0 -35.3C-37.3 -32.4 -40.7 -25.0 -42.0 -22.9M-13.3 -37.3C-12.8 -38.1 -11.9 -40.9 -10.0 -42.0C-8.1 -43.1 -4.7 -43.9 -2.0 -44.0C0.7 -44.1 4.0 -43.6 6.0 -42.7C8.0 -41.8 9.3 -39.3 10.0 -38.7M10.0 -38.7C11.6 -39.4 16.0 -42.6 19.3 -43.3C22.7 -44.1 26.7 -44.1 30.0 -43.3C33.3 -42.6 36.9 -40.6 39.3 -38.7C41.7 -36.8 43.5 -33.8 44.4 -32.0C45.3 -30.2 44.6 -28.4 44.7 -27.7M44.7 -27.7C46.0 -27.6 50.3 -28.0 52.7 -26.7C55.0 -25.4 57.4 -22.9 58.7 -20.0C59.9 -17.1 59.8 -10.9 60.0 -9.1M60.0 -9.1C60.8 -8.0 63.8 -5.1 64.7 -2.7C65.6 -0.3 65.8 2.4 65.3 5.3C64.9 8.2 63.8 12.1 62.0 14.7C60.2 17.2 55.9 19.7 54.7 20.7M54.7 20.7C55.1 21.9 57.3 25.0 57.3 28.0C57.3 31.0 56.6 35.7 54.7 38.7C52.8 41.7 49.3 44.8 46.0 46.0C42.7 47.2 36.6 46.0 34.7 46.0M34.7 46.0C33.9 47.2 32.6 51.2 30.0 53.3C27.4 55.4 23.3 57.6 19.3 58.7C15.3 59.8 9.6 60.0 6.0 60.0C2.4 60.0 0.1 59.6 -2.0 58.7C-4.1 57.8 -5.9 55.3 -6.7 54.7M-6.7 54.7C-8.1 55.0 -11.9 56.9 -15.3 56.7C-18.8 56.4 -24.0 55.4 -27.3 53.3C-30.7 51.2 -33.8 47.3 -35.3 44.0C-36.9 40.7 -36.4 35.1 -36.7 33.3M-36.7 33.3C-37.8 33.6 -41.1 35.6 -43.3 34.7C-45.6 33.8 -48.3 31.3 -50.0 28.0C-51.7 24.7 -53.2 18.7 -53.3 14.7C-53.4 10.7 -51.1 5.8 -50.7 4.0M-50.7 4.0C-51.3 2.9 -54.0 0.2 -54.7 -2.7C-55.3 -5.6 -55.4 -10.4 -54.7 -13.3C-53.9 -16.2 -52.1 -18.4 -50.0 -20.0C-47.9 -21.6 -43.3 -22.2 -42.0 -22.7M54.7 20.7C55.8 20.0 59.4 18.5 61.3 16.7C63.3 14.8 64.6 11.4 66.3 9.6C67.9 7.8 69.9 6.5 71.1 5.6C72.3 4.7 73.1 4.3 73.5 4.0"/></g>
<g transform="translate(199.7 437.7)"><ellipse rx="22" ry="12.7" transform="rotate(3)"/><path d="M-10.7 -12.0C-10.9 -14.2 -11.6 -21.1 -12.0 -25.3C-12.4 -29.6 -13.1 -35.3 -13.3 -37.3M3.3 -12.3C3.4 -14.1 3.2 -19.8 3.6 -23.3C4.0 -26.8 4.9 -30.8 6.0 -33.3C7.1 -35.9 9.3 -37.8 10.0 -38.7M15.3 -8.7C17.1 -10.2 22.7 -15.5 26.0 -18.0C29.3 -20.5 32.2 -22.1 35.3 -23.7C38.4 -25.4 43.1 -27.1 44.7 -27.7M22.0 -3.3C25.1 -3.8 34.3 -5.0 40.7 -6.0C47.0 -7.0 56.8 -8.6 60.0 -9.1M22.7 2.7C25.4 3.8 34.0 6.6 39.3 9.6C44.7 12.6 52.1 18.8 54.7 20.7M17.7 7.6C19.3 10.1 24.8 17.5 27.3 22.7C29.8 27.8 31.4 34.8 32.7 38.7C33.9 42.6 34.3 44.8 34.7 46.0M-4.7 12.0C-5.3 14.7 -7.7 22.7 -8.4 28.0C-9.1 33.3 -9.0 39.6 -8.7 44.0C-8.4 48.4 -7.0 52.9 -6.7 54.7M-16.1 7.9C-18.2 9.9 -25.6 16.6 -28.7 20.0C-31.7 23.4 -33.1 25.8 -34.4 28.0C-35.7 30.2 -36.3 32.4 -36.7 33.3M-21.3 0.0C-23.4 -0.2 -30.1 -1.2 -34.0 -0.9C-37.9 -0.7 -41.9 0.5 -44.7 1.3C-47.4 2.2 -49.7 3.6 -50.7 4.0M-42.0 -22.7C-40.0 -22.0 -34.1 -21.0 -30.0 -18.7C-25.9 -16.3 -19.4 -10.3 -17.3 -8.7M-13.3 -37.3C-14.8 -37.8 -18.6 -40.6 -22.0 -40.3C-25.4 -39.9 -30.7 -38.2 -34.0 -35.3C-37.3 -32.4 -40.7 -25.0 -42.0 -22.9M-13.3 -37.3C-12.8 -38.1 -11.9 -40.9 -10.0 -42.0C-8.1 -43.1 -4.7 -43.9 -2.0 -44.0C0.7 -44.1 4.0 -43.6 6.0 -42.7C8.0 -41.8 9.3 -39.3 10.0 -38.7M10.0 -38.7C11.6 -39.4 16.0 -42.6 19.3 -43.3C22.7 -44.1 26.7 -44.1 30.0 -43.3C33.3 -42.6 36.9 -40.6 39.3 -38.7C41.7 -36.8 43.5 -33.8 44.4 -32.0C45.3 -30.2 44.6 -28.4 44.7 -27.7M44.7 -27.7C46.0 -27.6 50.3 -28.0 52.7 -26.7C55.0 -25.4 57.4 -22.9 58.7 -20.0C59.9 -17.1 59.8 -10.9 60.0 -9.1M60.0 -9.1C60.8 -8.0 63.8 -5.1 64.7 -2.7C65.6 -0.3 65.8 2.4 65.3 5.3C64.9 8.2 63.8 12.1 62.0 14.7C60.2 17.2 55.9 19.7 54.7 20.7M54.7 20.7C55.1 21.9 57.3 25.0 57.3 28.0C57.3 31.0 56.6 35.7 54.7 38.7C52.8 41.7 49.3 44.8 46.0 46.0C42.7 47.2 36.6 46.0 34.7 46.0M34.7 46.0C33.9 47.2 32.6 51.2 30.0 53.3C27.4 55.4 23.3 57.6 19.3 58.7C15.3 59.8 9.6 60.0 6.0 60.0C2.4 60.0 0.1 59.6 -2.0 58.7C-4.1 57.8 -5.9 55.3 -6.7 54.7M-6.7 54.7C-8.1 55.0 -11.9 56.9 -15.3 56.7C-18.8 56.4 -24.0 55.4 -27.3 53.3C-30.7 51.2 -33.8 47.3 -35.3 44.0C-36.9 40.7 -36.4 35.1 -36.7 33.3M-36.7 33.3C-37.8 33.6 -41.1 35.6 -43.3 34.7C-45.6 33.8 -48.3 31.3 -50.0 28.0C-51.7 24.7 -53.2 18.7 -53.3 14.7C-53.4 10.7 -51.1 5.8 -50.7 4.0M-50.7 4.0C-51.3 2.9 -54.0 0.2 -54.7 -2.7C-55.3 -5.6 -55.4 -10.4 -54.7 -13.3C-53.9 -16.2 -52.1 -18.4 -50.0 -20.0C-47.9 -21.6 -43.3 -22.2 -42.0 -22.7M54.7 20.7C55.8 20.0 59.4 18.5 61.3 16.7C63.3 14.8 64.6 11.4 66.3 9.6C67.9 7.8 69.9 6.5 71.1 5.6C72.3 4.7 73.1 4.3 73.5 4.0"/></g>
<g transform="translate(323.8 437.7)"><ellipse rx="22" ry="12.7" transform="rotate(3)"/><path d="M-10.7 -12.0C-10.9 -14.2 -11.6 -21.1 -12.0 -25.3C-12.4 -29.6 -13.1 -35.3 -13.3 -37.3M3.3 -12.3C3.4 -14.1 3.2 -19.8 3.6 -23.3C4.0 -26.8 4.9 -30.8 6.0 -33.3C7.1 -35.9 9.3 -37.8 10.0 -38.7M15.3 -8.7C17.1 -10.2 22.7 -15.5 26.0 -18.0C29.3 -20.5 32.2 -22.1 35.3 -23.7C38.4 -25.4 43.1 -27.1 44.7 -27.7M22.0 -3.3C25.1 -3.8 34.3 -5.0 40.7 -6.0C47.0 -7.0 56.8 -8.6 60.0 -9.1M22.7 2.7C25.4 3.8 34.0 6.6 39.3 9.6C44.7 12.6 52.1 18.8 54.7 20.7M17.7 7.6C19.3 10.1 24.8 17.5 27.3 22.7C29.8 27.8 31.4 34.8 32.7 38.7C33.9 42.6 34.3 44.8 34.7 46.0M-4.7 12.0C-5.3 14.7 -7.7 22.7 -8.4 28.0C-9.1 33.3 -9.0 39.6 -8.7 44.0C-8.4 48.4 -7.0 52.9 -6.7 54.7M-16.1 7.9C-18.2 9.9 -25.6 16.6 -28.7 20.0C-31.7 23.4 -33.1 25.8 -34.4 28.0C-35.7 30.2 -36.3 32.4 -36.7 33.3M-21.3 0.0C-23.4 -0.2 -30.1 -1.2 -34.0 -0.9C-37.9 -0.7 -41.9 0.5 -44.7 1.3C-47.4 2.2 -49.7 3.6 -50.7 4.0M-42.0 -22.7C-40.0 -22.0 -34.1 -21.0 -30.0 -18.7C-25.9 -16.3 -19.4 -10.3 -17.3 -8.7M-13.3 -37.3C-14.8 -37.8 -18.6 -40.6 -22.0 -40.3C-25.4 -39.9 -30.7 -38.2 -34.0 -35.3C-37.3 -32.4 -40.7 -25.0 -42.0 -22.9M-13.3 -37.3C-12.8 -38.1 -11.9 -40.9 -10.0 -42.0C-8.1 -43.1 -4.7 -43.9 -2.0 -44.0C0.7 -44.1 4.0 -43.6 6.0 -42.7C8.0 -41.8 9.3 -39.3 10.0 -38.7M10.0 -38.7C11.6 -39.4 16.0 -42.6 19.3 -43.3C22.7 -44.1 26.7 -44.1 30.0 -43.3C33.3 -42.6 36.9 -40.6 39.3 -38.7C41.7 -36.8 43.5 -33.8 44.4 -32.0C45.3 -30.2 44.6 -28.4 44.7 -27.7M44.7 -27.7C46.0 -27.6 50.3 -28.0 52.7 -26.7C55.0 -25.4 57.4 -22.9 58.7 -20.0C59.9 -17.1 59.8 -10.9 60.0 -9.1M60.0 -9.1C60.8 -8.0 63.8 -5.1 64.7 -2.7C65.6 -0.3 65.8 2.4 65.3 5.3C64.9 8.2 63.8 12.1 62.0 14.7C60.2 17.2 55.9 19.7 54.7 20.7M54.7 20.7C55.1 21.9 57.3 25.0 57.3 28.0C57.3 31.0 56.6 35.7 54.7 38.7C52.8 41.7 49.3 44.8 46.0 46.0C42.7 47.2 36.6 46.0 34.7 46.0M34.7 46.0C33.9 47.2 32.6 51.2 30.0 53.3C27.4 55.4 23.3 57.6 19.3 58.7C15.3 59.8 9.6 60.0 6.0 60.0C2.4 60.0 0.1 59.6 -2.0 58.7C-4.1 57.8 -5.9 55.3 -6.7 54.7M-6.7 54.7C-8.1 55.0 -11.9 56.9 -15.3 56.7C-18.8 56.4 -24.0 55.4 -27.3 53.3C-30.7 51.2 -33.8 47.3 -35.3 44.0C-36.9 40.7 -36.4 35.1 -36.7 33.3M-36.7 33.3C-37.8 33.6 -41.1 35.6 -43.3 34.7C-45.6 33.8 -48.3 31.3 -50.0 28.0C-51.7 24.7 -53.2 18.7 -53.3 14.7C-53.4 10.7 -51.1 5.8 -50.7 4.0M-50.7 4.0C-51.3 2.9 -54.0 0.2 -54.7 -2.7C-55.3 -5.6 -55.4 -10.4 -54.7 -13.3C-53.9 -16.2 -52.1 -18.4 -50.0 -20.0C-47.9 -21.6 -43.3 -22.2 -42.0 -22.7M54.7 20.7C55.8 20.0 59.4 18.5 61.3 16.7C63.3 14.8 64.6 11.4 66.3 9.6C67.9 7.8 69.9 6.5 71.1 5.6C72.3 4.7 73.1 4.3 73.5 4.0"/></g>
<g transform="translate(447.9 437.7)"><ellipse rx="22" ry="12.7" transform="rotate(3)"/><path d="M-10.7 -12.0C-10.9 -14.2 -11.6 -21.1 -12.0 -25.3C-12.4 -29.6 -13.1 -35.3 -13.3 -37.3M3.3 -12.3C3.4 -14.1 3.2 -19.8 3.6 -23.3C4.0 -26.8 4.9 -30.8 6.0 -33.3C7.1 -35.9 9.3 -37.8 10.0 -38.7M15.3 -8.7C17.1 -10.2 22.7 -15.5 26.0 -18.0C29.3 -20.5 32.2 -22.1 35.3 -23.7C38.4 -25.4 43.1 -27.1 44.7 -27.7M22.0 -3.3C25.1 -3.8 34.3 -5.0 40.7 -6.0C47.0 -7.0 56.8 -8.6 60.0 -9.1M22.7 2.7C25.4 3.8 34.0 6.6 39.3 9.6C44.7 12.6 52.1 18.8 54.7 20.7M17.7 7.6C19.3 10.1 24.8 17.5 27.3 22.7C29.8 27.8 31.4 34.8 32.7 38.7C33.9 42.6 34.3 44.8 34.7 46.0M-4.7 12.0C-5.3 14.7 -7.7 22.7 -8.4 28.0C-9.1 33.3 -9.0 39.6 -8.7 44.0C-8.4 48.4 -7.0 52.9 -6.7 54.7M-16.1 7.9C-18.2 9.9 -25.6 16.6 -28.7 20.0C-31.7 23.4 -33.1 25.8 -34.4 28.0C-35.7 30.2 -36.3 32.4 -36.7 33.3M-21.3 0.0C-23.4 -0.2 -30.1 -1.2 -34.0 -0.9C-37.9 -0.7 -41.9 0.5 -44.7 1.3C-47.4 2.2 -49.7 3.6 -50.7 4.0M-42.0 -22.7C-40.0 -22.0 -34.1 -21.0 -30.0 -18.7C-25.9 -16.3 -19.4 -10.3 -17.3 -8.7M-13.3 -37.3C-14.8 -37.8 -18.6 -40.6 -22.0 -40.3C-25.4 -39.9 -30.7 -38.2 -34.0 -35.3C-37.3 -32.4 -40.7 -25.0 -42.0 -22.9M-13.3 -37.3C-12.8 -38.1 -11.9 -40.9 -10.0 -42.0C-8.1 -43.1 -4.7 -43.9 -2.0 -44.0C0.7 -44.1 4.0 -43.6 6.0 -42.7C8.0 -41.8 9.3 -39.3 10.0 -38.7M10.0 -38.7C11.6 -39.4 16.0 -42.6 19.3 -43.3C22.7 -44.1 26.7 -44.1 30.0 -43.3C33.3 -42.6 36.9 -40.6 39.3 -38.7C41.7 -36.8 43.5 -33.8 44.4 -32.0C45.3 -30.2 44.6 -28.4 44.7 -27.7M44.7 -27.7C46.0 -27.6 50.3 -28.0 52.7 -26.7C55.0 -25.4 57.4 -22.9 58.7 -20.0C59.9 -17.1 59.8 -10.9 60.0 -9.1M60.0 -9.1C60.8 -8.0 63.8 -5.1 64.7 -2.7C65.6 -0.3 65.8 2.4 65.3 5.3C64.9 8.2 63.8 12.1 62.0 14.7C60.2 17.2 55.9 19.7 54.7 20.7M54.7 20.7C55.1 21.9 57.3 25.0 57.3 28.0C57.3 31.0 56.6 35.7 54.7 38.7C52.8 41.7 49.3 44.8 46.0 46.0C42.7 47.2 36.6 46.0 34.7 46.0M34.7 46.0C33.9 47.2 32.6 51.2 30.0 53.3C27.4 55.4 23.3 57.6 19.3 58.7C15.3 59.8 9.6 60.0 6.0 60.0C2.4 60.0 0.1 59.6 -2.0 58.7C-4.1 57.8 -5.9 55.3 -6.7 54.7M-6.7 54.7C-8.1 55.0 -11.9 56.9 -15.3 56.7C-18.8 56.4 -24.0 55.4 -27.3 53.3C-30.7 51.2 -33.8 47.3 -35.3 44.0C-36.9 40.7 -36.4 35.1 -36.7 33.3M-36.7 33.3C-37.8 33.6 -41.1 35.6 -43.3 34.7C-45.6 33.8 -48.3 31.3 -50.0 28.0C-51.7 24.7 -53.2 18.7 -53.3 14.7C-53.4 10.7 -51.1 5.8 -50.7 4.0M-50.7 4.0C-51.3 2.9 -54.0 0.2 -54.7 -2.7C-55.3 -5.6 -55.4 -10.4 -54.7 -13.3C-53.9 -16.2 -52.1 -18.4 -50.0 -20.0C-47.9 -21.6 -43.3 -22.2 -42.0 -22.7M54.7 20.7C55.8 20.0 59.4 18.5 61.3 16.7C63.3 14.8 64.6 11.4 66.3 9.6C67.9 7.8 69.9 6.5 71.1 5.6C72.3 4.7 73.1 4.3 73.5 4.0"/></g>
<g transform="translate(-110.6 541.8)"><ellipse rx="22" ry="12.7" transform="rotate(3)"/><path d="M-10.7 -12.0C-10.9 -14.2 -11.6 -21.1 -12.0 -25.3C-12.4 -29.6 -13.1 -35.3 -13.3 -37.3M3.3 -12.3C3.4 -14.1 3.2 -19.8 3.6 -23.3C4.0 -26.8 4.9 -30.8 6.0 -33.3C7.1 -35.9 9.3 -37.8 10.0 -38.7M15.3 -8.7C17.1 -10.2 22.7 -15.5 26.0 -18.0C29.3 -20.5 32.2 -22.1 35.3 -23.7C38.4 -25.4 43.1 -27.1 44.7 -27.7M22.0 -3.3C25.1 -3.8 34.3 -5.0 40.7 -6.0C47.0 -7.0 56.8 -8.6 60.0 -9.1M22.7 2.7C25.4 3.8 34.0 6.6 39.3 9.6C44.7 12.6 52.1 18.8 54.7 20.7M17.7 7.6C19.3 10.1 24.8 17.5 27.3 22.7C29.8 27.8 31.4 34.8 32.7 38.7C33.9 42.6 34.3 44.8 34.7 46.0M-4.7 12.0C-5.3 14.7 -7.7 22.7 -8.4 28.0C-9.1 33.3 -9.0 39.6 -8.7 44.0C-8.4 48.4 -7.0 52.9 -6.7 54.7M-16.1 7.9C-18.2 9.9 -25.6 16.6 -28.7 20.0C-31.7 23.4 -33.1 25.8 -34.4 28.0C-35.7 30.2 -36.3 32.4 -36.7 33.3M-21.3 0.0C-23.4 -0.2 -30.1 -1.2 -34.0 -0.9C-37.9 -0.7 -41.9 0.5 -44.7 1.3C-47.4 2.2 -49.7 3.6 -50.7 4.0M-42.0 -22.7C-40.0 -22.0 -34.1 -21.0 -30.0 -18.7C-25.9 -16.3 -19.4 -10.3 -17.3 -8.7M-13.3 -37.3C-14.8 -37.8 -18.6 -40.6 -22.0 -40.3C-25.4 -39.9 -30.7 -38.2 -34.0 -35.3C-37.3 -32.4 -40.7 -25.0 -42.0 -22.9M-13.3 -37.3C-12.8 -38.1 -11.9 -40.9 -10.0 -42.0C-8.1 -43.1 -4.7 -43.9 -2.0 -44.0C0.7 -44.1 4.0 -43.6 6.0 -42.7C8.0 -41.8 9.3 -39.3 10.0 -38.7M10.0 -38.7C11.6 -39.4 16.0 -42.6 19.3 -43.3C22.7 -44.1 26.7 -44.1 30.0 -43.3C33.3 -42.6 36.9 -40.6 39.3 -38.7C41.7 -36.8 43.5 -33.8 44.4 -32.0C45.3 -30.2 44.6 -28.4 44.7 -27.7M44.7 -27.7C46.0 -27.6 50.3 -28.0 52.7 -26.7C55.0 -25.4 57.4 -22.9 58.7 -20.0C59.9 -17.1 59.8 -10.9 60.0 -9.1M60.0 -9.1C60.8 -8.0 63.8 -5.1 64.7 -2.7C65.6 -0.3 65.8 2.4 65.3 5.3C64.9 8.2 63.8 12.1 62.0 14.7C60.2 17.2 55.9 19.7 54.7 20.7M54.7 20.7C55.1 21.9 57.3 25.0 57.3 28.0C57.3 31.0 56.6 35.7 54.7 38.7C52.8 41.7 49.3 44.8 46.0 46.0C42.7 47.2 36.6 46.0 34.7 46.0M34.7 46.0C33.9 47.2 32.6 51.2 30.0 53.3C27.4 55.4 23.3 57.6 19.3 58.7C15.3 59.8 9.6 60.0 6.0 60.0C2.4 60.0 0.1 59.6 -2.0 58.7C-4.1 57.8 -5.9 55.3 -6.7 54.7M-6.7 54.7C-8.1 55.0 -11.9 56.9 -15.3 56.7C-18.8 56.4 -24.0 55.4 -27.3 53.3C-30.7 51.2 -33.8 47.3 -35.3 44.0C-36.9 40.7 -36.4 35.1 -36.7 33.3M-36.7 33.3C-37.8 33.6 -41.1 35.6 -43.3 34.7C-45.6 33.8 -48.3 31.3 -50.0 28.0C-51.7 24.7 -53.2 18.7 -53.3 14.7C-53.4 10.7 -51.1 5.8 -50.7 4.0M-50.7 4.0C-51.3 2.9 -54.0 0.2 -54.7 -2.7C-55.3 -5.6 -55.4 -10.4 -54.7 -13.3C-53.9 -16.2 -52.1 -18.4 -50.0 -20.0C-47.9 -21.6 -43.3 -22.2 -42.0 -22.7M54.7 20.7C55.8 20.0 59.4 18.5 61.3 16.7C63.3 14.8 64.6 11.4 66.3 9.6C67.9 7.8 69.9 6.5 71.1 5.6C72.3 4.7 73.1 4.3 73.5 4.0"/></g>
<g transform="translate(13.5 541.8)"><ellipse rx="22" ry="12.7" transform="rotate(3)"/><path d="M-10.7 -12.0C-10.9 -14.2 -11.6 -21.1 -12.0 -25.3C-12.4 -29.6 -13.1 -35.3 -13.3 -37.3M3.3 -12.3C3.4 -14.1 3.2 -19.8 3.6 -23.3C4.0 -26.8 4.9 -30.8 6.0 -33.3C7.1 -35.9 9.3 -37.8 10.0 -38.7M15.3 -8.7C17.1 -10.2 22.7 -15.5 26.0 -18.0C29.3 -20.5 32.2 -22.1 35.3 -23.7C38.4 -25.4 43.1 -27.1 44.7 -27.7M22.0 -3.3C25.1 -3.8 34.3 -5.0 40.7 -6.0C47.0 -7.0 56.8 -8.6 60.0 -9.1M22.7 2.7C25.4 3.8 34.0 6.6 39.3 9.6C44.7 12.6 52.1 18.8 54.7 20.7M17.7 7.6C19.3 10.1 24.8 17.5 27.3 22.7C29.8 27.8 31.4 34.8 32.7 38.7C33.9 42.6 34.3 44.8 34.7 46.0M-4.7 12.0C-5.3 14.7 -7.7 22.7 -8.4 28.0C-9.1 33.3 -9.0 39.6 -8.7 44.0C-8.4 48.4 -7.0 52.9 -6.7 54.7M-16.1 7.9C-18.2 9.9 -25.6 16.6 -28.7 20.0C-31.7 23.4 -33.1 25.8 -34.4 28.0C-35.7 30.2 -36.3 32.4 -36.7 33.3M-21.3 0.0C-23.4 -0.2 -30.1 -1.2 -34.0 -0.9C-37.9 -0.7 -41.9 0.5 -44.7 1.3C-47.4 2.2 -49.7 3.6 -50.7 4.0M-42.0 -22.7C-40.0 -22.0 -34.1 -21.0 -30.0 -18.7C-25.9 -16.3 -19.4 -10.3 -17.3 -8.7M-13.3 -37.3C-14.8 -37.8 -18.6 -40.6 -22.0 -40.3C-25.4 -39.9 -30.7 -38.2 -34.0 -35.3C-37.3 -32.4 -40.7 -25.0 -42.0 -22.9M-13.3 -37.3C-12.8 -38.1 -11.9 -40.9 -10.0 -42.0C-8.1 -43.1 -4.7 -43.9 -2.0 -44.0C0.7 -44.1 4.0 -43.6 6.0 -42.7C8.0 -41.8 9.3 -39.3 10.0 -38.7M10.0 -38.7C11.6 -39.4 16.0 -42.6 19.3 -43.3C22.7 -44.1 26.7 -44.1 30.0 -43.3C33.3 -42.6 36.9 -40.6 39.3 -38.7C41.7 -36.8 43.5 -33.8 44.4 -32.0C45.3 -30.2 44.6 -28.4 44.7 -27.7M44.7 -27.7C46.0 -27.6 50.3 -28.0 52.7 -26.7C55.0 -25.4 57.4 -22.9 58.7 -20.0C59.9 -17.1 59.8 -10.9 60.0 -9.1M60.0 -9.1C60.8 -8.0 63.8 -5.1 64.7 -2.7C65.6 -0.3 65.8 2.4 65.3 5.3C64.9 8.2 63.8 12.1 62.0 14.7C60.2 17.2 55.9 19.7 54.7 20.7M54.7 20.7C55.1 21.9 57.3 25.0 57.3 28.0C57.3 31.0 56.6 35.7 54.7 38.7C52.8 41.7 49.3 44.8 46.0 46.0C42.7 47.2 36.6 46.0 34.7 46.0M34.7 46.0C33.9 47.2 32.6 51.2 30.0 53.3C27.4 55.4 23.3 57.6 19.3 58.7C15.3 59.8 9.6 60.0 6.0 60.0C2.4 60.0 0.1 59.6 -2.0 58.7C-4.1 57.8 -5.9 55.3 -6.7 54.7M-6.7 54.7C-8.1 55.0 -11.9 56.9 -15.3 56.7C-18.8 56.4 -24.0 55.4 -27.3 53.3C-30.7 51.2 -33.8 47.3 -35.3 44.0C-36.9 40.7 -36.4 35.1 -36.7 33.3M-36.7 33.3C-37.8 33.6 -41.1 35.6 -43.3 34.7C-45.6 33.8 -48.3 31.3 -50.0 28.0C-51.7 24.7 -53.2 18.7 -53.3 14.7C-53.4 10.7 -51.1 5.8 -50.7 4.0M-50.7 4.0C-51.3 2.9 -54.0 0.2 -54.7 -2.7C-55.3 -5.6 -55.4 -10.4 -54.7 -13.3C-53.9 -16.2 -52.1 -18.4 -50.0 -20.0C-47.9 -21.6 -43.3 -22.2 -42.0 -22.7M54.7 20.7C55.8 20.0 59.4 18.5 61.3 16.7C63.3 14.8 64.6 11.4 66.3 9.6C67.9 7.8 69.9 6.5 71.1 5.6C72.3 4.7 73.1 4.3 73.5 4.0"/></g>
<g transform="translate(137.6 541.8)"><ellipse rx="22" ry="12.7" transform="rotate(3)"/><path d="M-10.7 -12.0C-10.9 -14.2 -11.6 -21.1 -12.0 -25.3C-12.4 -29.6 -13.1 -35.3 -13.3 -37.3M3.3 -12.3C3.4 -14.1 3.2 -19.8 3.6 -23.3C4.0 -26.8 4.9 -30.8 6.0 -33.3C7.1 -35.9 9.3 -37.8 10.0 -38.7M15.3 -8.7C17.1 -10.2 22.7 -15.5 26.0 -18.0C29.3 -20.5 32.2 -22.1 35.3 -23.7C38.4 -25.4 43.1 -27.1 44.7 -27.7M22.0 -3.3C25.1 -3.8 34.3 -5.0 40.7 -6.0C47.0 -7.0 56.8 -8.6 60.0 -9.1M22.7 2.7C25.4 3.8 34.0 6.6 39.3 9.6C44.7 12.6 52.1 18.8 54.7 20.7M17.7 7.6C19.3 10.1 24.8 17.5 27.3 22.7C29.8 27.8 31.4 34.8 32.7 38.7C33.9 42.6 34.3 44.8 34.7 46.0M-4.7 12.0C-5.3 14.7 -7.7 22.7 -8.4 28.0C-9.1 33.3 -9.0 39.6 -8.7 44.0C-8.4 48.4 -7.0 52.9 -6.7 54.7M-16.1 7.9C-18.2 9.9 -25.6 16.6 -28.7 20.0C-31.7 23.4 -33.1 25.8 -34.4 28.0C-35.7 30.2 -36.3 32.4 -36.7 33.3M-21.3 0.0C-23.4 -0.2 -30.1 -1.2 -34.0 -0.9C-37.9 -0.7 -41.9 0.5 -44.7 1.3C-47.4 2.2 -49.7 3.6 -50.7 4.0M-42.0 -22.7C-40.0 -22.0 -34.1 -21.0 -30.0 -18.7C-25.9 -16.3 -19.4 -10.3 -17.3 -8.7M-13.3 -37.3C-14.8 -37.8 -18.6 -40.6 -22.0 -40.3C-25.4 -39.9 -30.7 -38.2 -34.0 -35.3C-37.3 -32.4 -40.7 -25.0 -42.0 -22.9M-13.3 -37.3C-12.8 -38.1 -11.9 -40.9 -10.0 -42.0C-8.1 -43.1 -4.7 -43.9 -2.0 -44.0C0.7 -44.1 4.0 -43.6 6.0 -42.7C8.0 -41.8 9.3 -39.3 10.0 -38.7M10.0 -38.7C11.6 -39.4 16.0 -42.6 19.3 -43.3C22.7 -44.1 26.7 -44.1 30.0 -43.3C33.3 -42.6 36.9 -40.6 39.3 -38.7C41.7 -36.8 43.5 -33.8 44.4 -32.0C45.3 -30.2 44.6 -28.4 44.7 -27.7M44.7 -27.7C46.0 -27.6 50.3 -28.0 52.7 -26.7C55.0 -25.4 57.4 -22.9 58.7 -20.0C59.9 -17.1 59.8 -10.9 60.0 -9.1M60.0 -9.1C60.8 -8.0 63.8 -5.1 64.7 -2.7C65.6 -0.3 65.8 2.4 65.3 5.3C64.9 8.2 63.8 12.1 62.0 14.7C60.2 17.2 55.9 19.7 54.7 20.7M54.7 20.7C55.1 21.9 57.3 25.0 57.3 28.0C57.3 31.0 56.6 35.7 54.7 38.7C52.8 41.7 49.3 44.8 46.0 46.0C42.7 47.2 36.6 46.0 34.7 46.0M34.7 46.0C33.9 47.2 32.6 51.2 30.0 53.3C27.4 55.4 23.3 57.6 19.3 58.7C15.3 59.8 9.6 60.0 6.0 60.0C2.4 60.0 0.1 59.6 -2.0 58.7C-4.1 57.8 -5.9 55.3 -6.7 54.7M-6.7 54.7C-8.1 55.0 -11.9 56.9 -15.3 56.7C-18.8 56.4 -24.0 55.4 -27.3 53.3C-30.7 51.2 -33.8 47.3 -35.3 44.0C-36.9 40.7 -36.4 35.1 -36.7 33.3M-36.7 33.3C-37.8 33.6 -41.1 35.6 -43.3 34.7C-45.6 33.8 -48.3 31.3 -50.0 28.0C-51.7 24.7 -53.2 18.7 -53.3 14.7C-53.4 10.7 -51.1 5.8 -50.7 4.0M-50.7 4.0C-51.3 2.9 -54.0 0.2 -54.7 -2.7C-55.3 -5.6 -55.4 -10.4 -54.7 -13.3C-53.9 -16.2 -52.1 -18.4 -50.0 -20.0C-47.9 -21.6 -43.3 -22.2 -42.0 -22.7M54.7 20.7C55.8 20.0 59.4 18.5 61.3 16.7C63.3 14.8 64.6 11.4 66.3 9.6C67.9 7.8 69.9 6.5 71.1 5.6C72.3 4.7 73.1 4.3 73.5 4.0"/></g>
<g transform="translate(261.8 541.8)"><ellipse rx="22" ry="12.7" transform="rotate(3)"/><path d="M-10.7 -12.0C-10.9 -14.2 -11.6 -21.1 -12.0 -25.3C-12.4 -29.6 -13.1 -35.3 -13.3 -37.3M3.3 -12.3C3.4 -14.1 3.2 -19.8 3.6 -23.3C4.0 -26.8 4.9 -30.8 6.0 -33.3C7.1 -35.9 9.3 -37.8 10.0 -38.7M15.3 -8.7C17.1 -10.2 22.7 -15.5 26.0 -18.0C29.3 -20.5 32.2 -22.1 35.3 -23.7C38.4 -25.4 43.1 -27.1 44.7 -27.7M22.0 -3.3C25.1 -3.8 34.3 -5.0 40.7 -6.0C47.0 -7.0 56.8 -8.6 60.0 -9.1M22.7 2.7C25.4 3.8 34.0 6.6 39.3 9.6C44.7 12.6 52.1 18.8 54.7 20.7M17.7 7.6C19.3 10.1 24.8 17.5 27.3 22.7C29.8 27.8 31.4 34.8 32.7 38.7C33.9 42.6 34.3 44.8 34.7 46.0M-4.7 12.0C-5.3 14.7 -7.7 22.7 -8.4 28.0C-9.1 33.3 -9.0 39.6 -8.7 44.0C-8.4 48.4 -7.0 52.9 -6.7 54.7M-16.1 7.9C-18.2 9.9 -25.6 16.6 -28.7 20.0C-31.7 23.4 -33.1 25.8 -34.4 28.0C-35.7 30.2 -36.3 32.4 -36.7 33.3M-21.3 0.0C-23.4 -0.2 -30.1 -1.2 -34.0 -0.9C-37.9 -0.7 -41.9 0.5 -44.7 1.3C-47.4 2.2 -49.7 3.6 -50.7 4.0M-42.0 -22.7C-40.0 -22.0 -34.1 -21.0 -30.0 -18.7C-25.9 -16.3 -19.4 -10.3 -17.3 -8.7M-13.3 -37.3C-14.8 -37.8 -18.6 -40.6 -22.0 -40.3C-25.4 -39.9 -30.7 -38.2 -34.0 -35.3C-37.3 -32.4 -40.7 -25.0 -42.0 -22.9M-13.3 -37.3C-12.8 -38.1 -11.9 -40.9 -10.0 -42.0C-8.1 -43.1 -4.7 -43.9 -2.0 -44.0C0.7 -44.1 4.0 -43.6 6.0 -42.7C8.0 -41.8 9.3 -39.3 10.0 -38.7M10.0 -38.7C11.6 -39.4 16.0 -42.6 19.3 -43.3C22.7 -44.1 26.7 -44.1 30.0 -43.3C33.3 -42.6 36.9 -40.6 39.3 -38.7C41.7 -36.8 43.5 -33.8 44.4 -32.0C45.3 -30.2 44.6 -28.4 44.7 -27.7M44.7 -27.7C46.0 -27.6 50.3 -28.0 52.7 -26.7C55.0 -25.4 57.4 -22.9 58.7 -20.0C59.9 -17.1 59.8 -10.9 60.0 -9.1M60.0 -9.1C60.8 -8.0 63.8 -5.1 64.7 -2.7C65.6 -0.3 65.8 2.4 65.3 5.3C64.9 8.2 63.8 12.1 62.0 14.7C60.2 17.2 55.9 19.7 54.7 20.7M54.7 20.7C55.1 21.9 57.3 25.0 57.3 28.0C57.3 31.0 56.6 35.7 54.7 38.7C52.8 41.7 49.3 44.8 46.0 46.0C42.7 47.2 36.6 46.0 34.7 46.0M34.7 46.0C33.9 47.2 32.6 51.2 30.0 53.3C27.4 55.4 23.3 57.6 19.3 58.7C15.3 59.8 9.6 60.0 6.0 60.0C2.4 60.0 0.1 59.6 -2.0 58.7C-4.1 57.8 -5.9 55.3 -6.7 54.7M-6.7 54.7C-8.1 55.0 -11.9 56.9 -15.3 56.7C-18.8 56.4 -24.0 55.4 -27.3 53.3C-30.7 51.2 -33.8 47.3 -35.3 44.0C-36.9 40.7 -36.4 35.1 -36.7 33.3M-36.7 33.3C-37.8 33.6 -41.1 35.6 -43.3 34.7C-45.6 33.8 -48.3 31.3 -50.0 28.0C-51.7 24.7 -53.2 18.7 -53.3 14.7C-53.4 10.7 -51.1 5.8 -50.7 4.0M-50.7 4.0C-51.3 2.9 -54.0 0.2 -54.7 -2.7C-55.3 -5.6 -55.4 -10.4 -54.7 -13.3C-53.9 -16.2 -52.1 -18.4 -50.0 -20.0C-47.9 -21.6 -43.3 -22.2 -42.0 -22.7M54.7 20.7C55.8 20.0 59.4 18.5 61.3 16.7C63.3 14.8 64.6 11.4 66.3 9.6C67.9 7.8 69.9 6.5 71.1 5.6C72.3 4.7 73.1 4.3 73.5 4.0"/></g>
<g transform="translate(385.8 541.8)"><ellipse rx="22" ry="12.7" transform="rotate(3)"/><path d="M-10.7 -12.0C-10.9 -14.2 -11.6 -21.1 -12.0 -25.3C-12.4 -29.6 -13.1 -35.3 -13.3 -37.3M3.3 -12.3C3.4 -14.1 3.2 -19.8 3.6 -23.3C4.0 -26.8 4.9 -30.8 6.0 -33.3C7.1 -35.9 9.3 -37.8 10.0 -38.7M15.3 -8.7C17.1 -10.2 22.7 -15.5 26.0 -18.0C29.3 -20.5 32.2 -22.1 35.3 -23.7C38.4 -25.4 43.1 -27.1 44.7 -27.7M22.0 -3.3C25.1 -3.8 34.3 -5.0 40.7 -6.0C47.0 -7.0 56.8 -8.6 60.0 -9.1M22.7 2.7C25.4 3.8 34.0 6.6 39.3 9.6C44.7 12.6 52.1 18.8 54.7 20.7M17.7 7.6C19.3 10.1 24.8 17.5 27.3 22.7C29.8 27.8 31.4 34.8 32.7 38.7C33.9 42.6 34.3 44.8 34.7 46.0M-4.7 12.0C-5.3 14.7 -7.7 22.7 -8.4 28.0C-9.1 33.3 -9.0 39.6 -8.7 44.0C-8.4 48.4 -7.0 52.9 -6.7 54.7M-16.1 7.9C-18.2 9.9 -25.6 16.6 -28.7 20.0C-31.7 23.4 -33.1 25.8 -34.4 28.0C-35.7 30.2 -36.3 32.4 -36.7 33.3M-21.3 0.0C-23.4 -0.2 -30.1 -1.2 -34.0 -0.9C-37.9 -0.7 -41.9 0.5 -44.7 1.3C-47.4 2.2 -49.7 3.6 -50.7 4.0M-42.0 -22.7C-40.0 -22.0 -34.1 -21.0 -30.0 -18.7C-25.9 -16.3 -19.4 -10.3 -17.3 -8.7M-13.3 -37.3C-14.8 -37.8 -18.6 -40.6 -22.0 -40.3C-25.4 -39.9 -30.7 -38.2 -34.0 -35.3C-37.3 -32.4 -40.7 -25.0 -42.0 -22.9M-13.3 -37.3C-12.8 -38.1 -11.9 -40.9 -10.0 -42.0C-8.1 -43.1 -4.7 -43.9 -2.0 -44.0C0.7 -44.1 4.0 -43.6 6.0 -42.7C8.0 -41.8 9.3 -39.3 10.0 -38.7M10.0 -38.7C11.6 -39.4 16.0 -42.6 19.3 -43.3C22.7 -44.1 26.7 -44.1 30.0 -43.3C33.3 -42.6 36.9 -40.6 39.3 -38.7C41.7 -36.8 43.5 -33.8 44.4 -32.0C45.3 -30.2 44.6 -28.4 44.7 -27.7M44.7 -27.7C46.0 -27.6 50.3 -28.0 52.7 -26.7C55.0 -25.4 57.4 -22.9 58.7 -20.0C59.9 -17.1 59.8 -10.9 60.0 -9.1M60.0 -9.1C60.8 -8.0 63.8 -5.1 64.7 -2.7C65.6 -0.3 65.8 2.4 65.3 5.3C64.9 8.2 63.8 12.1 62.0 14.7C60.2 17.2 55.9 19.7 54.7 20.7M54.7 20.7C55.1 21.9 57.3 25.0 57.3 28.0C57.3 31.0 56.6 35.7 54.7 38.7C52.8 41.7 49.3 44.8 46.0 46.0C42.7 47.2 36.6 46.0 34.7 46.0M34.7 46.0C33.9 47.2 32.6 51.2 30.0 53.3C27.4 55.4 23.3 57.6 19.3 58.7C15.3 59.8 9.6 60.0 6.0 60.0C2.4 60.0 0.1 59.6 -2.0 58.7C-4.1 57.8 -5.9 55.3 -6.7 54.7M-6.7 54.7C-8.1 55.0 -11.9 56.9 -15.3 56.7C-18.8 56.4 -24.0 55.4 -27.3 53.3C-30.7 51.2 -33.8 47.3 -35.3 44.0C-36.9 40.7 -36.4 35.1 -36.7 33.3M-36.7 33.3C-37.8 33.6 -41.1 35.6 -43.3 34.7C-45.6 33.8 -48.3 31.3 -50.0 28.0C-51.7 24.7 -53.2 18.7 -53.3 14.7C-53.4 10.7 -51.1 5.8 -50.7 4.0M-50.7 4.0C-51.3 2.9 -54.0 0.2 -54.7 -2.7C-55.3 -5.6 -55.4 -10.4 -54.7 -13.3C-53.9 -16.2 -52.1 -18.4 -50.0 -20.0C-47.9 -21.6 -43.3 -22.2 -42.0 -22.7M54.7 20.7C55.8 20.0 59.4 18.5 61.3 16.7C63.3 14.8 64.6 11.4 66.3 9.6C67.9 7.8 69.9 6.5 71.1 5.6C72.3 4.7 73.1 4.3 73.5 4.0"/></g>
<g transform="translate(509.9 541.8)"><ellipse rx="22" ry="12.7" transform="rotate(3)"/><path d="M-10.7 -12.0C-10.9 -14.2 -11.6 -21.1 -12.0 -25.3C-12.4 -29.6 -13.1 -35.3 -13.3 -37.3M3.3 -12.3C3.4 -14.1 3.2 -19.8 3.6 -23.3C4.0 -26.8 4.9 -30.8 6.0 -33.3C7.1 -35.9 9.3 -37.8 10.0 -38.7M15.3 -8.7C17.1 -10.2 22.7 -15.5 26.0 -18.0C29.3 -20.5 32.2 -22.1 35.3 -23.7C38.4 -25.4 43.1 -27.1 44.7 -27.7M22.0 -3.3C25.1 -3.8 34.3 -5.0 40.7 -6.0C47.0 -7.0 56.8 -8.6 60.0 -9.1M22.7 2.7C25.4 3.8 34.0 6.6 39.3 9.6C44.7 12.6 52.1 18.8 54.7 20.7M17.7 7.6C19.3 10.1 24.8 17.5 27.3 22.7C29.8 27.8 31.4 34.8 32.7 38.7C33.9 42.6 34.3 44.8 34.7 46.0M-4.7 12.0C-5.3 14.7 -7.7 22.7 -8.4 28.0C-9.1 33.3 -9.0 39.6 -8.7 44.0C-8.4 48.4 -7.0 52.9 -6.7 54.7M-16.1 7.9C-18.2 9.9 -25.6 16.6 -28.7 20.0C-31.7 23.4 -33.1 25.8 -34.4 28.0C-35.7 30.2 -36.3 32.4 -36.7 33.3M-21.3 0.0C-23.4 -0.2 -30.1 -1.2 -34.0 -0.9C-37.9 -0.7 -41.9 0.5 -44.7 1.3C-47.4 2.2 -49.7 3.6 -50.7 4.0M-42.0 -22.7C-40.0 -22.0 -34.1 -21.0 -30.0 -18.7C-25.9 -16.3 -19.4 -10.3 -17.3 -8.7M-13.3 -37.3C-14.8 -37.8 -18.6 -40.6 -22.0 -40.3C-25.4 -39.9 -30.7 -38.2 -34.0 -35.3C-37.3 -32.4 -40.7 -25.0 -42.0 -22.9M-13.3 -37.3C-12.8 -38.1 -11.9 -40.9 -10.0 -42.0C-8.1 -43.1 -4.7 -43.9 -2.0 -44.0C0.7 -44.1 4.0 -43.6 6.0 -42.7C8.0 -41.8 9.3 -39.3 10.0 -38.7M10.0 -38.7C11.6 -39.4 16.0 -42.6 19.3 -43.3C22.7 -44.1 26.7 -44.1 30.0 -43.3C33.3 -42.6 36.9 -40.6 39.3 -38.7C41.7 -36.8 43.5 -33.8 44.4 -32.0C45.3 -30.2 44.6 -28.4 44.7 -27.7M44.7 -27.7C46.0 -27.6 50.3 -28.0 52.7 -26.7C55.0 -25.4 57.4 -22.9 58.7 -20.0C59.9 -17.1 59.8 -10.9 60.0 -9.1M60.0 -9.1C60.8 -8.0 63.8 -5.1 64.7 -2.7C65.6 -0.3 65.8 2.4 65.3 5.3C64.9 8.2 63.8 12.1 62.0 14.7C60.2 17.2 55.9 19.7 54.7 20.7M54.7 20.7C55.1 21.9 57.3 25.0 57.3 28.0C57.3 31.0 56.6 35.7 54.7 38.7C52.8 41.7 49.3 44.8 46.0 46.0C42.7 47.2 36.6 46.0 34.7 46.0M34.7 46.0C33.9 47.2 32.6 51.2 30.0 53.3C27.4 55.4 23.3 57.6 19.3 58.7C15.3 59.8 9.6 60.0 6.0 60.0C2.4 60.0 0.1 59.6 -2.0 58.7C-4.1 57.8 -5.9 55.3 -6.7 54.7M-6.7 54.7C-8.1 55.0 -11.9 56.9 -15.3 56.7C-18.8 56.4 -24.0 55.4 -27.3 53.3C-30.7 51.2 -33.8 47.3 -35.3 44.0C-36.9 40.7 -36.4 35.1 -36.7 33.3M-36.7 33.3C-37.8 33.6 -41.1 35.6 -43.3 34.7C-45.6 33.8 -48.3 31.3 -50.0 28.0C-51.7 24.7 -53.2 18.7 -53.3 14.7C-53.4 10.7 -51.1 5.8 -50.7 4.0M-50.7 4.0C-51.3 2.9 -54.0 0.2 -54.7 -2.7C-55.3 -5.6 -55.4 -10.4 -54.7 -13.3C-53.9 -16.2 -52.1 -18.4 -50.0 -20.0C-47.9 -21.6 -43.3 -22.2 -42.0 -22.7M54.7 20.7C55.8 20.0 59.4 18.5 61.3 16.7C63.3 14.8 64.6 11.4 66.3 9.6C67.9 7.8 69.9 6.5 71.1 5.6C72.3 4.7 73.1 4.3 73.5 4.0"/></g>
</svg>
</div>
<div class="btn" style="left:169px;top:619px;width:161px;height:61px"><span class="lab" id="p_sel" style="left:16px;top:7px;font-size:21px;line-height:22px;text-align:center;transform-origin:0 0;transform:scaleX(1.01);-webkit-text-stroke:0.25px #000">Select<br>Pattern</span></div>
<div class="btn" style="left:339px;top:619px;width:101px;height:61px"><span class="lab" id="p_pm" style="left:13.500px;top:9px;font-size:13.400px;">Panto Mode</span><span class="lab" id="p_pw" style="left:23.500px;top:30.500px;font-size:17.800px;-webkit-text-stroke:0.2px #000">Power</span></div>
<div class="btn" style="left:169px;top:689px;width:161px;height:61px"><span class="lab" id="p_read" style="left:21px;top:9.500px;font-size:17px;line-height:20px;text-align:center;transform:scaleX(1.08);-webkit-text-stroke:0.2px #000">Read<br>Panto</span></div>
<div class="btn" style="left:339px;top:689px;width:101px;height:61px"><span class="lab" id="p_save" style="left:6.500px;top:10px;font-size:16px;line-height:20px;text-align:center;">Save<br>Panto</span></div>
<div class="chk" style="left:199px;top:766px"></div>
<span class="h" id="p_ssa" style="left:221.500px;top:763px;font-size:20px;letter-spacing:0.25px">Show Safe Area</span>
<div class="chk" style="left:199px;top:796px"></div>
<span class="h" id="p_stc" style="left:221.500px;top:793px;font-size:20px;letter-spacing:-0.09px">Sew Thru Clipped</span>
<svg style="left:0;top:600px" width="480" height="240" viewBox="0 600 480 240">
<defs><linearGradient id="gHG" x1="0" y1="0" x2="0" y2="1"><stop offset="0" stop-color="#ffffff"/><stop offset="1" stop-color="#d3e9e9"/></linearGradient><linearGradient id="gFloppy2" x1="0" y1="0" x2="0" y2="1"><stop offset="0" stop-color="#4d7fc2"/><stop offset="1" stop-color="#3563a6"/></linearGradient></defs><rect x="272" y="632.500" width="40" height="38" fill="#9a9a9a" opacity="0.350"/><rect x="271.200" y="631.700" width="40" height="38" fill="#fff"/><g fill="#fff" stroke="#4a4a4a" stroke-width="1"><ellipse cx="302.9" cy="651.2" rx="5.5" ry="3.2" transform="rotate(28 302.9 651.2)"/><ellipse cx="302.0" cy="655.9" rx="5.5" ry="3.2" transform="rotate(50 302.0 655.9)"/><ellipse cx="299.3" cy="660.0" rx="5.5" ry="3.2" transform="rotate(73 299.3 660.0)"/><ellipse cx="295.2" cy="662.7" rx="5.5" ry="3.2" transform="rotate(96 295.2 662.7)"/><ellipse cx="290.5" cy="663.6" rx="5.5" ry="3.2" transform="rotate(118 290.5 663.6)"/><ellipse cx="285.8" cy="662.7" rx="5.5" ry="3.2" transform="rotate(140 285.8 662.7)"/><ellipse cx="281.7" cy="660.0" rx="5.5" ry="3.2" transform="rotate(163 281.7 660.0)"/><ellipse cx="279.0" cy="655.9" rx="5.5" ry="3.2" transform="rotate(186 279.0 655.9)"/><ellipse cx="278.1" cy="651.2" rx="5.5" ry="3.2" transform="rotate(208 278.1 651.2)"/><ellipse cx="279.0" cy="646.5" rx="5.5" ry="3.2" transform="rotate(230 279.0 646.5)"/><ellipse cx="281.7" cy="642.4" rx="5.5" ry="3.2" transform="rotate(253 281.7 642.4)"/><ellipse cx="285.8" cy="639.7" rx="5.5" ry="3.2" transform="rotate(276 285.8 639.7)"/><ellipse cx="290.5" cy="638.8" rx="5.5" ry="3.2" transform="rotate(298 290.5 638.8)"/><ellipse cx="295.2" cy="639.7" rx="5.5" ry="3.2" transform="rotate(320 295.2 639.7)"/><ellipse cx="299.3" cy="642.4" rx="5.5" ry="3.2" transform="rotate(343 299.3 642.4)"/><ellipse cx="302.0" cy="646.5" rx="5.5" ry="3.2" transform="rotate(366 302.0 646.5)"/><circle cx="290.5" cy="651.2" r="7.2"/></g><g transform="translate(255.2 622.4) scale(1) translate(-255.2 -622.4)"><path d="M255.2 628.500L260.600 622.400L274 627.600L274.800 634L281.500 645L279.500 646.500L273 638.500L272.500 641L274.500 644.500L272 646.500L266.500 646.500L256 631Z" fill="#5a6a80" opacity="0.450" transform="translate(1.200 1.400)"/><path d="M255.2 628.500L260.600 622.400L274 627.600L274.800 634L281.500 645L279.500 646.500L273 638.500L272.500 641L274.500 644.500L272 646.500L266.500 646.500L256 631Z" fill="#c7d7ee" stroke="#6f8fc2" stroke-width="1.00" stroke-linejoin="round"/><path d="M268.500 636.500l4.500 8M265.500 638.500l4.500 7.500M262.500 640l4 6" stroke="#7d9bc9" stroke-width="0.90" fill="none"/><path d="M270.500 630.500l1.500 6.500" stroke="#6583b5" stroke-width="0.90" fill="none"/></g><rect x="272.8" y="693.0" width="49.4" height="50.3" fill="url(#gHG)" stroke="#5b80c8" stroke-width="1.5"/><path d="M272.8 709.0H279.8C277.9 705.3 273.2 703.0 273.2 699.4C273.2 695.3 279.2 694.6 281.0 698.0C282.9 694.6 288.9 695.3 288.9 699.4C288.9 703.0 284.1 705.3 282.3 709.0H296.3C294.4 705.3 289.7 703.0 289.7 699.4C289.7 695.3 295.6 694.6 297.5 698.0C299.4 694.6 305.3 695.3 305.3 699.4C305.3 703.0 300.6 705.3 298.7 709.0H312.7C310.9 705.3 306.1 703.0 306.1 699.4C306.1 695.3 312.1 694.6 314.0 698.0C315.8 694.6 321.8 695.3 321.8 699.4C321.8 703.0 317.1 705.3 315.2 709.0H322.2M272.8 725.7H279.8C277.9 722.1 273.2 719.8 273.2 716.2C273.2 712.1 279.2 711.3 281.0 714.8C282.9 711.3 288.9 712.1 288.9 716.2C288.9 719.8 284.1 722.1 282.3 725.7H296.3C294.4 722.1 289.7 719.8 289.7 716.2C289.7 712.1 295.6 711.3 297.5 714.8C299.4 711.3 305.3 712.1 305.3 716.2C305.3 719.8 300.6 722.1 298.7 725.7H312.7C310.9 722.1 306.1 719.8 306.1 716.2C306.1 712.1 312.1 711.3 314.0 714.8C315.8 711.3 321.8 712.1 321.8 716.2C321.8 719.8 317.1 722.1 315.2 725.7H322.2M272.8 742.5H279.8C277.9 738.9 273.2 736.6 273.2 732.9C273.2 728.8 279.2 728.1 281.0 731.6C282.9 728.1 288.9 728.8 288.9 732.9C288.9 736.6 284.1 738.9 282.3 742.5H296.3C294.4 738.9 289.7 736.6 289.7 732.9C289.7 728.8 295.6 728.1 297.5 731.6C299.4 728.1 305.3 728.8 305.3 732.9C305.3 736.6 300.6 738.9 298.7 742.5H312.7C310.9 738.9 306.1 736.6 306.1 732.9C306.1 728.8 312.1 728.1 314.0 731.6C315.8 728.1 321.8 728.8 321.8 732.9C321.8 736.6 317.1 738.9 315.2 742.5H322.2" fill="none" stroke="#5b80c8" stroke-width="1.5" stroke-linejoin="round"/><g transform="translate(249.7 695.2) scale(1) translate(-255.2 -622.4)"><path d="M255.2 628.500L260.600 622.400L274 627.600L274.800 634L281.500 645L279.500 646.500L273 638.500L272.500 641L274.500 644.500L272 646.500L266.500 646.500L256 631Z" fill="#5a6a80" opacity="0.450" transform="translate(1.200 1.400)"/><path d="M255.2 628.500L260.600 622.400L274 627.600L274.800 634L281.500 645L279.500 646.500L273 638.500L272.500 641L274.500 644.500L272 646.500L266.500 646.500L256 631Z" fill="#c7d7ee" stroke="#6f8fc2" stroke-width="1.00" stroke-linejoin="round"/><path d="M268.500 636.500l4.500 8M265.500 638.500l4.500 7.500M262.500 640l4 6" stroke="#7d9bc9" stroke-width="0.90" fill="none"/><path d="M270.500 630.500l1.500 6.500" stroke="#6583b5" stroke-width="0.90" fill="none"/></g><g transform="translate(395.6 701.5) scale(1.02) translate(-235 -44)"><path d="M235 45.500a1.500 1.500 0 0 1 1.500-1.500h26.200a1.500 1.500 0 0 1 1.500 1.500v26.300a1.500 1.500 0 0 1-1.500 1.500h-25.200l-2.500-2.500z" fill="url(#gFloppy2)"/><rect x="239.400" y="44" width="19.700" height="15.800" fill="#fbd9d0"/><path d="M239.400 47.500h19.700M239.400 50.500h19.700M239.400 53.500h19.700M239.400 56.500h19.700" stroke="#f8c4b8" stroke-width="0.600"/><rect x="244" y="64.300" width="14.500" height="9" fill="#f4f6fa"/><rect x="245.800" y="65.800" width="2.600" height="6.500" fill="#2f5a9c"/><rect x="261.300" y="45.300" width="1.700" height="1.700" fill="#2c558f"/></g><path d="M202.800 803l3 3.600l5.700-7.600" fill="none" stroke="#000" stroke-width="2.500"/>

</svg>

<span class="h" id="s_siz" style="left:581.500px;top:619.500px;font-size:20.500px">Sizing</span>
<div class="abs" style="left:498px;top:649px;width:62px;height:61px;background:#1a1012"></div>
<div class="btn glass2" style="left:499px;top:650px;width:60px;height:59px;border-color:#fdfdfd #5a5a5a #5a5a5a #fdfdfd"></div>
<div class="field" style="left:560px;top:649px;width:99px;height:60px;border-left-color:#fff"><span class="cap" id="s_ph" style="font-size:13.400px;top:0px;left:-3px">Pattern Height</span><span class="val" id="s_phv" style="top:30px;font-size:20px;transform:scaleX(1.1)">4.417</span></div>
<div class="btn glass2" style="left:659px;top:649px;width:61px;height:61px"></div>
<div class="field" style="left:498px;top:718px;width:101px;height:61px"><span class="cap" id="s_tw" style="top:2px;left:3px">Total Width</span><span class="val" id="s_twv" style="top:29.500px;font-size:21px;transform:scaleX(1.1)">20</span></div>
<div class="field" style="left:618px;top:718px;width:101px;height:61px"><span class="cap" id="s_th" style="top:2px">Total Height</span><span class="val" id="s_thv" style="top:29.500px;font-size:21px;transform:scaleX(1.1)">20</span></div>
<div class="btn" style="left:528px;top:789px;width:42px;height:31px;border-width:1px 2px 2px 1px"><div class="abs" style="left:10px;top:6px;width:18px;height:13px;background:#fff;border:1px solid #555"></div></div>
<div class="btn" style="left:648px;top:789px;width:42px;height:31px;border-width:1px 2px 2px 1px"><div class="abs" style="left:10px;top:6px;width:18px;height:13px;background:#fff;border:1px solid #555"></div></div>
<span class="h" id="s_pf" style="left:577px;top:787px;font-size:17.800px;line-height:20.500px;text-align:center">Pattern<br><span style="position:relative;left:2.500px">Fitting</span></span>

<span class="h" id="c_sp" style="left:862px;top:620px;font-size:20.400px">Spacing</span>
<div class="btn glass2" style="left:778px;top:649px;width:62px;height:61px"></div>
<div class="field" style="left:848px;top:649px;width:101px;height:61px"><span class="cap" id="c_v" style="top:1px">Vertical</span><span class="val" id="c_vv" style="top:30px;font-size:20px;transform:scaleX(1.1)">0</span></div>
<div class="btn glass2" style="left:959px;top:649px;width:61px;height:61px"></div>
<div class="abs" style="left:818.500px;top:739px;width:168.500px;height:28px;background:#fff"></div>
<span class="h" id="c_cont" style="left:889px;top:743px;font-size:19px;font-family:'Liberation Serif',serif;font-weight:bold;font-style:italic;color:#078207">Continuous</span>
<svg style="left:480px;top:600px" width="580" height="240" viewBox="480 600 580 240">
<defs><linearGradient id="gBar" x1="0" y1="0" x2="0" y2="1"><stop offset="0" stop-color="#4a78c2"/><stop offset="0.35" stop-color="#7ca6e2"/><stop offset="1" stop-color="#4f7fc8"/></linearGradient><linearGradient id="gBarV" x1="0" y1="0" x2="1" y2="0"><stop offset="0" stop-color="#3f73c2"/><stop offset="0.4" stop-color="#6c9be0"/><stop offset="1" stop-color="#4a7dcc"/></linearGradient></defs><rect x="508.6" y="674.700" width="42.8" height="9.800" rx="2" fill="url(#gBar)" stroke="#345fa6" stroke-width="0.900"/><rect x="685.0" y="657.300" width="9.8" height="43.400" rx="2" fill="url(#gBarV)" stroke="#345fa6" stroke-width="0.900"/><rect x="668.6" y="674.700" width="43.0" height="9.800" rx="2" fill="url(#gBar)" stroke="#345fa6" stroke-width="0.900"/><rect x="685.5" y="675.600" width="8.8" height="8.600" fill="#6f9be0" opacity="0.600"/><rect x="788.4" y="674.700" width="42.8" height="9.800" rx="2" fill="url(#gBar)" stroke="#345fa6" stroke-width="0.900"/><rect x="985.0" y="657.300" width="9.8" height="43.400" rx="2" fill="url(#gBarV)" stroke="#345fa6" stroke-width="0.900"/><rect x="968.4" y="674.700" width="43.2" height="9.800" rx="2" fill="url(#gBar)" stroke="#345fa6" stroke-width="0.900"/><rect x="985.5" y="675.600" width="8.8" height="8.600" fill="#6f9be0" opacity="0.600"/><path d="M822.0 762.0H833.6C830.5 757.0 822.7 753.9 822.7 748.9C822.7 743.2 832.6 742.2 835.6 747.0C838.7 742.2 848.6 743.2 848.6 748.9C848.6 753.9 840.8 757.0 837.7 762.0H849.3H866.0C862.9 757.0 855.1 753.9 855.1 748.9C855.1 743.2 865.0 742.2 868.0 747.0C871.1 742.2 881.0 743.2 881.0 748.9C881.0 753.9 873.2 757.0 870.1 762.0H881.7" fill="none" stroke="#6f8cc4" stroke-width="1.300"/>

</svg>

<div class="btn" style="left:1078px;top:619px;width:132px;height:31px"><span class="lab" id="f_flip" style="left:43px;top:6.500px;font-size:16px;-webkit-text-stroke:0.3px #000">Flip</span><span class="lab" id="f_x" style="left:77.500px;top:5.500px;font-size:15px;-webkit-text-stroke:0.4px #ee1122;font-weight:bold;color:#ee1122;transform-origin:0 50%;transform:scaleX(1.05)">X</span></div>
<div class="btn fb" style="left:1078px;top:659px"></div>
<div class="btn fb" style="left:1148px;top:659px;width:62px"></div>
<div class="btn fb" style="left:1078px;top:719px"></div>
<div class="btn fb" style="left:1148px;top:719px;width:62px"></div>
<div class="btn fb" style="left:1078px;top:779px"></div>
<div class="btn fb" style="left:1148px;top:779px;width:62px"></div>
<svg style="left:1060px;top:600px" width="180" height="240" viewBox="1060 600 180 240">
<rect x="1087.5" y="664.3" width="42.4" height="38.7" fill="#fff" stroke="#c4c4c4" stroke-width="1"/><path d="M1108.9 664.3V703.0M1087.5 683.9H1129.9" stroke="#cfcfcf" stroke-width="1" fill="none"/><path d="M1090.5 674.3l6-3.300v6.600zM1106.4 674.3l-6-3.300v6.600z" fill="#1768dc"/><path d="M1094.5 674.3H1102.4" stroke="#1768dc" stroke-width="1.300"/><path d="M1111.3 674.3l6-3.300v6.600zM1127.2 674.3l-6-3.300v6.600z" fill="#1768dc"/><path d="M1115.3 674.3H1123.2" stroke="#1768dc" stroke-width="1.300"/><path d="M1090.5 693.9l6-3.300v6.600zM1106.4 693.9l-6-3.300v6.600z" fill="#1768dc"/><path d="M1094.5 693.9H1102.4" stroke="#1768dc" stroke-width="1.300"/><path d="M1111.3 693.9l6-3.300v6.600zM1127.2 693.9l-6-3.300v6.600z" fill="#1768dc"/><path d="M1115.3 693.9H1123.2" stroke="#1768dc" stroke-width="1.300"/><rect x="1157.4" y="664.3" width="42.2" height="38.7" fill="#fff" stroke="#c4c4c4" stroke-width="1"/><path d="M1178.6 664.3V703.0M1157.4 683.9H1199.6" stroke="#cfcfcf" stroke-width="1" fill="none"/><path d="M1160.5 674.3l6-3.300v6.600zM1176.1 674.3l-6-3.300v6.600z" fill="#1768dc"/><path d="M1164.5 674.3H1172.1" stroke="#1768dc" stroke-width="1.300"/><path d="M1181.2 674.3l6-3.300v6.600zM1197.1 674.3l-6-3.300v6.600z" fill="#1768dc"/><path d="M1185.2 674.3H1193.1" stroke="#1768dc" stroke-width="1.300"/><rect x="1087.5" y="724.4" width="42.4" height="38.6" fill="#fff" stroke="#c4c4c4" stroke-width="1"/><path d="M1108.9 724.4V763.0M1087.5 744.0H1129.9" stroke="#cfcfcf" stroke-width="1" fill="none"/><path d="M1090.5 734.0l6-3.300v6.600zM1106.4 734.0l-6-3.300v6.600z" fill="#1768dc"/><path d="M1094.5 734.0H1102.4" stroke="#1768dc" stroke-width="1.300"/><path d="M1090.5 753.7l6-3.300v6.600zM1106.4 753.7l-6-3.300v6.600z" fill="#1768dc"/><path d="M1094.5 753.7H1102.4" stroke="#1768dc" stroke-width="1.300"/><rect x="1157.4" y="724.4" width="42.2" height="38.6" fill="#fff" stroke="#c4c4c4" stroke-width="1"/><path d="M1178.6 724.4V763.0M1157.4 744.0H1199.6" stroke="#cfcfcf" stroke-width="1" fill="none"/><path d="M1160.5 734.0l6-3.300v6.600zM1176.1 734.0l-6-3.300v6.600z" fill="#1768dc"/><path d="M1164.5 734.0H1172.1" stroke="#1768dc" stroke-width="1.300"/><path d="M1181.2 753.7l6-3.300v6.600zM1197.1 753.7l-6-3.300v6.600z" fill="#1768dc"/><path d="M1185.2 753.7H1193.1" stroke="#1768dc" stroke-width="1.300"/><rect x="1089.0" y="784.3" width="41.3" height="38.3" fill="#fff" stroke="#c4c4c4" stroke-width="1"/><path d="M1109.7 784.3V822.6M1089.0 803.6H1130.3" stroke="#cfcfcf" stroke-width="1" fill="none"/><path d="M1099.2 786.4l-3.300 6h6.600zM1099.2 802.2l-3.300-6h6.600z" fill="#1768dc"/><path d="M1099.2 790.4V798.2" stroke="#1768dc" stroke-width="1.300"/><path d="M1099.2 806.0l-3.300 6h6.600zM1099.2 821.9l-3.300-6h6.600z" fill="#1768dc"/><path d="M1099.2 810.0V817.9" stroke="#1768dc" stroke-width="1.300"/><path d="M1119.6 786.4l-3.300 6h6.600zM1119.6 802.2l-3.300-6h6.600z" fill="#1768dc"/><path d="M1119.6 790.4V798.2" stroke="#1768dc" stroke-width="1.300"/><path d="M1119.6 806.0l-3.300 6h6.600zM1119.6 821.9l-3.300-6h6.600z" fill="#1768dc"/><path d="M1119.6 810.0V817.9" stroke="#1768dc" stroke-width="1.300"/><rect x="1157.5" y="784.3" width="41.7" height="38.3" fill="#fff" stroke="#c4c4c4" stroke-width="1"/><path d="M1178.5 784.3V822.6M1157.5 803.6H1199.2" stroke="#cfcfcf" stroke-width="1" fill="none"/><path d="M1167.8 786.4l-3.300 6h6.600zM1167.8 802.2l-3.300-6h6.600z" fill="#1768dc"/><path d="M1167.8 790.4V798.2" stroke="#1768dc" stroke-width="1.300"/><path d="M1188.7 786.4l-3.300 6h6.600zM1188.7 802.2l-3.300-6h6.600z" fill="#1768dc"/><path d="M1188.7 790.4V798.2" stroke="#1768dc" stroke-width="1.300"/>

</svg>

<div class="btn" style="left:1258px;top:619px;width:142px;height:61px;background:radial-gradient(ellipse 75% 80% at 55% 45%,#f4f4f4 0%,#eaeaea 50%,#cfcfcf 100%)"><span class="lab" id="r_stag" style="left:41.500px;top:-1px;font-size:16.800px;-webkit-text-stroke:0.2px #000">Stagger 2</span></div>
<div class="btn" style="left:1258px;top:689px;width:142px;height:54px;border-top-color:#e8f1ea;background:linear-gradient(90deg,rgba(120,170,135,0.55) 0%,rgba(255,255,255,0) 7%,rgba(255,255,255,0) 93%,rgba(120,170,135,0.55) 100%),linear-gradient(#fbfdfb 0%,#eef7f0 40%,#c4e4cd 75%,#8fcaa0 100%)"><span class="lab" id="r_place" style="left:3px;top:3px;width:74px;font-size:14.700px;line-height:15px;text-align:center;-webkit-text-stroke:0.2px #000">Place as<br>a Single<br>Pattern</span></div>
<div class="btn" style="left:1258px;top:750px;width:142px;height:61px;background:radial-gradient(ellipse 70% 75% at 45% 42%,#ffffff 0%,#f4faf5 45%,#c2e3cb 80%,#8fcaa0 100%)"><span class="lab" id="r_sew" style="left:13px;top:9px;width:60px;font-size:15px;line-height:14.400px;text-align:center;-webkit-text-stroke:0.2px #000">Sew<br>in<br>Zones</span></div>
<div class="abs" style="left:1261px;top:815px;width:136px;height:21px;background:#c3c3c3"></div>
<span class="h" id="r_q" style="left:1371.500px;top:816px;font-size:16px;font-weight:bold;color:#fff">?</span>
<svg style="left:1240px;top:600px" width="180" height="240" viewBox="1240 600 180 240">
<defs><linearGradient id="gRad" x1="0" y1="0" x2="1" y2="1"><stop offset="0" stop-color="#4a4a4a"/><stop offset="1" stop-color="#e0e0e0"/></linearGradient><radialGradient id="gRadSel" cx="0.4" cy="0.35" r="0.7"><stop offset="0" stop-color="#7b97d0"/><stop offset="0.5" stop-color="#4060a8"/><stop offset="1" stop-color="#2c4788"/></radialGradient><linearGradient id="gHG2" x1="0" y1="0" x2="0" y2="1"><stop offset="0" stop-color="#ffffff" stop-opacity="0.8"/><stop offset="1" stop-color="#d3e9e0" stop-opacity="0.3"/></linearGradient></defs><circle cx="1273.700" cy="632.3" r="5.600" fill="#ececec" stroke="url(#gRad)" stroke-width="1.600"/><circle cx="1273.700" cy="647.3" r="5.600" fill="#ececec" stroke="url(#gRad)" stroke-width="1.600"/><circle cx="1273.700" cy="662.900" r="6.200" fill="url(#gRadSel)" stroke="#5a6f9c" stroke-width="0.800"/><path d="M1270.500 661.500a3.200 2.400 0 0 1 4-2" stroke="#c8d6f0" stroke-width="1.200" fill="none"/><rect x="1288.700" y="639.300" width="100" height="31.400" fill="#fff"/><clipPath id="cpS"><rect x="1288.700" y="639.300" width="100" height="31.400"/></clipPath><path d="M1259.3 646.6Q1268.6 652.6 1278.0 646.6M1278.0 646.6Q1287.3 652.6 1296.7 646.6M1296.7 646.6Q1306.0 652.6 1315.4 646.6M1315.4 646.6Q1324.8 652.6 1334.1 646.6M1334.1 646.6Q1343.5 652.6 1352.8 646.6M1352.8 646.6Q1362.2 652.6 1371.5 646.6M1371.5 646.6Q1380.9 652.6 1390.2 646.6M1390.2 646.6Q1399.6 652.6 1408.9 646.6M1267.9 656.6Q1277.2 662.6 1286.6 656.6M1286.6 656.6Q1295.9 662.6 1305.3 656.6M1305.3 656.6Q1314.6 662.6 1324.0 656.6M1324.0 656.6Q1333.3 662.6 1342.7 656.6M1342.7 656.6Q1352.0 662.6 1361.4 656.6M1361.4 656.6Q1370.8 662.6 1380.1 656.6M1380.1 656.6Q1389.5 662.6 1398.8 656.6M1259.3 666.6Q1268.6 672.6 1278.0 666.6M1278.0 666.6Q1287.3 672.6 1296.7 666.6M1296.7 666.6Q1306.0 672.6 1315.4 666.6M1315.4 666.6Q1324.8 672.6 1334.1 666.6M1334.1 666.6Q1343.5 672.6 1352.8 666.6M1352.8 666.6Q1362.2 672.6 1371.5 666.6M1371.5 666.6Q1380.9 672.6 1390.2 666.6M1390.2 666.6Q1399.6 672.6 1408.9 666.6" fill="none" stroke="#c566ea" stroke-width="1.8" clip-path="url(#cpS)"/><path d="M1259.3 645.6Q1268.6 651.6 1278.0 645.6M1278.0 645.6Q1287.3 651.6 1296.7 645.6M1296.7 645.6Q1306.0 651.6 1315.4 645.6M1315.4 645.6Q1324.8 651.6 1334.1 645.6M1334.1 645.6Q1343.5 651.6 1352.8 645.6M1352.8 645.6Q1362.2 651.6 1371.5 645.6M1371.5 645.6Q1380.9 651.6 1390.2 645.6M1390.2 645.6Q1399.6 651.6 1408.9 645.6M1267.9 655.6Q1277.2 661.6 1286.6 655.6M1286.6 655.6Q1295.9 661.6 1305.3 655.6M1305.3 655.6Q1314.6 661.6 1324.0 655.6M1324.0 655.6Q1333.3 661.6 1342.7 655.6M1342.7 655.6Q1352.0 661.6 1361.4 655.6M1361.4 655.6Q1370.8 661.6 1380.1 655.6M1380.1 655.6Q1389.5 661.6 1398.8 655.6M1259.3 665.6Q1268.6 671.6 1278.0 665.6M1278.0 665.6Q1287.3 671.6 1296.7 665.6M1296.7 665.6Q1306.0 671.6 1315.4 665.6M1315.4 665.6Q1324.8 671.6 1334.1 665.6M1334.1 665.6Q1343.5 671.6 1352.8 665.6M1352.8 665.6Q1362.2 671.6 1371.5 665.6M1371.5 665.6Q1380.9 671.6 1390.2 665.6M1390.2 665.6Q1399.6 671.6 1408.9 665.6" fill="none" stroke="#2a4cf0" stroke-width="1.9" clip-path="url(#cpS)"/><path d="M1259.3 640.0V646.1M1278.0 640.0V646.1M1296.7 640.0V646.1M1315.4 640.0V646.1M1334.1 640.0V646.1M1352.8 640.0V646.1M1371.5 640.0V646.1M1390.2 640.0V646.1M1267.9 650.0V656.1M1286.6 650.0V656.1M1305.3 650.0V656.1M1324.0 650.0V656.1M1342.7 650.0V656.1M1361.4 650.0V656.1M1380.1 650.0V656.1M1259.3 660.0V666.1M1278.0 660.0V666.1M1296.7 660.0V666.1M1315.4 660.0V666.1M1334.1 660.0V666.1M1352.8 660.0V666.1M1371.5 660.0V666.1M1390.2 660.0V666.1" fill="none" stroke="#2a4cf0" stroke-width="1.200" clip-path="url(#cpS)"/><rect x="1338.0" y="690.8" width="48.8" height="45.5" fill="url(#gHG2)" stroke="#5a7ac0" stroke-width="1.8"/><path d="M1338.0 705.2H1344.9C1343.1 701.9 1338.4 699.9 1338.4 696.7C1338.4 693.0 1344.3 692.4 1346.1 695.4C1348.0 692.4 1353.9 693.0 1353.9 696.7C1353.9 699.9 1349.2 701.9 1347.4 705.2H1361.2C1359.4 701.9 1354.7 699.9 1354.7 696.7C1354.7 693.0 1360.6 692.4 1362.4 695.4C1364.2 692.4 1370.1 693.0 1370.1 696.7C1370.1 699.9 1365.5 701.9 1363.6 705.2H1377.4C1375.6 701.9 1370.9 699.9 1370.9 696.7C1370.9 693.0 1376.8 692.4 1378.7 695.4C1380.5 692.4 1386.4 693.0 1386.4 696.7C1386.4 699.9 1381.7 701.9 1379.9 705.2H1386.8M1338.0 720.3H1344.9C1343.1 717.1 1338.4 715.1 1338.4 711.8C1338.4 708.2 1344.3 707.5 1346.1 710.6C1348.0 707.5 1353.9 708.2 1353.9 711.8C1353.9 715.1 1349.2 717.1 1347.4 720.3H1361.2C1359.4 717.1 1354.7 715.1 1354.7 711.8C1354.7 708.2 1360.6 707.5 1362.4 710.6C1364.2 707.5 1370.1 708.2 1370.1 711.8C1370.1 715.1 1365.5 717.1 1363.6 720.3H1377.4C1375.6 717.1 1370.9 715.1 1370.9 711.8C1370.9 708.2 1376.8 707.5 1378.7 710.6C1380.5 707.5 1386.4 708.2 1386.4 711.8C1386.4 715.1 1381.7 717.1 1379.9 720.3H1386.8M1338.0 735.5H1344.9C1343.1 732.3 1338.4 730.2 1338.4 727.0C1338.4 723.3 1344.3 722.7 1346.1 725.8C1348.0 722.7 1353.9 723.3 1353.9 727.0C1353.9 730.2 1349.2 732.3 1347.4 735.5H1361.2C1359.4 732.3 1354.7 730.2 1354.7 727.0C1354.7 723.3 1360.6 722.7 1362.4 725.8C1364.2 722.7 1370.1 723.3 1370.1 727.0C1370.1 730.2 1365.5 732.3 1363.6 735.5H1377.4C1375.6 732.3 1370.9 730.2 1370.9 727.0C1370.9 723.3 1376.8 722.7 1378.7 725.8C1380.5 722.7 1386.4 723.3 1386.4 727.0C1386.4 730.2 1381.7 732.3 1379.9 735.5H1386.8" fill="none" stroke="#5a7ac0" stroke-width="1.8" stroke-linejoin="round"/><rect x="1338.3" y="756.3" width="48.2" height="16.2" fill="url(#gHG2)" stroke="#5a7ac0" stroke-width="2.2"/><path d="M1338.3 771.7H1345.1C1343.3 768.2 1338.7 766.0 1338.7 762.5C1338.7 758.6 1344.5 757.9 1346.3 761.2C1348.1 757.9 1354.0 758.6 1354.0 762.5C1354.0 766.0 1349.3 768.2 1347.5 771.7H1361.2C1359.4 768.2 1354.8 766.0 1354.8 762.5C1354.8 758.6 1360.6 757.9 1362.4 761.2C1364.2 757.9 1370.0 758.6 1370.0 762.5C1370.0 766.0 1365.4 768.2 1363.6 771.7H1377.3C1375.5 768.2 1370.8 766.0 1370.8 762.5C1370.8 758.6 1376.7 757.9 1378.5 761.2C1380.3 757.9 1386.1 758.6 1386.1 762.5C1386.1 766.0 1381.5 768.2 1379.7 771.7H1386.5" fill="none" stroke="#5a7ac0" stroke-width="2.2" stroke-linejoin="round"/><path d="M1339.5 787.0H1346.0C1344.3 783.8 1339.9 781.7 1339.9 778.5C1339.9 774.8 1345.4 774.2 1347.2 777.2C1348.9 774.2 1354.5 774.8 1354.5 778.5C1354.5 781.7 1350.0 783.8 1348.3 787.0H1361.3C1359.6 783.8 1355.2 781.7 1355.2 778.5C1355.2 774.8 1360.8 774.2 1362.5 777.2C1364.2 774.2 1369.8 774.8 1369.8 778.5C1369.8 781.7 1365.4 783.8 1363.7 787.0H1376.7C1375.0 783.8 1370.5 781.7 1370.5 778.5C1370.5 774.8 1376.1 774.2 1377.8 777.2C1379.6 774.2 1385.1 774.8 1385.1 778.5C1385.1 781.7 1380.7 783.8 1379.0 787.0H1385.5" fill="none" stroke="#96a4b4" stroke-width="1.300"/><path d="M1339.5 802.8H1346.0C1344.3 799.5 1339.9 797.5 1339.9 794.3C1339.9 790.6 1345.4 790.0 1347.2 793.0C1348.9 790.0 1354.5 790.6 1354.5 794.3C1354.5 797.5 1350.0 799.5 1348.3 802.8H1361.3C1359.6 799.5 1355.2 797.5 1355.2 794.3C1355.2 790.6 1360.8 790.0 1362.5 793.0C1364.2 790.0 1369.8 790.6 1369.8 794.3C1369.8 797.5 1365.4 799.5 1363.7 802.8H1376.7C1375.0 799.5 1370.5 797.5 1370.5 794.3C1370.5 790.6 1376.1 790.0 1377.8 793.0C1379.6 790.0 1385.1 790.6 1385.1 794.3C1385.1 797.5 1380.7 799.5 1379.0 802.8H1385.5" fill="none" stroke="#96a4b4" stroke-width="1.300"/><polygon points="1287.1,829.1 1282.4,833.8 1275.6,833.8 1270.9,829.1 1270.9,822.3 1275.6,817.6 1282.4,817.6 1287.1,822.3" fill="#006400"/><polygon points="1317.1,829.1 1312.4,833.8 1305.6,833.8 1300.9,829.1 1300.9,822.3 1305.6,817.6 1312.4,817.6 1317.1,822.3" fill="#ffff00"/><polygon points="1347.1,829.1 1342.4,833.8 1335.6,833.8 1330.9,829.1 1330.9,822.3 1335.6,817.6 1342.4,817.6 1347.1,822.3" fill="#6a0000"/>

</svg>

<div id="taskbar" class="abs">
<div class="abs" style="left:0;top:0;width:1600px;height:1px;background:#3c3c3c"></div>
<span class="abs" id="k_ari" style="left:65px;top:10.500px;font-size:15px;color:#fff;white-space:nowrap;letter-spacing:-0.1px">ARI - IND</span>
<span class="abs" id="k_vid" style="left:65px;top:30.500px;font-size:15.500px;color:#cdcdcd;white-space:nowrap;letter-spacing:0.28px">Video highlight</span>
<div class="abs" style="left:472px;top:11px;width:273px;height:38px;border-radius:19px;background:#f3f3f3;box-shadow:inset 0 0 0 1px #fbfbfb" id="pill">
<span class="abs" id="k_search" style="left:45.500px;top:9px;font-size:17px;color:#454545;white-space:nowrap;transform-origin:0 50%;transform:scaleX(0.93)">Search</span>
<div class="abs" style="left:1.500px;top:1.500px;width:270px;height:35px;border-radius:17.500px;overflow:hidden"><svg style="left:-1.500px;top:-1.500px" width="273" height="38" viewBox="472 851 273 38">
<defs>
<radialGradient id="gAtm" cx="714.500" cy="898" r="45" gradientUnits="userSpaceOnUse"><stop offset="0.78" stop-color="#07263f"/><stop offset="0.835" stop-color="#08273f"/><stop offset="0.89" stop-color="#34597b"/><stop offset="0.95" stop-color="#a3bed4"/><stop offset="1" stop-color="#f3f3f3"/></radialGradient>
<radialGradient id="gEarth" cx="714.500" cy="898" r="35.100" gradientUnits="userSpaceOnUse"><stop offset="0" stop-color="#07274a"/><stop offset="0.62" stop-color="#07274a"/><stop offset="0.74" stop-color="#0a4f98"/><stop offset="0.88" stop-color="#0f86e6"/><stop offset="0.97" stop-color="#3ab0ff"/><stop offset="1" stop-color="#0d5ca8"/></radialGradient>
<radialGradient id="gGlow"><stop offset="0" stop-color="#ffd85a"/><stop offset="0.4" stop-color="#e8be48" stop-opacity="0.85"/><stop offset="1" stop-color="#c8b050" stop-opacity="0"/></radialGradient>
<linearGradient id="gOcean" x1="0" y1="0" x2="1" y2="0"><stop offset="0" stop-color="#07274a" stop-opacity="0"/><stop offset="0.6" stop-color="#07274a" stop-opacity="0.9"/></linearGradient>
<clipPath id="cpG"><path d="M675.500 851v21c1 6 5 12 11.500 15.800l58.500.5v-37.300z"/></clipPath>
<clipPath id="cpE"><circle cx="714.500" cy="898" r="35.100"/></clipPath>
</defs>
<g clip-path="url(#cpG)">
<circle cx="714.500" cy="898" r="45" fill="url(#gAtm)"/>
<circle cx="714.500" cy="898" r="35.100" fill="url(#gEarth)"/>
<g clip-path="url(#cpE)">
<path d="M723 868l18 4v18h-30l3-6 5-1 4-4-2-5z" fill="#07274a" opacity="0.850"/>
<polygon points="689.2,878.0 691.3,873.7 692.9,871.1 699.9,868.9 706.8,870.0 711.6,869.2 718.0,870.0 723.3,868.4 728.7,869.5 724.4,872.1 724.9,875.9 721.7,878.5 723.3,883.3 720.1,880.1 715.9,879.1 709.5,880.7 708.4,883.3 708.1,887.1 695.1,887.1 692.9,883.3 690.3,880.7" fill="#7f8b5c" opacity="0.920"/>
<circle cx="704.7" cy="873.2" r="3.2" fill="url(#gGlow)"/>
<circle cx="693.5" cy="878.0" r="3.4" fill="url(#gGlow)"/>
<circle cx="720.7" cy="874.8" r="3.2" fill="url(#gGlow)"/>
<circle cx="706.8" cy="880.7" r="2.6" fill="url(#gGlow)"/>
<circle cx="720.7" cy="871.9" r="1.1" fill="#fff3c8"/>
<circle cx="717.2" cy="876.4" r="0.9" fill="#fff3c8"/>
<circle cx="707.6" cy="875.3" r="0.8" fill="#fff3c8"/>
<circle cx="699.3" cy="878.3" r="0.8" fill="#fff3c8"/>
<circle cx="692.7" cy="879.9" r="1.0" fill="#fff3c8"/>
<circle cx="705.5" cy="881.5" r="0.9" fill="#fff3c8"/>
<circle cx="699.3" cy="880.9" r="0.7" fill="#fff3c8"/>
<circle cx="701.5" cy="873.5" r="0.7" fill="#fff3c8"/>
<circle cx="715.3" cy="879.6" r="0.6" fill="#fff3c8"/>
<path d="M720 884.500c2-1 5-.8 7 .5l2 2.500" stroke="#b0a058" stroke-width="0.700" fill="none"/>
</g></g>
</svg></div>
</div>
<span class="abs" id="k_time" style="right:24px;top:10.500px;font-size:15px;color:#fff;white-space:nowrap;letter-spacing:-0.25px">8:17 PM</span>
<span class="abs" id="k_date" style="right:24px;top:30.500px;font-size:15px;color:#fff;white-space:nowrap;letter-spacing:0.2px">10/12/2025</span>
<svg style="left:0;top:0" width="1600" height="60" viewBox="0 840 1600 60">
<defs>
<linearGradient id="gWin" x1="0" y1="0" x2="1" y2="1"><stop offset="0" stop-color="#74ebfd"/><stop offset="1" stop-color="#0f8df3"/></linearGradient>
<linearGradient id="gTV" x1="0" y1="0" x2="1" y2="1"><stop offset="0" stop-color="#ffffff"/><stop offset="1" stop-color="#d0d0d0"/></linearGradient>
<linearGradient id="gCopL" x1="0" y1="0" x2="0" y2="1"><stop offset="0" stop-color="#2cbcff"/><stop offset="0.3" stop-color="#1a8ee6"/><stop offset="0.6" stop-color="#4cb870"/><stop offset="0.9" stop-color="#efc81a"/><stop offset="1" stop-color="#f5c414"/></linearGradient>
<linearGradient id="gCopR" x1="0.6" y1="0" x2="0.4" y2="1"><stop offset="0" stop-color="#b355ee"/><stop offset="0.25" stop-color="#b850d8"/><stop offset="0.6" stop-color="#f0548e"/><stop offset="1" stop-color="#ffb254"/></linearGradient>
<linearGradient id="gEdge" x1="0.2" y1="0" x2="0.5" y2="1"><stop offset="0" stop-color="#2a9cec"/><stop offset="0.5" stop-color="#1681dc"/><stop offset="1" stop-color="#0b6fd2"/></linearGradient>
<linearGradient id="gEdgeG" x1="0" y1="0.3" x2="1" y2="0.6"><stop offset="0" stop-color="#35b4f2"/><stop offset="0.5" stop-color="#2cc4d4"/><stop offset="1" stop-color="#74ea58"/></linearGradient>
<linearGradient id="gFold" x1="0" y1="0" x2="0" y2="1"><stop offset="0" stop-color="#ffd75e"/><stop offset="1" stop-color="#f8b72a"/></linearGradient>
<linearGradient id="gCloud" x1="0" y1="0" x2="1" y2="1"><stop offset="0" stop-color="#6cc8fb"/><stop offset="1" stop-color="#2b86ee"/></linearGradient>
<linearGradient id="gApqs" x1="0" y1="0" x2="0" y2="1"><stop offset="0" stop-color="#79b6ec"/><stop offset="1" stop-color="#a9d4f6"/></linearGradient>
</defs><path d="M30 858.800l4.200 1.300 5.800-2.800 5.800 2.800 4.200-1.300v16.700c0 3-3.700 4.200-10 6.800-6.300-2.600-10-3.800-10-6.800z" fill="#fff"/><path d="M31.300 860.500l3 .9 5.700-2.700 5.700 2.700 3-.9v14.800c0 2.200-3.200 3.300-8.700 5.600-5.500-2.300-8.700-3.400-8.700-5.600z" fill="#fff" stroke="#1b3f8c" stroke-width="1.100"/><path d="M31.300 860.500l3 .9 5.700-2.700 5.700 2.700 3-.9v6.300h-17.400z" fill="#1b3f8c"/><g fill="#fff"><circle cx="33.500" cy="862.800" r="0.650"/><circle cx="36.200" cy="862.300" r="0.650"/><circle cx="33.500" cy="865.200" r="0.650"/><circle cx="36.200" cy="864.900" r="0.650"/><path d="M38.500 865.500l2.500-3.500 1.500 2.500z"/></g><text x="40.300" y="877" font-family="Liberation Serif,serif" font-weight="bold" font-size="12" fill="#d5181e" text-anchor="middle" textLength="15.500" lengthAdjust="spacingAndGlyphs">NFL</text><circle cx="48.700" cy="857.600" r="9.600" fill="#c42b1c"/><text x="49" y="863" font-family="Liberation Sans,sans-serif" font-weight="bold" font-size="13.800" fill="#fff" text-anchor="middle">1</text><clipPath id="cpWin"><rect x="424.800" y="855.700" width="14.100" height="14.100" rx="1"/><rect x="439.900" y="855.700" width="14.100" height="14.100" rx="1"/><rect x="424.800" y="870.800" width="14.100" height="14.100" rx="1"/><rect x="439.900" y="870.800" width="14.100" height="14.100" rx="1"/></clipPath><rect x="424.800" y="855.700" width="29.200" height="29.200" fill="url(#gWin)" clip-path="url(#cpWin)"/><circle cx="493.750" cy="869" r="6.600" fill="#e9e9e9" stroke="#1f1f1f" stroke-width="1.800"/><path d="M498.700 873.800l4.500 4.700" stroke="#1f1f1f" stroke-width="2" stroke-linecap="round"/><rect x="761" y="864" width="22.800" height="19.800" rx="2" fill="#666"/><rect x="768.500" y="856" width="22.500" height="20.300" rx="2" fill="url(#gTV)"/><rect x="768.500" y="864" width="15.300" height="12.300" fill="#bdbdbd" opacity="0.850"/><path d="M833.200 857.800h2.300q2.300 0 2.800 2.500l.9 3.300h-7.600z" fill="#0c44cc"/><path d="M823 875.900h7.800l-2.300 6.100h-1.500q-2.200 0-2.800-2.200z" fill="#f05a30"/><path d="M823.500 857.800h9.700l-5.200 18.100h-9q-2.500 0-1.800-2.600l3.400-13q.7-2.500 2.900-2.500z" fill="url(#gCopL)"/><path d="M836 863.600h6.500q3.300 0 2.700 3.300-1.700 8.100-4.400 12.700-1.500 2.400-4.300 2.400h-8l5.700-16q.8-2.400 1.800-2.400z" fill="url(#gCopR)"/><circle cx="896.250" cy="862.300" r="3" fill="#5059c9"/><path d="M891.500 866.500h7.600a1.500 1.500 0 0 1 1.500 1.500v6.500a4.500 4.500 0 0 1-9 .5z" fill="#5059c9"/><circle cx="886.500" cy="861.200" r="4.300" fill="#7b83eb"/><path d="M878.800 866.300h13.200a1.500 1.500 0 0 1 1.500 1.500v8a7.400 7.400 0 0 1-14.800 0z" fill="#7b83eb"/><rect x="871" y="862.500" width="15" height="15" rx="1.500" fill="#4b53bc"/><text x="878.500" y="874.300" font-family="Liberation Sans,sans-serif" font-weight="bold" font-size="11" fill="#fff" text-anchor="middle">T</text><circle cx="941" cy="869.900" r="15.200" fill="url(#gEdge)"/><path d="M926 866C927 858 934 854.700 941.500 854.700C950 854.700 956.200 861 956.200 868C956.200 872.500 953 875.300 948.500 875.300C945.500 875.300 943 874 943 872.300C943 871.200 943.800 870.600 943.800 869.300C943.800 866.500 941 864 937.500 863.200C933 862.300 928.500 863.600 926 866Z" fill="url(#gEdgeG)"/><path d="M938.500 871.500C937 869.500 937 868 937.500 867C934.500 869 933.800 873.500 935 877C937 882.500 943 884.500 948 883C951 882 953 879.500 954 877C953.600 877.300 952.500 877.800 950.500 878C945 878.500 940 875.800 938.500 871.500Z" fill="#0c57a6"/><path d="M943.800 869.300C943.800 867.500 942 866.300 940.300 866.800C938.500 867.300 937.800 869.300 938.500 871.500C940 875.800 945 878.500 950.500 878C952.500 877.800 953.600 877.300 954 877C955 875.500 955.600 874 956 872.300C954.500 874.300 951.800 875.300 948.500 875.300C945.500 875.300 943 874 943 872.300C943 871.200 943.800 870.600 943.800 869.300Z" fill="#1c1c1c"/><path d="M981 858.500a1.500 1.500 0 0 1 1.500-1.500h8.500l3 3h-13z" fill="#e2a21e"/><path d="M981 860h28.700a1.500 1.500 0 0 1 1.500 1.500v20.500a1.500 1.500 0 0 1-1.500 1.500h-27.200a1.500 1.500 0 0 1-1.500-1.500z" fill="url(#gFold)"/><path d="M986.300 883.500v-5.700a1.600 1.600 0 0 1 1.600-1.600h16.100a1.600 1.600 0 0 1 1.600 1.600v5.700z" fill="#1a7cd6"/><rect x="989" y="879.300" width="14" height="1.600" rx="0.800" fill="#0f5cae"/><rect x="992.300" y="890.300" width="7.700" height="3.600" rx="1.800" fill="#9c9c9c"/><rect x="1036" y="855" width="22.100" height="22.300" rx="3" fill="#efefef"/><g fill="#e2350f"><rect x="1039" y="857.800" width="2.600" height="2.400"/><rect x="1044" y="857.800" width="2.600" height="2.400"/><rect x="1049" y="857.800" width="2.600" height="2.400"/><rect x="1039" y="862.800" width="2.600" height="2.400"/><rect x="1039" y="867.800" width="2.600" height="2.400"/></g><path d="M1053.500 861.500v13M1042.500 872.700h14" stroke="#9aa0a6" stroke-width="2.200" fill="none" stroke-linecap="round"/><path d="M1054 874l-1.300 5.500M1056.500 872.800l4.500-1.200" stroke="#29a3e8" stroke-width="1.600" fill="none"/><circle cx="1063.500" cy="870.600" r="2.500" fill="none" stroke="#29a3e8" stroke-width="1.500"/><circle cx="1051.900" cy="881.900" r="2.500" fill="none" stroke="#29a3e8" stroke-width="1.500"/><rect x="1091" y="855" width="30.300" height="30" rx="6.500" fill="#fff"/><path d="M1098.500 876.900a4.500 4.500 0 0 1-.6-8.900 5.200 5.200 0 0 1 7-3.600 6.700 6.700 0 0 1 11.800 3.200 4.800 4.800 0 0 1-1 9.300z" fill="url(#gCloud)"/><rect x="1146.300" y="855" width="29.700" height="29.800" rx="2.500" fill="url(#gApqs)" stroke="#2f8ae0" stroke-width="1"/><path d="M1148.500 858.500c5-1.500 9 1 14 0s7-1 9.500-.5v12c-3-.5-5 0-9.500.8s-9-1.200-14 .2z" fill="#3a6cba"/><text x="1160" y="868.200" font-family="Liberation Serif,serif" font-size="7.500" fill="#fff" text-anchor="middle" textLength="20" lengthAdjust="spacingAndGlyphs">APQS</text><path d="M1148 877.500c6 .8 12-.3 17-1.800" stroke="#44679c" stroke-width="0.700" stroke-dasharray="1.600 1.200" fill="none"/><path d="M1175 865l-13 16-1.500.8.500-1.800z" fill="#c8ccd2" stroke="#7a8088" stroke-width="0.500"/><rect x="1157.300" y="890.300" width="7.700" height="3.600" rx="1.800" fill="#9c9c9c"/><path d="M1281.500 873l6.500-6.200 6.500 6.200" stroke="#fff" fill="none" stroke-linecap="round" stroke-linejoin="round" stroke-width="1.700"/><g stroke="#fff" fill="none" stroke-linecap="round" stroke-linejoin="round" stroke-width="1.400"><path d="M1324.800 878.800l1.200-5 7.200-11.300a2.500 2.500 0 0 1 3.400-.8 2.500 2.500 0 0 1 .8 3.400l-7.200 11.300z"/><path d="M1327 872.500l3.200 2.300"/><path d="M1325.500 873c-2.500-.3-4 1.200-3.600 3 .4 1.700 2 2.600 3.200 2.500"/><path d="M1335 868.500c2.500-.5 3.800.7 3.500 2-.3 1.200-2 1.800-3.700 1.400"/></g><rect x="1358.700" y="862.800" width="19" height="13.400" rx="2" stroke="#fff" fill="none" stroke-linecap="round" stroke-linejoin="round" stroke-width="1.400"/><g fill="#fff"><rect x="1362.500" y="866" width="1.500" height="1.500"/><rect x="1365.800" y="866" width="1.500" height="1.500"/><rect x="1369.100" y="866" width="1.500" height="1.500"/><rect x="1372.400" y="866" width="1.500" height="1.500"/><rect x="1364.100" y="869" width="1.500" height="1.500"/><rect x="1367.400" y="869" width="1.500" height="1.500"/><rect x="1370.700" y="869" width="1.500" height="1.500"/><rect x="1363" y="872.200" width="10.500" height="1.400" rx="0.700"/></g><g stroke="#fff" fill="none" stroke-linecap="round" stroke-linejoin="round" stroke-width="1.500"><path d="M1398.500 867.500a13.500 13.500 0 0 1 19 0"/><path d="M1401.500 870.800a9.200 9.200 0 0 1 13 0"/><path d="M1404.600 874a4.800 4.800 0 0 1 6.800 0"/></g><circle cx="1408" cy="876" r="1.300" fill="#fff"/><path d="M1428.500 867h3.200l4.300-4v14l-4.300-4h-3.200z" stroke="#fff" fill="none" stroke-linecap="round" stroke-linejoin="round" stroke-width="1.400"/><path d="M1439 866.500a5 5 0 0 1 0 7" stroke="#fff" fill="none" stroke-linecap="round" stroke-linejoin="round" stroke-width="1.400"/><path d="M1442 864a9 9 0 0 1 0 12" stroke="#777" fill="none" stroke-width="1.300" stroke-linecap="round"/><path d="M1445 861.800a12.500 12.500 0 0 1 0 16.400" stroke="#555" fill="none" stroke-width="1.300" stroke-linecap="round"/><path d="M1466 865.200h7.500a2.500 2.500 0 0 1 2.500 2.500v5.600a2.500 2.500 0 0 1-2.500 2.500h-13" stroke="#fff" fill="none" stroke-linecap="round" stroke-linejoin="round" stroke-width="1.400"/><path d="M1477.300 868.500v4" stroke="#fff" fill="none" stroke-linecap="round" stroke-linejoin="round" stroke-width="1.700"/><path d="M1465.500 860.500c-4.500 1-7 4.500-6 9.500 4.500-.3 7.500-4 6-9.500z" fill="#fff"/><path d="M1463.500 864l-4.500 9.500" stroke="#1c1c1c" stroke-width="0.900"/><path d="M1459.200 873l-1 2.500" stroke="#fff" stroke-width="1.200" stroke-linecap="round"/>

</svg>

</div>
</body>
</html>
